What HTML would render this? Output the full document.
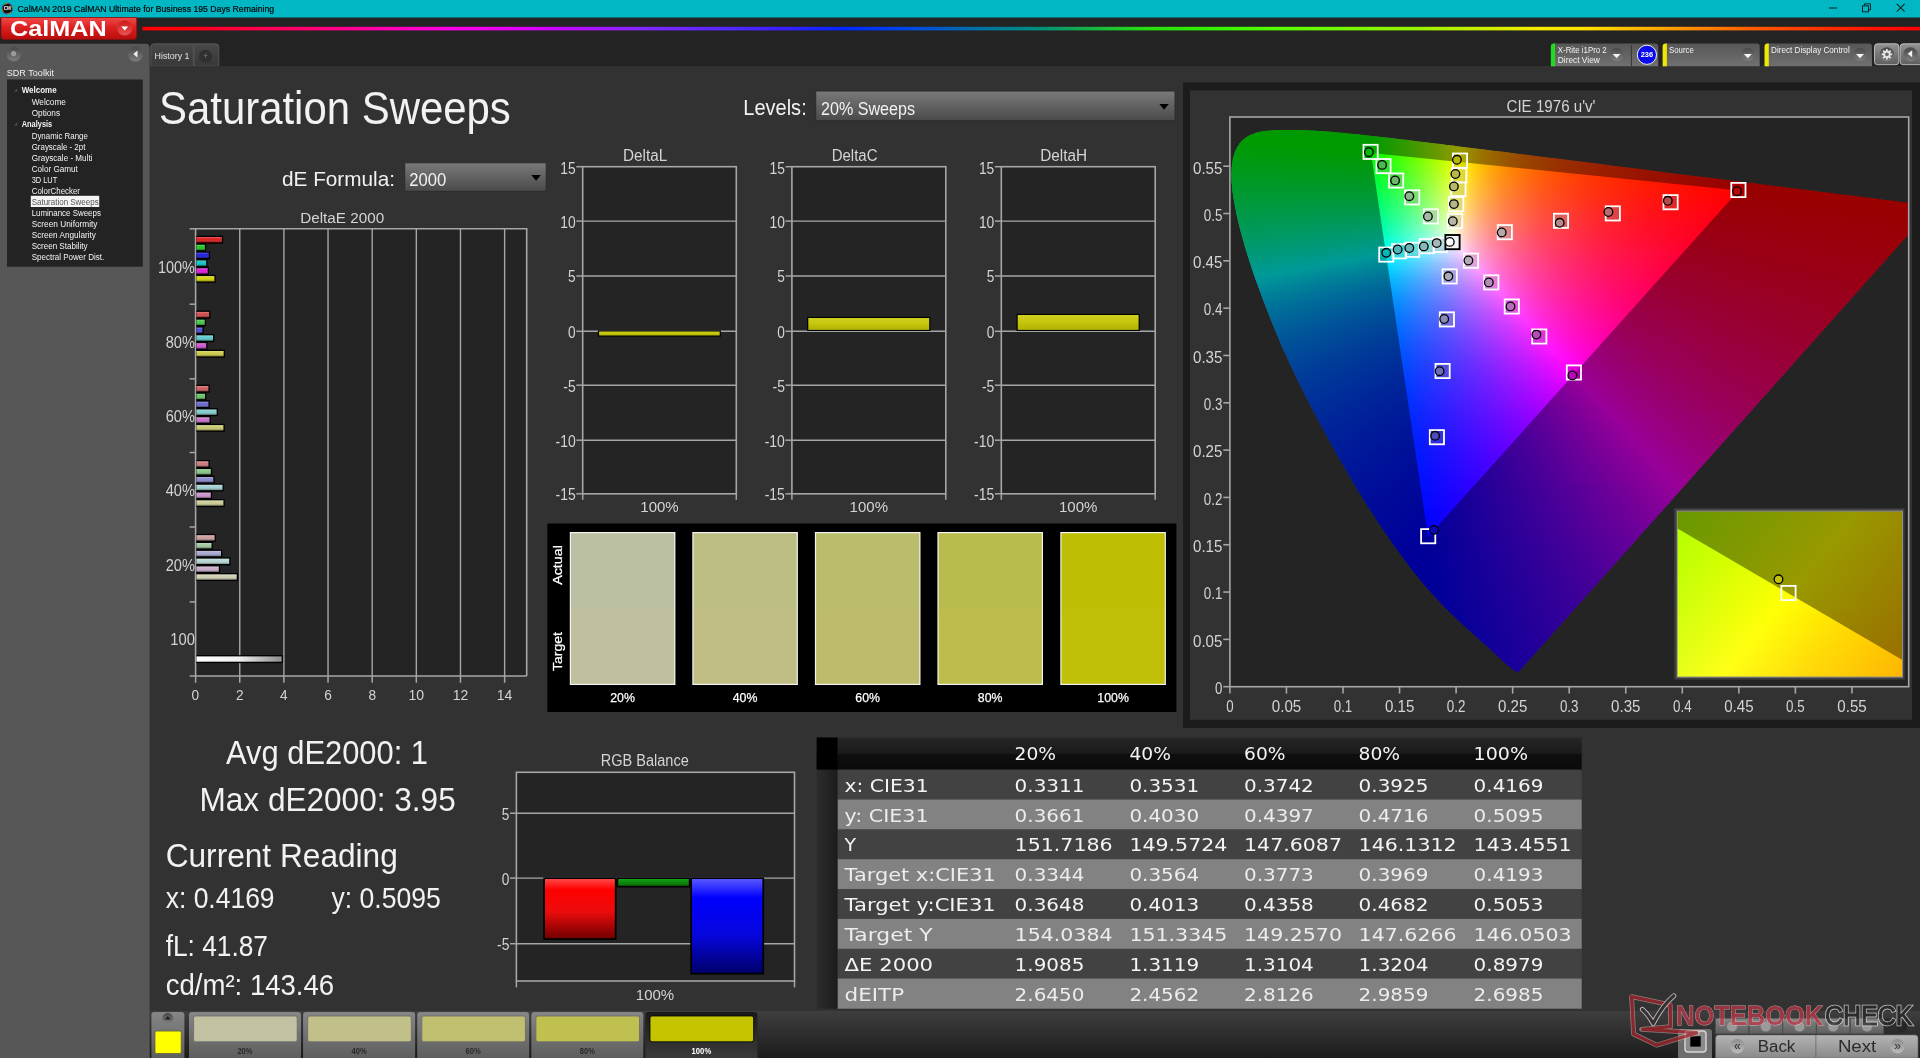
<!DOCTYPE html>
<html lang="en"><head><meta charset="utf-8"><title>CalMAN 2019 - Saturation Sweeps</title>
<style>
html,body{margin:0;padding:0;background:#323232;overflow:hidden}
body{width:1920px;height:1058px;font-family:"Liberation Sans", sans-serif}
svg{display:block;will-change:transform}
text{font-family:"Liberation Sans", sans-serif}
text.dj{font-family:"DejaVu Sans", "Liberation Sans", sans-serif}
</style></head><body>
<svg width="1920" height="1058" viewBox="0 0 1920 1058">
<defs><clipPath id="cplot"><rect x="1229.9" y="117.0" width="678.8" height="569.7"/></clipPath><clipPath id="clocus"><path d="M1518.7,671.6 L1518.6,671.6 L1518.5,671.6 L1518.4,671.7 L1518.2,671.7 L1518.1,671.7 L1517.9,671.6 L1517.7,671.6 L1517.6,671.6 L1517.4,671.6 L1517.2,671.6 L1517.1,671.6 L1516.9,671.6 L1516.7,671.6 L1516.5,671.5 L1516.3,671.5 L1516.0,671.4 L1515.8,671.3 L1515.5,671.2 L1515.1,670.9 L1514.7,670.7 L1514.1,670.3 L1513.6,670.0 L1513.0,669.5 L1512.4,669.1 L1511.7,668.6 L1511.0,668.0 L1510.3,667.4 L1509.5,666.7 L1508.6,666.0 L1507.7,665.2 L1506.7,664.4 L1505.7,663.5 L1504.5,662.5 L1503.3,661.4 L1502.1,660.3 L1500.8,659.1 L1499.4,657.8 L1498.0,656.5 L1496.5,655.1 L1494.9,653.6 L1493.3,652.1 L1491.6,650.5 L1489.7,648.8 L1487.8,647.1 L1485.8,645.3 L1483.6,643.3 L1481.4,641.3 L1479.0,639.1 L1476.5,636.9 L1473.9,634.5 L1471.2,632.1 L1468.4,629.6 L1465.5,627.0 L1462.5,624.2 L1459.4,621.3 L1456.1,618.2 L1452.7,615.0 L1449.2,611.5 L1445.5,607.9 L1441.8,604.0 L1437.9,600.0 L1433.9,595.7 L1429.7,591.1 L1425.3,586.1 L1420.7,580.5 L1415.7,574.3 L1410.3,567.5 L1404.7,560.1 L1398.7,552.0 L1392.6,543.4 L1386.3,534.3 L1379.8,524.7 L1373.1,514.6 L1366.3,503.9 L1359.4,492.7 L1352.3,480.9 L1345.1,468.6 L1337.9,455.9 L1330.6,442.9 L1323.4,429.7 L1316.2,416.3 L1309.1,402.7 L1302.1,389.0 L1295.3,375.2 L1288.8,361.5 L1282.6,347.9 L1276.9,334.5 L1271.5,321.3 L1266.4,308.5 L1261.7,296.0 L1257.3,284.0 L1253.2,272.4 L1249.5,261.3 L1246.2,250.8 L1243.3,240.8 L1240.7,231.5 L1238.5,222.8 L1236.6,214.6 L1235.1,206.9 L1233.8,199.8 L1232.8,193.2 L1232.1,187.0 L1231.6,181.4 L1231.5,176.1 L1231.5,171.2 L1231.8,166.7 L1232.3,162.5 L1233.0,158.5 L1234.0,154.9 L1235.1,151.6 L1236.5,148.6 L1238.1,145.8 L1239.8,143.3 L1241.7,141.1 L1243.8,139.2 L1246.0,137.5 L1248.3,136.0 L1250.8,134.7 L1253.3,133.7 L1256.0,132.8 L1258.7,132.1 L1261.6,131.5 L1264.5,131.1 L1267.5,130.7 L1270.5,130.5 L1273.7,130.2 L1276.8,130.1 L1280.0,130.0 L1283.2,129.9 L1286.4,129.9 L1289.6,129.9 L1292.8,129.9 L1296.0,129.9 L1299.3,130.0 L1302.5,130.1 L1305.8,130.2 L1309.1,130.4 L1312.5,130.5 L1315.9,130.7 L1319.3,130.9 L1322.9,131.2 L1326.4,131.5 L1330.0,131.7 L1333.7,132.0 L1337.4,132.4 L1341.2,132.7 L1345.1,133.1 L1349.0,133.5 L1353.1,133.9 L1357.1,134.3 L1361.3,134.8 L1365.6,135.2 L1369.9,135.7 L1374.3,136.2 L1378.8,136.7 L1383.4,137.2 L1388.1,137.8 L1392.9,138.3 L1397.8,138.9 L1402.8,139.5 L1407.9,140.1 L1413.1,140.8 L1418.4,141.4 L1423.8,142.1 L1429.3,142.7 L1434.9,143.4 L1440.7,144.1 L1446.5,144.9 L1452.5,145.6 L1458.6,146.4 L1464.8,147.2 L1471.2,147.9 L1477.6,148.8 L1484.2,149.6 L1490.9,150.4 L1497.7,151.3 L1504.6,152.1 L1511.7,153.0 L1518.8,153.9 L1526.1,154.8 L1533.5,155.8 L1540.9,156.7 L1548.5,157.7 L1556.2,158.6 L1564.0,159.6 L1571.9,160.6 L1579.8,161.6 L1587.9,162.6 L1596.0,163.6 L1604.1,164.6 L1612.4,165.7 L1620.7,166.7 L1629.0,167.8 L1637.2,168.8 L1645.5,169.8 L1653.6,170.9 L1661.6,171.9 L1669.6,172.9 L1677.5,173.9 L1685.5,174.9 L1693.4,175.9 L1701.3,176.9 L1709.1,177.8 L1716.8,178.8 L1724.4,179.8 L1731.7,180.7 L1738.9,181.6 L1746.0,182.5 L1752.8,183.3 L1759.5,184.1 L1766.1,185.0 L1772.5,185.8 L1778.7,186.6 L1784.8,187.3 L1790.7,188.1 L1796.4,188.8 L1801.8,189.5 L1807.2,190.1 L1812.3,190.8 L1817.2,191.4 L1822.0,192.0 L1826.6,192.6 L1831.0,193.1 L1835.3,193.7 L1839.5,194.2 L1843.5,194.7 L1847.3,195.2 L1851.0,195.6 L1854.6,196.1 L1858.2,196.5 L1861.6,197.0 L1865.0,197.4 L1868.2,197.8 L1871.4,198.2 L1874.4,198.6 L1877.4,198.9 L1880.2,199.3 L1882.9,199.7 L1885.6,200.0 L1888.1,200.3 L1890.6,200.6 L1892.9,200.9 L1895.2,201.2 L1897.3,201.5 L1899.4,201.7 L1901.3,202.0 L1903.1,202.2 L1904.7,202.4 L1906.3,202.6 L1907.8,202.8 L1909.3,203.0 L1910.7,203.1 L1912.0,203.3 L1913.3,203.5 L1914.5,203.6 L1915.6,203.8 L1916.7,203.9 L1917.7,204.0 L1918.6,204.1 L1919.5,204.2 L1920.3,204.3 L1921.0,204.4 L1921.6,204.5 L1922.2,204.6 L1922.8,204.7 L1923.4,204.7 L1924.0,204.8 L1924.5,204.9 L1925.0,204.9 L1925.5,205.0 L1926.0,205.1 L1926.4,205.1 L1926.9,205.2 L1927.3,205.2 L1927.7,205.3 L1928.1,205.3 L1928.6,205.4 L1929.0,205.4 L1929.4,205.5 L1929.8,205.5 L1930.2,205.6 L1930.6,205.7 L1931.0,205.7 L1931.4,205.7 L1931.7,205.8 L1932.0,205.8 L1932.3,205.9 L1932.5,205.9 L1932.6,205.9 L1932.8,205.9 L1932.9,205.9 L1933.0,206.0 L1933.2,206.0 L1933.3,206.0 L1933.4,206.0 L1933.5,206.0 L1933.6,206.0 L1933.6,206.0 L1933.7,206.0 L1933.7,206.0Z"/></clipPath><linearGradient id="cg0" gradientUnits="userSpaceOnUse" x1="1264" x2="1322" y1="0" y2="0"><stop offset="0.0000" stop-color="#00ff00"/><stop offset="1.0000" stop-color="#00ff00"/></linearGradient><linearGradient id="cg1" gradientUnits="userSpaceOnUse" x1="1254" x2="1346" y1="0" y2="0"><stop offset="0.0000" stop-color="#00ff00"/><stop offset="1.0000" stop-color="#00ff00"/></linearGradient><linearGradient id="cg2" gradientUnits="userSpaceOnUse" x1="1249" x2="1365" y1="0" y2="0"><stop offset="0.0000" stop-color="#00ff00"/><stop offset="1.0000" stop-color="#00ff00"/></linearGradient><linearGradient id="cg3" gradientUnits="userSpaceOnUse" x1="1245" x2="1383" y1="0" y2="0"><stop offset="0.0000" stop-color="#00ff00"/><stop offset="0.8913" stop-color="#00ff00"/><stop offset="1.0000" stop-color="#20ff00"/></linearGradient><linearGradient id="cg4" gradientUnits="userSpaceOnUse" x1="1242" x2="1400" y1="0" y2="0"><stop offset="0.0000" stop-color="#00ff00"/><stop offset="0.8038" stop-color="#00ff00"/><stop offset="1.0000" stop-color="#47ff00"/></linearGradient><linearGradient id="cg5" gradientUnits="userSpaceOnUse" x1="1240" x2="1416" y1="0" y2="0"><stop offset="0.0000" stop-color="#00ff01"/><stop offset="0.7330" stop-color="#00ff00"/><stop offset="0.8693" stop-color="#36ff00"/><stop offset="1.0000" stop-color="#71ff00"/></linearGradient><linearGradient id="cg6" gradientUnits="userSpaceOnUse" x1="1239" x2="1433" y1="0" y2="0"><stop offset="0.0000" stop-color="#00ff04"/><stop offset="0.6701" stop-color="#00ff00"/><stop offset="0.8351" stop-color="#49ff00"/><stop offset="1.0000" stop-color="#a1ff00"/></linearGradient><linearGradient id="cg7" gradientUnits="userSpaceOnUse" x1="1237" x2="1449" y1="0" y2="0"><stop offset="0.0000" stop-color="#00ff07"/><stop offset="0.2217" stop-color="#00ff00"/><stop offset="0.6274" stop-color="#01ff00"/><stop offset="0.8255" stop-color="#65ff00"/><stop offset="1.0000" stop-color="#d3ff00"/></linearGradient><linearGradient id="cg8" gradientUnits="userSpaceOnUse" x1="1236" x2="1465" y1="0" y2="0"><stop offset="0.0000" stop-color="#00ff0a"/><stop offset="0.2969" stop-color="#00ff00"/><stop offset="0.5852" stop-color="#00ff00"/><stop offset="0.7686" stop-color="#65ff00"/><stop offset="0.8777" stop-color="#adff00"/><stop offset="0.9825" stop-color="#fdff00"/><stop offset="1.0000" stop-color="#fff300"/></linearGradient><linearGradient id="cg9" gradientUnits="userSpaceOnUse" x1="1235" x2="1481" y1="0" y2="0"><stop offset="0.0000" stop-color="#00ff0d"/><stop offset="0.3577" stop-color="#00ff00"/><stop offset="0.5488" stop-color="#00ff00"/><stop offset="0.6463" stop-color="#37ff00"/><stop offset="0.7439" stop-color="#75ff00"/><stop offset="0.8333" stop-color="#b7ff00"/><stop offset="0.9187" stop-color="#feff00"/><stop offset="1.0000" stop-color="#ffc500"/></linearGradient><linearGradient id="cg10" gradientUnits="userSpaceOnUse" x1="1234" x2="1497" y1="0" y2="0"><stop offset="0.0000" stop-color="#00ff0f"/><stop offset="0.5209" stop-color="#01ff00"/><stop offset="0.6160" stop-color="#3bff00"/><stop offset="0.7034" stop-color="#78ff00"/><stop offset="0.7871" stop-color="#baff00"/><stop offset="0.8631" stop-color="#feff00"/><stop offset="0.9278" stop-color="#ffcc00"/><stop offset="1.0000" stop-color="#ffa200"/></linearGradient><linearGradient id="cg11" gradientUnits="userSpaceOnUse" x1="1233" x2="1513" y1="0" y2="0"><stop offset="0.0000" stop-color="#00ff12"/><stop offset="0.4929" stop-color="#00ff00"/><stop offset="0.5821" stop-color="#3bff00"/><stop offset="0.6643" stop-color="#78ff00"/><stop offset="0.7429" stop-color="#baff00"/><stop offset="0.8143" stop-color="#ffff00"/><stop offset="0.8536" stop-color="#ffdb00"/><stop offset="0.8964" stop-color="#ffbc00"/><stop offset="1.0000" stop-color="#ff8700"/></linearGradient><linearGradient id="cg12" gradientUnits="userSpaceOnUse" x1="1232" x2="1529" y1="0" y2="0"><stop offset="0.0000" stop-color="#00ff15"/><stop offset="0.4680" stop-color="#00ff02"/><stop offset="0.5488" stop-color="#38ff00"/><stop offset="0.6263" stop-color="#75ff00"/><stop offset="0.6970" stop-color="#b4ff00"/><stop offset="0.7710" stop-color="#fffe00"/><stop offset="0.8148" stop-color="#ffd500"/><stop offset="0.8687" stop-color="#ffae00"/><stop offset="0.9293" stop-color="#ff8e00"/><stop offset="1.0000" stop-color="#ff7100"/></linearGradient><linearGradient id="cg13" gradientUnits="userSpaceOnUse" x1="1232" x2="1545" y1="0" y2="0"><stop offset="0.0000" stop-color="#00ff18"/><stop offset="0.4441" stop-color="#00ff06"/><stop offset="0.5176" stop-color="#35ff02"/><stop offset="0.5942" stop-color="#75ff00"/><stop offset="0.6645" stop-color="#b8ff00"/><stop offset="0.7284" stop-color="#fdff00"/><stop offset="0.7859" stop-color="#ffca00"/><stop offset="0.8435" stop-color="#ffa200"/><stop offset="0.9137" stop-color="#ff7e00"/><stop offset="1.0000" stop-color="#ff5f00"/></linearGradient><linearGradient id="cg14" gradientUnits="userSpaceOnUse" x1="1231" x2="1561" y1="0" y2="0"><stop offset="0.0000" stop-color="#00ff1b"/><stop offset="0.4273" stop-color="#00ff0a"/><stop offset="0.5000" stop-color="#3aff05"/><stop offset="0.5697" stop-color="#78ff00"/><stop offset="0.6333" stop-color="#b8ff00"/><stop offset="0.6939" stop-color="#fdff00"/><stop offset="0.7545" stop-color="#ffc400"/><stop offset="0.8212" stop-color="#ff9600"/><stop offset="0.9030" stop-color="#ff7000"/><stop offset="1.0000" stop-color="#ff5000"/></linearGradient><linearGradient id="cg15" gradientUnits="userSpaceOnUse" x1="1231" x2="1577" y1="0" y2="0"><stop offset="0.0000" stop-color="#00ff1e"/><stop offset="0.4075" stop-color="#00ff0d"/><stop offset="0.4769" stop-color="#39ff09"/><stop offset="0.5434" stop-color="#77ff05"/><stop offset="0.6040" stop-color="#b8ff00"/><stop offset="0.6618" stop-color="#feff00"/><stop offset="0.7254" stop-color="#ffbe00"/><stop offset="0.7977" stop-color="#ff8d00"/><stop offset="0.8873" stop-color="#ff6500"/><stop offset="1.0000" stop-color="#ff4400"/></linearGradient><linearGradient id="cg16" gradientUnits="userSpaceOnUse" x1="1231" x2="1593" y1="0" y2="0"><stop offset="0.0000" stop-color="#00ff21"/><stop offset="0.3895" stop-color="#00ff11"/><stop offset="0.4503" stop-color="#34ff0e"/><stop offset="0.5166" stop-color="#74ff09"/><stop offset="0.5773" stop-color="#b8ff05"/><stop offset="0.6326" stop-color="#feff00"/><stop offset="0.6630" stop-color="#ffdb00"/><stop offset="0.6961" stop-color="#ffbb00"/><stop offset="0.7762" stop-color="#ff8500"/><stop offset="0.8757" stop-color="#ff5b00"/><stop offset="1.0000" stop-color="#ff3900"/></linearGradient><linearGradient id="cg17" gradientUnits="userSpaceOnUse" x1="1230" x2="1609" y1="0" y2="0"><stop offset="0.0000" stop-color="#00ff24"/><stop offset="0.3773" stop-color="#01ff15"/><stop offset="0.4406" stop-color="#3bff11"/><stop offset="0.4987" stop-color="#77ff0e"/><stop offset="0.5541" stop-color="#b8ff09"/><stop offset="0.6069" stop-color="#ffff05"/><stop offset="0.6385" stop-color="#ffd702"/><stop offset="0.6728" stop-color="#ffb600"/><stop offset="0.7546" stop-color="#ff7f00"/><stop offset="0.8628" stop-color="#ff5200"/><stop offset="1.0000" stop-color="#ff3000"/></linearGradient><linearGradient id="cg18" gradientUnits="userSpaceOnUse" x1="1230" x2="1624" y1="0" y2="0"><stop offset="0.0000" stop-color="#00ff27"/><stop offset="0.3629" stop-color="#00ff19"/><stop offset="0.4239" stop-color="#3aff16"/><stop offset="0.4797" stop-color="#77ff12"/><stop offset="0.5330" stop-color="#b9ff0e"/><stop offset="0.5812" stop-color="#fcff0a"/><stop offset="0.6193" stop-color="#ffd106"/><stop offset="0.6523" stop-color="#ffb102"/><stop offset="0.6929" stop-color="#ff9200"/><stop offset="0.7386" stop-color="#ff7700"/><stop offset="0.8528" stop-color="#ff4a00"/><stop offset="1.0000" stop-color="#ff2800"/></linearGradient><linearGradient id="cg19" gradientUnits="userSpaceOnUse" x1="1230" x2="1640" y1="0" y2="0"><stop offset="0.0000" stop-color="#00ff2a"/><stop offset="0.3488" stop-color="#00ff1d"/><stop offset="0.4024" stop-color="#35ff1a"/><stop offset="0.4585" stop-color="#74ff17"/><stop offset="0.5098" stop-color="#b6ff13"/><stop offset="0.5585" stop-color="#fdff0f"/><stop offset="0.5951" stop-color="#ffd00a"/><stop offset="0.6293" stop-color="#ffae06"/><stop offset="0.6707" stop-color="#ff8e02"/><stop offset="0.7195" stop-color="#ff7100"/><stop offset="0.8390" stop-color="#ff4400"/><stop offset="1.0000" stop-color="#ff2100"/></linearGradient><linearGradient id="cg20" gradientUnits="userSpaceOnUse" x1="1230" x2="1656" y1="0" y2="0"><stop offset="0.0000" stop-color="#00ff2d"/><stop offset="0.3380" stop-color="#01ff21"/><stop offset="0.3920" stop-color="#3aff1e"/><stop offset="0.4437" stop-color="#77ff1b"/><stop offset="0.4930" stop-color="#b9ff18"/><stop offset="0.5376" stop-color="#fdff15"/><stop offset="0.5728" stop-color="#ffcf0e"/><stop offset="0.6103" stop-color="#ffa909"/><stop offset="0.6549" stop-color="#ff8705"/><stop offset="0.7042" stop-color="#ff6b01"/><stop offset="0.7629" stop-color="#ff5200"/><stop offset="0.8310" stop-color="#ff3d00"/><stop offset="1.0000" stop-color="#ff1a00"/></linearGradient><linearGradient id="cg21" gradientUnits="userSpaceOnUse" x1="1230" x2="1672" y1="0" y2="0"><stop offset="0.0000" stop-color="#00ff30"/><stop offset="0.3258" stop-color="#00ff25"/><stop offset="0.3778" stop-color="#39ff23"/><stop offset="0.4253" stop-color="#74ff20"/><stop offset="0.4683" stop-color="#afff1d"/><stop offset="0.5204" stop-color="#fffc19"/><stop offset="0.5520" stop-color="#ffcf13"/><stop offset="0.5905" stop-color="#ffa60d"/><stop offset="0.6357" stop-color="#ff8308"/><stop offset="0.6878" stop-color="#ff6603"/><stop offset="0.7489" stop-color="#ff4c00"/><stop offset="0.8190" stop-color="#ff3700"/><stop offset="1.0000" stop-color="#ff1500"/></linearGradient><linearGradient id="cg22" gradientUnits="userSpaceOnUse" x1="1230" x2="1688" y1="0" y2="0"><stop offset="0.0000" stop-color="#00ff33"/><stop offset="0.3144" stop-color="#00ff29"/><stop offset="0.3646" stop-color="#39ff27"/><stop offset="0.4127" stop-color="#76ff24"/><stop offset="0.4585" stop-color="#baff22"/><stop offset="0.5000" stop-color="#ffff1f"/><stop offset="0.5328" stop-color="#ffce17"/><stop offset="0.5721" stop-color="#ffa310"/><stop offset="0.6179" stop-color="#ff7f0a"/><stop offset="0.6703" stop-color="#ff6206"/><stop offset="0.7336" stop-color="#ff4801"/><stop offset="0.8079" stop-color="#ff3200"/><stop offset="1.0000" stop-color="#ff0f00"/></linearGradient><linearGradient id="cg23" gradientUnits="userSpaceOnUse" x1="1230" x2="1704" y1="0" y2="0"><stop offset="0.0000" stop-color="#00ff36"/><stop offset="0.3038" stop-color="#00ff2d"/><stop offset="0.3481" stop-color="#33ff2c"/><stop offset="0.3966" stop-color="#73ff29"/><stop offset="0.4409" stop-color="#b6ff27"/><stop offset="0.4831" stop-color="#ffff24"/><stop offset="0.5169" stop-color="#ffcb1b"/><stop offset="0.5549" stop-color="#ffa114"/><stop offset="0.6013" stop-color="#ff7c0d"/><stop offset="0.6561" stop-color="#ff5d07"/><stop offset="0.7215" stop-color="#ff4303"/><stop offset="0.7996" stop-color="#ff2d00"/><stop offset="1.0000" stop-color="#ff0b00"/></linearGradient><linearGradient id="cg24" gradientUnits="userSpaceOnUse" x1="1230" x2="1720" y1="0" y2="0"><stop offset="0.0000" stop-color="#00ff39"/><stop offset="0.2959" stop-color="#01ff32"/><stop offset="0.3429" stop-color="#3aff30"/><stop offset="0.3857" stop-color="#76ff2e"/><stop offset="0.4265" stop-color="#b7ff2c"/><stop offset="0.4673" stop-color="#fffe2a"/><stop offset="0.5000" stop-color="#ffca1f"/><stop offset="0.5408" stop-color="#ff9c16"/><stop offset="0.5878" stop-color="#ff770f"/><stop offset="0.6429" stop-color="#ff5909"/><stop offset="0.7102" stop-color="#ff3e04"/><stop offset="0.7898" stop-color="#ff2800"/><stop offset="1.0000" stop-color="#ff0600"/></linearGradient><linearGradient id="cg25" gradientUnits="userSpaceOnUse" x1="1230" x2="1736" y1="0" y2="0"><stop offset="0.0000" stop-color="#00ff3c"/><stop offset="0.2866" stop-color="#00ff36"/><stop offset="0.3320" stop-color="#3aff34"/><stop offset="0.3735" stop-color="#76ff33"/><stop offset="0.4111" stop-color="#b3ff31"/><stop offset="0.4526" stop-color="#fffd2f"/><stop offset="0.4862" stop-color="#ffc623"/><stop offset="0.5257" stop-color="#ff991a"/><stop offset="0.5731" stop-color="#ff7412"/><stop offset="0.6304" stop-color="#ff540b"/><stop offset="0.6996" stop-color="#ff3a06"/><stop offset="0.7826" stop-color="#ff2401"/><stop offset="1.0000" stop-color="#ff0200"/></linearGradient><linearGradient id="cg26" gradientUnits="userSpaceOnUse" x1="1230" x2="1752" y1="0" y2="0"><stop offset="0.0000" stop-color="#00ff3f"/><stop offset="0.2778" stop-color="#00ff3a"/><stop offset="0.3180" stop-color="#34ff39"/><stop offset="0.3602" stop-color="#73ff38"/><stop offset="0.3966" stop-color="#b0ff36"/><stop offset="0.4387" stop-color="#fffd34"/><stop offset="0.4713" stop-color="#ffc628"/><stop offset="0.5115" stop-color="#ff971d"/><stop offset="0.5594" stop-color="#ff7114"/><stop offset="0.6188" stop-color="#ff500d"/><stop offset="0.6916" stop-color="#ff3507"/><stop offset="0.7778" stop-color="#ff1f02"/><stop offset="0.8889" stop-color="#ff0c00"/><stop offset="1.0000" stop-color="#ff0000"/></linearGradient><linearGradient id="cg27" gradientUnits="userSpaceOnUse" x1="1230" x2="1768" y1="0" y2="0"><stop offset="0.0000" stop-color="#00ff43"/><stop offset="0.2714" stop-color="#01ff3f"/><stop offset="0.3123" stop-color="#39ff3e"/><stop offset="0.3494" stop-color="#73ff3d"/><stop offset="0.4257" stop-color="#fffc3a"/><stop offset="0.4591" stop-color="#ffc22b"/><stop offset="0.5000" stop-color="#ff9220"/><stop offset="0.5502" stop-color="#ff6b16"/><stop offset="0.6097" stop-color="#ff4b0e"/><stop offset="0.6877" stop-color="#ff2f07"/><stop offset="0.7825" stop-color="#ff1902"/><stop offset="0.9331" stop-color="#ff0300"/><stop offset="1.0000" stop-color="#ff0000"/></linearGradient><linearGradient id="cg28" gradientUnits="userSpaceOnUse" x1="1230" x2="1784" y1="0" y2="0"><stop offset="0.0000" stop-color="#00ff46"/><stop offset="0.2635" stop-color="#00ff43"/><stop offset="0.3051" stop-color="#3bff42"/><stop offset="0.3430" stop-color="#79ff42"/><stop offset="0.3791" stop-color="#bbff41"/><stop offset="0.4116" stop-color="#ffff40"/><stop offset="0.4458" stop-color="#ffc230"/><stop offset="0.4874" stop-color="#ff9023"/><stop offset="0.5379" stop-color="#ff6818"/><stop offset="0.5993" stop-color="#ff4710"/><stop offset="0.6823" stop-color="#ff2b08"/><stop offset="0.7852" stop-color="#ff1402"/><stop offset="0.9242" stop-color="#ff0000"/><stop offset="1.0000" stop-color="#ff0000"/></linearGradient><linearGradient id="cg29" gradientUnits="userSpaceOnUse" x1="1231" x2="1800" y1="0" y2="0"><stop offset="0.0000" stop-color="#00ff49"/><stop offset="0.2548" stop-color="#00ff47"/><stop offset="0.2917" stop-color="#35ff47"/><stop offset="0.3304" stop-color="#75ff47"/><stop offset="0.3656" stop-color="#b8ff46"/><stop offset="0.3989" stop-color="#ffff46"/><stop offset="0.4323" stop-color="#ffc134"/><stop offset="0.4745" stop-color="#ff8e26"/><stop offset="0.5255" stop-color="#ff651b"/><stop offset="0.5888" stop-color="#ff4411"/><stop offset="0.6766" stop-color="#ff2609"/><stop offset="0.7891" stop-color="#ff0f03"/><stop offset="0.8963" stop-color="#ff0000"/><stop offset="1.0000" stop-color="#ff0000"/></linearGradient><linearGradient id="cg30" gradientUnits="userSpaceOnUse" x1="1231" x2="1816" y1="0" y2="0"><stop offset="0.0000" stop-color="#00ff4c"/><stop offset="0.2479" stop-color="#00ff4c"/><stop offset="0.2821" stop-color="#32ff4c"/><stop offset="0.3197" stop-color="#72ff4c"/><stop offset="0.3538" stop-color="#b4ff4c"/><stop offset="0.3880" stop-color="#fffe4b"/><stop offset="0.4034" stop-color="#ffdd42"/><stop offset="0.4222" stop-color="#ffbd38"/><stop offset="0.4632" stop-color="#ff8b29"/><stop offset="0.5145" stop-color="#ff621d"/><stop offset="0.5795" stop-color="#ff4013"/><stop offset="0.6735" stop-color="#ff220a"/><stop offset="0.7949" stop-color="#ff0a03"/><stop offset="0.8684" stop-color="#ff0000"/><stop offset="1.0000" stop-color="#ff0000"/></linearGradient><linearGradient id="cg31" gradientUnits="userSpaceOnUse" x1="1231" x2="1831" y1="0" y2="0"><stop offset="0.0000" stop-color="#00ff4f"/><stop offset="0.2433" stop-color="#00ff50"/><stop offset="0.2800" stop-color="#3aff51"/><stop offset="0.3133" stop-color="#75ff51"/><stop offset="0.3433" stop-color="#b1ff51"/><stop offset="0.3783" stop-color="#fffd51"/><stop offset="0.3933" stop-color="#ffdd47"/><stop offset="0.4117" stop-color="#ffbd3d"/><stop offset="0.4550" stop-color="#ff872c"/><stop offset="0.5083" stop-color="#ff5d1e"/><stop offset="0.5733" stop-color="#ff3c14"/><stop offset="0.6733" stop-color="#ff1d0a"/><stop offset="0.8017" stop-color="#ff0603"/><stop offset="0.8450" stop-color="#ff0001"/><stop offset="1.0000" stop-color="#ff0000"/></linearGradient><linearGradient id="cg32" gradientUnits="userSpaceOnUse" x1="1231" x2="1847" y1="0" y2="0"><stop offset="0.0000" stop-color="#00ff53"/><stop offset="0.2370" stop-color="#00ff55"/><stop offset="0.2711" stop-color="#37ff56"/><stop offset="0.3036" stop-color="#72ff56"/><stop offset="0.3328" stop-color="#aeff57"/><stop offset="0.3685" stop-color="#fffd57"/><stop offset="0.3847" stop-color="#ffd94b"/><stop offset="0.4026" stop-color="#ffb940"/><stop offset="0.4448" stop-color="#ff852f"/><stop offset="0.4984" stop-color="#ff5a20"/><stop offset="0.5649" stop-color="#ff3915"/><stop offset="0.6705" stop-color="#ff190b"/><stop offset="0.8084" stop-color="#ff0103"/><stop offset="1.0000" stop-color="#ff0000"/></linearGradient><linearGradient id="cg33" gradientUnits="userSpaceOnUse" x1="1232" x2="1863" y1="0" y2="0"><stop offset="0.0000" stop-color="#00ff56"/><stop offset="0.2298" stop-color="#00ff5a"/><stop offset="0.2615" stop-color="#33ff5a"/><stop offset="0.2948" stop-color="#72ff5b"/><stop offset="0.3582" stop-color="#fffc5c"/><stop offset="0.3740" stop-color="#ffd850"/><stop offset="0.3914" stop-color="#ffb945"/><stop offset="0.4342" stop-color="#ff8232"/><stop offset="0.4881" stop-color="#ff5823"/><stop offset="0.5563" stop-color="#ff3617"/><stop offset="0.6593" stop-color="#ff170c"/><stop offset="0.7940" stop-color="#ff0004"/><stop offset="1.0000" stop-color="#ff0000"/></linearGradient><linearGradient id="cg34" gradientUnits="userSpaceOnUse" x1="1232" x2="1879" y1="0" y2="0"><stop offset="0.0000" stop-color="#00ff59"/><stop offset="0.2257" stop-color="#01ff5e"/><stop offset="0.2597" stop-color="#3bff60"/><stop offset="0.2906" stop-color="#78ff61"/><stop offset="0.3199" stop-color="#b9ff62"/><stop offset="0.3478" stop-color="#ffff63"/><stop offset="0.3632" stop-color="#ffda56"/><stop offset="0.3818" stop-color="#ffb849"/><stop offset="0.4235" stop-color="#ff8235"/><stop offset="0.4776" stop-color="#ff5625"/><stop offset="0.5456" stop-color="#ff3418"/><stop offset="0.6445" stop-color="#ff170d"/><stop offset="0.7728" stop-color="#ff0005"/><stop offset="1.0000" stop-color="#ff0000"/></linearGradient><linearGradient id="cg35" gradientUnits="userSpaceOnUse" x1="1232" x2="1895" y1="0" y2="0"><stop offset="0.0000" stop-color="#00ff5d"/><stop offset="0.2202" stop-color="#00ff63"/><stop offset="0.2534" stop-color="#3bff65"/><stop offset="0.2836" stop-color="#78ff66"/><stop offset="0.3122" stop-color="#b9ff68"/><stop offset="0.3394" stop-color="#ffff69"/><stop offset="0.3544" stop-color="#ffda5b"/><stop offset="0.3725" stop-color="#ffb74e"/><stop offset="0.3922" stop-color="#ff9a42"/><stop offset="0.4148" stop-color="#ff7f38"/><stop offset="0.4691" stop-color="#ff5327"/><stop offset="0.5385" stop-color="#ff311a"/><stop offset="0.6320" stop-color="#ff150f"/><stop offset="0.7511" stop-color="#ff0006"/><stop offset="1.0000" stop-color="#ff0000"/></linearGradient><linearGradient id="cg36" gradientUnits="userSpaceOnUse" x1="1233" x2="1909" y1="0" y2="0"><stop offset="0.0000" stop-color="#00ff60"/><stop offset="0.2145" stop-color="#00ff68"/><stop offset="0.2441" stop-color="#35ff6a"/><stop offset="0.2751" stop-color="#74ff6c"/><stop offset="0.3018" stop-color="#b2ff6d"/><stop offset="0.3314" stop-color="#fffe6f"/><stop offset="0.3462" stop-color="#ffd960"/><stop offset="0.3639" stop-color="#ffb652"/><stop offset="0.3846" stop-color="#ff9745"/><stop offset="0.4068" stop-color="#ff7d3b"/><stop offset="0.4615" stop-color="#ff5129"/><stop offset="0.5325" stop-color="#ff2e1b"/><stop offset="0.6198" stop-color="#ff1510"/><stop offset="0.7322" stop-color="#ff0008"/><stop offset="1.0000" stop-color="#ff0000"/></linearGradient><linearGradient id="cg37" gradientUnits="userSpaceOnUse" x1="1233" x2="1909" y1="0" y2="0"><stop offset="0.0000" stop-color="#00ff63"/><stop offset="0.2160" stop-color="#01ff6d"/><stop offset="0.2470" stop-color="#3aff6f"/><stop offset="0.2751" stop-color="#74ff71"/><stop offset="0.3018" stop-color="#b2ff73"/><stop offset="0.3314" stop-color="#fffd75"/><stop offset="0.3462" stop-color="#ffd866"/><stop offset="0.3639" stop-color="#ffb657"/><stop offset="0.3846" stop-color="#ff9649"/><stop offset="0.4068" stop-color="#ff7c3e"/><stop offset="0.4615" stop-color="#ff502c"/><stop offset="0.5311" stop-color="#ff2e1d"/><stop offset="0.6183" stop-color="#ff1412"/><stop offset="0.7293" stop-color="#ff0009"/><stop offset="1.0000" stop-color="#ff0000"/></linearGradient><linearGradient id="cg38" gradientUnits="userSpaceOnUse" x1="1233" x2="1909" y1="0" y2="0"><stop offset="0.0000" stop-color="#00ff67"/><stop offset="0.2160" stop-color="#00ff72"/><stop offset="0.2470" stop-color="#39ff74"/><stop offset="0.2751" stop-color="#74ff77"/><stop offset="0.3003" stop-color="#afff79"/><stop offset="0.3314" stop-color="#fffc7b"/><stop offset="0.3462" stop-color="#ffd76b"/><stop offset="0.3639" stop-color="#ffb55b"/><stop offset="0.3846" stop-color="#ff964d"/><stop offset="0.4068" stop-color="#ff7c42"/><stop offset="0.4615" stop-color="#ff502e"/><stop offset="0.5311" stop-color="#ff2e1f"/><stop offset="0.6183" stop-color="#ff1414"/><stop offset="0.7278" stop-color="#ff000b"/><stop offset="1.0000" stop-color="#ff0000"/></linearGradient><linearGradient id="cg39" gradientUnits="userSpaceOnUse" x1="1234" x2="1909" y1="0" y2="0"><stop offset="0.0000" stop-color="#00ff6a"/><stop offset="0.2148" stop-color="#00ff77"/><stop offset="0.2430" stop-color="#33ff79"/><stop offset="0.2726" stop-color="#70ff7c"/><stop offset="0.3304" stop-color="#fffc81"/><stop offset="0.3452" stop-color="#ffd770"/><stop offset="0.3630" stop-color="#ffb460"/><stop offset="0.3837" stop-color="#ff9551"/><stop offset="0.4059" stop-color="#ff7b45"/><stop offset="0.4607" stop-color="#ff4f31"/><stop offset="0.5304" stop-color="#ff2d21"/><stop offset="0.6163" stop-color="#ff1415"/><stop offset="0.7244" stop-color="#ff000c"/><stop offset="1.0000" stop-color="#ff0000"/></linearGradient><linearGradient id="cg40" gradientUnits="userSpaceOnUse" x1="1234" x2="1909" y1="0" y2="0"><stop offset="0.0000" stop-color="#00ff6e"/><stop offset="0.2148" stop-color="#00ff7c"/><stop offset="0.2430" stop-color="#33ff7f"/><stop offset="0.2741" stop-color="#73ff82"/><stop offset="0.3022" stop-color="#b7ff86"/><stop offset="0.3289" stop-color="#ffff89"/><stop offset="0.3437" stop-color="#ffd977"/><stop offset="0.3615" stop-color="#ffb666"/><stop offset="0.3822" stop-color="#ff9656"/><stop offset="0.4044" stop-color="#ff7c4a"/><stop offset="0.4593" stop-color="#ff4f34"/><stop offset="0.5289" stop-color="#ff2d24"/><stop offset="0.6133" stop-color="#ff1417"/><stop offset="0.7215" stop-color="#ff000e"/><stop offset="1.0000" stop-color="#ff0001"/></linearGradient><linearGradient id="cg41" gradientUnits="userSpaceOnUse" x1="1234" x2="1909" y1="0" y2="0"><stop offset="0.0000" stop-color="#00ff71"/><stop offset="0.2163" stop-color="#01ff81"/><stop offset="0.2474" stop-color="#3bff85"/><stop offset="0.2756" stop-color="#77ff88"/><stop offset="0.3022" stop-color="#b7ff8c"/><stop offset="0.3289" stop-color="#fffe90"/><stop offset="0.3437" stop-color="#ffd87d"/><stop offset="0.3615" stop-color="#ffb56b"/><stop offset="0.3822" stop-color="#ff955b"/><stop offset="0.4044" stop-color="#ff7b4d"/><stop offset="0.4593" stop-color="#ff4f37"/><stop offset="0.5289" stop-color="#ff2d26"/><stop offset="0.6119" stop-color="#ff1419"/><stop offset="0.7185" stop-color="#ff000f"/><stop offset="1.0000" stop-color="#ff0002"/></linearGradient><linearGradient id="cg42" gradientUnits="userSpaceOnUse" x1="1235" x2="1909" y1="0" y2="0"><stop offset="0.0000" stop-color="#00ff75"/><stop offset="0.2151" stop-color="#00ff86"/><stop offset="0.2448" stop-color="#37ff8a"/><stop offset="0.2730" stop-color="#73ff8e"/><stop offset="0.2997" stop-color="#b3ff92"/><stop offset="0.3279" stop-color="#fffe96"/><stop offset="0.3427" stop-color="#ffd882"/><stop offset="0.3605" stop-color="#ffb46f"/><stop offset="0.3813" stop-color="#ff945f"/><stop offset="0.4036" stop-color="#ff7a51"/><stop offset="0.4585" stop-color="#ff4e3a"/><stop offset="0.5282" stop-color="#ff2c28"/><stop offset="0.6113" stop-color="#ff131b"/><stop offset="0.7166" stop-color="#ff0010"/><stop offset="1.0000" stop-color="#ff0003"/></linearGradient><linearGradient id="cg43" gradientUnits="userSpaceOnUse" x1="1235" x2="1909" y1="0" y2="0"><stop offset="0.0000" stop-color="#00ff79"/><stop offset="0.2151" stop-color="#00ff8b"/><stop offset="0.2433" stop-color="#34ff8f"/><stop offset="0.2730" stop-color="#73ff94"/><stop offset="0.2982" stop-color="#b0ff98"/><stop offset="0.3279" stop-color="#fffd9c"/><stop offset="0.3427" stop-color="#ffd788"/><stop offset="0.3605" stop-color="#ffb374"/><stop offset="0.3813" stop-color="#ff9463"/><stop offset="0.4036" stop-color="#ff7954"/><stop offset="0.4585" stop-color="#ff4d3c"/><stop offset="0.5282" stop-color="#ff2c2a"/><stop offset="0.6098" stop-color="#ff131d"/><stop offset="0.7136" stop-color="#ff0012"/><stop offset="1.0000" stop-color="#ff0003"/></linearGradient><linearGradient id="cg44" gradientUnits="userSpaceOnUse" x1="1236" x2="1909" y1="0" y2="0"><stop offset="0.0000" stop-color="#00ff7c"/><stop offset="0.2155" stop-color="#01ff91"/><stop offset="0.2452" stop-color="#39ff95"/><stop offset="0.2719" stop-color="#73ff9a"/><stop offset="0.2957" stop-color="#acff9e"/><stop offset="0.3269" stop-color="#fffca3"/><stop offset="0.3418" stop-color="#ffd68d"/><stop offset="0.3596" stop-color="#ffb279"/><stop offset="0.3804" stop-color="#ff9367"/><stop offset="0.4027" stop-color="#ff7958"/><stop offset="0.4577" stop-color="#ff4d3f"/><stop offset="0.5275" stop-color="#ff2b2c"/><stop offset="0.6077" stop-color="#ff131f"/><stop offset="0.7103" stop-color="#ff0014"/><stop offset="1.0000" stop-color="#ff0004"/></linearGradient><linearGradient id="cg45" gradientUnits="userSpaceOnUse" x1="1236" x2="1909" y1="0" y2="0"><stop offset="0.0000" stop-color="#00ff80"/><stop offset="0.2155" stop-color="#00ff96"/><stop offset="0.2452" stop-color="#39ff9b"/><stop offset="0.2719" stop-color="#73ffa0"/><stop offset="0.3001" stop-color="#b8ffa5"/><stop offset="0.3254" stop-color="#feffab"/><stop offset="0.3269" stop-color="#fffba9"/><stop offset="0.3418" stop-color="#ffd593"/><stop offset="0.3596" stop-color="#ffb27e"/><stop offset="0.3804" stop-color="#ff926b"/><stop offset="0.4027" stop-color="#ff785c"/><stop offset="0.4577" stop-color="#ff4c42"/><stop offset="0.5275" stop-color="#ff2a2e"/><stop offset="0.6077" stop-color="#ff1320"/><stop offset="0.7073" stop-color="#ff0015"/><stop offset="1.0000" stop-color="#ff0005"/></linearGradient><linearGradient id="cg46" gradientUnits="userSpaceOnUse" x1="1237" x2="1909" y1="0" y2="0"><stop offset="0.0000" stop-color="#00ff84"/><stop offset="0.2143" stop-color="#00ff9c"/><stop offset="0.2426" stop-color="#35ffa0"/><stop offset="0.2723" stop-color="#76ffa6"/><stop offset="0.2991" stop-color="#b8ffac"/><stop offset="0.3244" stop-color="#ffffb2"/><stop offset="0.3393" stop-color="#ffd89a"/><stop offset="0.3571" stop-color="#ffb384"/><stop offset="0.3765" stop-color="#ff9572"/><stop offset="0.3988" stop-color="#ff7a61"/><stop offset="0.4539" stop-color="#ff4d46"/><stop offset="0.5238" stop-color="#ff2b31"/><stop offset="0.6042" stop-color="#ff1322"/><stop offset="0.7039" stop-color="#ff0017"/><stop offset="1.0000" stop-color="#ff0006"/></linearGradient><linearGradient id="cg47" gradientUnits="userSpaceOnUse" x1="1237" x2="1909" y1="0" y2="0"><stop offset="0.0000" stop-color="#00ff87"/><stop offset="0.2158" stop-color="#01ffa1"/><stop offset="0.2455" stop-color="#3bffa7"/><stop offset="0.2723" stop-color="#76ffac"/><stop offset="0.2976" stop-color="#b4ffb2"/><stop offset="0.3244" stop-color="#fffeb9"/><stop offset="0.3393" stop-color="#ffd7a0"/><stop offset="0.3571" stop-color="#ffb389"/><stop offset="0.3765" stop-color="#ff9476"/><stop offset="0.3988" stop-color="#ff7965"/><stop offset="0.4539" stop-color="#ff4c49"/><stop offset="0.5238" stop-color="#ff2a33"/><stop offset="0.6027" stop-color="#ff1324"/><stop offset="0.7024" stop-color="#ff0018"/><stop offset="1.0000" stop-color="#ff0007"/></linearGradient><linearGradient id="cg48" gradientUnits="userSpaceOnUse" x1="1238" x2="1909" y1="0" y2="0"><stop offset="0.0000" stop-color="#00ff8b"/><stop offset="0.2146" stop-color="#00ffa7"/><stop offset="0.2444" stop-color="#3affad"/><stop offset="0.2712" stop-color="#75ffb3"/><stop offset="0.2966" stop-color="#b5ffb9"/><stop offset="0.3234" stop-color="#fffdc0"/><stop offset="0.3383" stop-color="#ffd6a6"/><stop offset="0.3562" stop-color="#ffb28e"/><stop offset="0.3756" stop-color="#ff947a"/><stop offset="0.3979" stop-color="#ff7969"/><stop offset="0.4531" stop-color="#ff4c4b"/><stop offset="0.5231" stop-color="#ff2a35"/><stop offset="0.6006" stop-color="#ff1326"/><stop offset="0.6990" stop-color="#ff001a"/><stop offset="1.0000" stop-color="#ff0007"/></linearGradient><linearGradient id="cg49" gradientUnits="userSpaceOnUse" x1="1238" x2="1909" y1="0" y2="0"><stop offset="0.0000" stop-color="#00ff8f"/><stop offset="0.2146" stop-color="#00ffac"/><stop offset="0.2414" stop-color="#34ffb2"/><stop offset="0.2697" stop-color="#72ffb9"/><stop offset="0.2936" stop-color="#adffbf"/><stop offset="0.3234" stop-color="#fffdc6"/><stop offset="0.3383" stop-color="#ffd5ac"/><stop offset="0.3562" stop-color="#ffb193"/><stop offset="0.3756" stop-color="#ff937f"/><stop offset="0.3979" stop-color="#ff786d"/><stop offset="0.4531" stop-color="#ff4b4e"/><stop offset="0.5231" stop-color="#ff2937"/><stop offset="0.6006" stop-color="#ff1228"/><stop offset="0.6960" stop-color="#ff001c"/><stop offset="1.0000" stop-color="#ff0008"/></linearGradient><linearGradient id="cg50" gradientUnits="userSpaceOnUse" x1="1239" x2="1909" y1="0" y2="0"><stop offset="0.0000" stop-color="#00ff93"/><stop offset="0.2134" stop-color="#00ffb2"/><stop offset="0.2388" stop-color="#30ffb8"/><stop offset="0.2672" stop-color="#6effbf"/><stop offset="0.2910" stop-color="#a9ffc6"/><stop offset="0.3224" stop-color="#fffccd"/><stop offset="0.3373" stop-color="#ffd4b2"/><stop offset="0.3552" stop-color="#ffb098"/><stop offset="0.3746" stop-color="#ff9283"/><stop offset="0.3970" stop-color="#ff7770"/><stop offset="0.4522" stop-color="#ff4a51"/><stop offset="0.5224" stop-color="#ff293a"/><stop offset="0.5985" stop-color="#ff122a"/><stop offset="0.6925" stop-color="#ff001d"/><stop offset="1.0000" stop-color="#ff0009"/></linearGradient><linearGradient id="cg51" gradientUnits="userSpaceOnUse" x1="1239" x2="1909" y1="0" y2="0"><stop offset="0.0000" stop-color="#00ff97"/><stop offset="0.2149" stop-color="#01ffb8"/><stop offset="0.2687" stop-color="#71ffc6"/><stop offset="0.2955" stop-color="#b5ffce"/><stop offset="0.3209" stop-color="#feffd7"/><stop offset="0.3224" stop-color="#fffbd4"/><stop offset="0.3373" stop-color="#ffd4b8"/><stop offset="0.3552" stop-color="#ffaf9d"/><stop offset="0.3746" stop-color="#ff9188"/><stop offset="0.3970" stop-color="#ff7674"/><stop offset="0.4522" stop-color="#ff4a54"/><stop offset="0.5224" stop-color="#ff283c"/><stop offset="0.5970" stop-color="#ff122c"/><stop offset="0.6896" stop-color="#ff001f"/><stop offset="1.0000" stop-color="#ff000a"/></linearGradient><linearGradient id="cg52" gradientUnits="userSpaceOnUse" x1="1240" x2="1909" y1="0" y2="0"><stop offset="0.0000" stop-color="#00ff9b"/><stop offset="0.2138" stop-color="#00ffbe"/><stop offset="0.2422" stop-color="#38ffc5"/><stop offset="0.2706" stop-color="#78ffcd"/><stop offset="0.2960" stop-color="#baffd6"/><stop offset="0.3199" stop-color="#ffffde"/><stop offset="0.3348" stop-color="#ffd6c0"/><stop offset="0.3513" stop-color="#ffb4a7"/><stop offset="0.3707" stop-color="#ff948f"/><stop offset="0.3931" stop-color="#ff797b"/><stop offset="0.4469" stop-color="#ff4c59"/><stop offset="0.5187" stop-color="#ff293f"/><stop offset="0.5949" stop-color="#ff122e"/><stop offset="0.6876" stop-color="#ff0021"/><stop offset="1.0000" stop-color="#ff000b"/></linearGradient><linearGradient id="cg53" gradientUnits="userSpaceOnUse" x1="1240" x2="1909" y1="0" y2="0"><stop offset="0.0000" stop-color="#00ff9f"/><stop offset="0.1166" stop-color="#00ffaf"/><stop offset="0.2138" stop-color="#00ffc4"/><stop offset="0.2407" stop-color="#35ffcb"/><stop offset="0.2691" stop-color="#75ffd4"/><stop offset="0.2945" stop-color="#b6ffdc"/><stop offset="0.3199" stop-color="#fffee6"/><stop offset="0.3348" stop-color="#ffd5c6"/><stop offset="0.3513" stop-color="#ffb3ac"/><stop offset="0.3707" stop-color="#ff9494"/><stop offset="0.3931" stop-color="#ff787e"/><stop offset="0.4469" stop-color="#ff4b5c"/><stop offset="0.5187" stop-color="#ff2841"/><stop offset="0.5934" stop-color="#ff1230"/><stop offset="0.6846" stop-color="#ff0022"/><stop offset="1.0000" stop-color="#ff000c"/></linearGradient><linearGradient id="cg54" gradientUnits="userSpaceOnUse" x1="1241" x2="1908" y1="0" y2="0"><stop offset="0.0000" stop-color="#00ffa3"/><stop offset="0.1169" stop-color="#00ffb5"/><stop offset="0.2144" stop-color="#01ffca"/><stop offset="0.2429" stop-color="#3affd2"/><stop offset="0.2684" stop-color="#74ffda"/><stop offset="0.2924" stop-color="#b2ffe3"/><stop offset="0.3193" stop-color="#fffded"/><stop offset="0.3343" stop-color="#ffd5cc"/><stop offset="0.3508" stop-color="#ffb2b1"/><stop offset="0.3703" stop-color="#ff9398"/><stop offset="0.3928" stop-color="#ff7782"/><stop offset="0.4468" stop-color="#ff4a5f"/><stop offset="0.5187" stop-color="#ff2743"/><stop offset="0.5922" stop-color="#ff1232"/><stop offset="0.6822" stop-color="#ff0024"/><stop offset="1.0000" stop-color="#ff000d"/></linearGradient><linearGradient id="cg55" gradientUnits="userSpaceOnUse" x1="1241" x2="1906" y1="0" y2="0"><stop offset="0.0000" stop-color="#00ffa7"/><stop offset="0.1173" stop-color="#00ffb9"/><stop offset="0.2150" stop-color="#00ffd0"/><stop offset="0.2436" stop-color="#3affd9"/><stop offset="0.2692" stop-color="#74ffe1"/><stop offset="0.2917" stop-color="#aeffea"/><stop offset="0.3203" stop-color="#fffcf4"/><stop offset="0.3353" stop-color="#ffd4d3"/><stop offset="0.3519" stop-color="#ffb1b7"/><stop offset="0.3714" stop-color="#ff929d"/><stop offset="0.3940" stop-color="#ff7686"/><stop offset="0.4481" stop-color="#ff4a62"/><stop offset="0.5188" stop-color="#ff2746"/><stop offset="0.5910" stop-color="#ff1234"/><stop offset="0.6812" stop-color="#ff0026"/><stop offset="1.0000" stop-color="#ff000d"/></linearGradient><linearGradient id="cg56" gradientUnits="userSpaceOnUse" x1="1242" x2="1904" y1="0" y2="0"><stop offset="0.0000" stop-color="#00ffab"/><stop offset="0.1178" stop-color="#00ffbf"/><stop offset="0.2145" stop-color="#00ffd6"/><stop offset="0.2402" stop-color="#33ffde"/><stop offset="0.2674" stop-color="#70ffe8"/><stop offset="0.3202" stop-color="#fffcfb"/><stop offset="0.3353" stop-color="#ffd3d9"/><stop offset="0.3520" stop-color="#ffb0bc"/><stop offset="0.3716" stop-color="#ff91a2"/><stop offset="0.3943" stop-color="#ff758a"/><stop offset="0.4486" stop-color="#ff4965"/><stop offset="0.5196" stop-color="#ff2748"/><stop offset="0.5921" stop-color="#ff1136"/><stop offset="0.6813" stop-color="#ff0028"/><stop offset="1.0000" stop-color="#ff000e"/></linearGradient><linearGradient id="cg57" gradientUnits="userSpaceOnUse" x1="1242" x2="1902" y1="0" y2="0"><stop offset="0.0000" stop-color="#00ffaf"/><stop offset="0.1182" stop-color="#00ffc4"/><stop offset="0.2152" stop-color="#00ffdc"/><stop offset="0.2364" stop-color="#29ffe3"/><stop offset="0.2636" stop-color="#65ffed"/><stop offset="0.3045" stop-color="#d1ffff"/><stop offset="0.3227" stop-color="#fff6fe"/><stop offset="0.3379" stop-color="#ffcedc"/><stop offset="0.3545" stop-color="#ffadbf"/><stop offset="0.3742" stop-color="#ff8ea4"/><stop offset="0.3970" stop-color="#ff738d"/><stop offset="0.4515" stop-color="#ff4767"/><stop offset="0.5227" stop-color="#ff264a"/><stop offset="0.5939" stop-color="#ff1138"/><stop offset="0.6803" stop-color="#ff0029"/><stop offset="1.0000" stop-color="#ff000f"/></linearGradient><linearGradient id="cg58" gradientUnits="userSpaceOnUse" x1="1243" x2="1900" y1="0" y2="0"><stop offset="0.0000" stop-color="#00ffb3"/><stop offset="0.1187" stop-color="#00ffc9"/><stop offset="0.2161" stop-color="#00ffe3"/><stop offset="0.2527" stop-color="#4cfff0"/><stop offset="0.2877" stop-color="#a2ffff"/><stop offset="0.3257" stop-color="#ffedfe"/><stop offset="0.3409" stop-color="#ffc7dc"/><stop offset="0.3592" stop-color="#ffa4bd"/><stop offset="0.3790" stop-color="#ff87a4"/><stop offset="0.4018" stop-color="#ff6e8d"/><stop offset="0.4566" stop-color="#ff4468"/><stop offset="0.5282" stop-color="#ff234b"/><stop offset="0.5967" stop-color="#ff1039"/><stop offset="0.6788" stop-color="#ff002b"/><stop offset="0.8189" stop-color="#ff001c"/><stop offset="1.0000" stop-color="#ff0010"/></linearGradient><linearGradient id="cg59" gradientUnits="userSpaceOnUse" x1="1244" x2="1899" y1="0" y2="0"><stop offset="0.0000" stop-color="#00ffb8"/><stop offset="0.1176" stop-color="#00ffce"/><stop offset="0.2153" stop-color="#00ffe9"/><stop offset="0.2427" stop-color="#38fff3"/><stop offset="0.2718" stop-color="#7bffff"/><stop offset="0.3282" stop-color="#ffe3fd"/><stop offset="0.3435" stop-color="#ffbfdc"/><stop offset="0.3618" stop-color="#ff9ebe"/><stop offset="0.4046" stop-color="#ff6a8e"/><stop offset="0.4611" stop-color="#ff4168"/><stop offset="0.5328" stop-color="#ff214c"/><stop offset="0.6763" stop-color="#ff002d"/><stop offset="0.8168" stop-color="#ff001d"/><stop offset="1.0000" stop-color="#ff0011"/></linearGradient><linearGradient id="cg60" gradientUnits="userSpaceOnUse" x1="1244" x2="1897" y1="0" y2="0"><stop offset="0.0000" stop-color="#00ffbc"/><stop offset="0.1179" stop-color="#00ffd3"/><stop offset="0.2159" stop-color="#00fff0"/><stop offset="0.2557" stop-color="#52ffff"/><stop offset="0.3323" stop-color="#ffdafd"/><stop offset="0.3476" stop-color="#ffb8dd"/><stop offset="0.3660" stop-color="#ff99bf"/><stop offset="0.4089" stop-color="#ff668f"/><stop offset="0.4655" stop-color="#ff3e6a"/><stop offset="0.5375" stop-color="#ff204d"/><stop offset="0.6753" stop-color="#ff002f"/><stop offset="0.8162" stop-color="#ff001f"/><stop offset="1.0000" stop-color="#ff0012"/></linearGradient><linearGradient id="cg61" gradientUnits="userSpaceOnUse" x1="1245" x2="1895" y1="0" y2="0"><stop offset="0.0000" stop-color="#00ffc0"/><stop offset="0.1185" stop-color="#00ffd9"/><stop offset="0.2169" stop-color="#01fff7"/><stop offset="0.2385" stop-color="#2cffff"/><stop offset="0.3354" stop-color="#ffd2fc"/><stop offset="0.3508" stop-color="#ffb2dd"/><stop offset="0.3692" stop-color="#ff93bf"/><stop offset="0.4138" stop-color="#ff618f"/><stop offset="0.4708" stop-color="#ff3b6a"/><stop offset="0.5431" stop-color="#ff1e4e"/><stop offset="0.6754" stop-color="#ff0031"/><stop offset="0.8154" stop-color="#ff0020"/><stop offset="1.0000" stop-color="#ff0013"/></linearGradient><linearGradient id="cg62" gradientUnits="userSpaceOnUse" x1="1245" x2="1893" y1="0" y2="0"><stop offset="0.0000" stop-color="#00ffc5"/><stop offset="0.1188" stop-color="#00ffde"/><stop offset="0.2176" stop-color="#00fffe"/><stop offset="0.2793" stop-color="#7de7ff"/><stop offset="0.3380" stop-color="#ffcdff"/><stop offset="0.3534" stop-color="#ffaee0"/><stop offset="0.3719" stop-color="#ff90c2"/><stop offset="0.4167" stop-color="#ff5f92"/><stop offset="0.4738" stop-color="#ff3a6c"/><stop offset="0.5463" stop-color="#ff1d4f"/><stop offset="0.6744" stop-color="#ff0033"/><stop offset="0.8148" stop-color="#ff0022"/><stop offset="1.0000" stop-color="#ff0014"/></linearGradient><linearGradient id="cg63" gradientUnits="userSpaceOnUse" x1="1246" x2="1892" y1="0" y2="0"><stop offset="0.0000" stop-color="#00ffc9"/><stop offset="0.1099" stop-color="#00ffe1"/><stop offset="0.2028" stop-color="#00ffff"/><stop offset="0.2167" stop-color="#00faff"/><stop offset="0.2771" stop-color="#77e2ff"/><stop offset="0.3406" stop-color="#ffc6ff"/><stop offset="0.3560" stop-color="#ffa7e0"/><stop offset="0.3746" stop-color="#ff8bc3"/><stop offset="0.4195" stop-color="#ff5c93"/><stop offset="0.4768" stop-color="#ff376d"/><stop offset="0.5511" stop-color="#ff1b50"/><stop offset="0.6718" stop-color="#ff0035"/><stop offset="0.8142" stop-color="#ff0023"/><stop offset="1.0000" stop-color="#ff0015"/></linearGradient><linearGradient id="cg64" gradientUnits="userSpaceOnUse" x1="1247" x2="1890" y1="0" y2="0"><stop offset="0.0000" stop-color="#00ffce"/><stop offset="0.0995" stop-color="#00ffe4"/><stop offset="0.1851" stop-color="#00ffff"/><stop offset="0.2177" stop-color="#01f3ff"/><stop offset="0.2799" stop-color="#7adaff"/><stop offset="0.3437" stop-color="#ffbefe"/><stop offset="0.3608" stop-color="#ff9fdd"/><stop offset="0.3795" stop-color="#ff84c1"/><stop offset="0.4246" stop-color="#ff5792"/><stop offset="0.4821" stop-color="#ff346e"/><stop offset="0.5568" stop-color="#ff1951"/><stop offset="0.6703" stop-color="#ff0037"/><stop offset="0.8134" stop-color="#ff0024"/><stop offset="1.0000" stop-color="#ff0016"/></linearGradient><linearGradient id="cg65" gradientUnits="userSpaceOnUse" x1="1247" x2="1888" y1="0" y2="0"><stop offset="0.0000" stop-color="#00ffd2"/><stop offset="0.1685" stop-color="#00ffff"/><stop offset="0.2184" stop-color="#00edff"/><stop offset="0.2808" stop-color="#76d4ff"/><stop offset="0.3479" stop-color="#ffb7fe"/><stop offset="0.3651" stop-color="#ff99dd"/><stop offset="0.3838" stop-color="#ff7fc2"/><stop offset="0.4290" stop-color="#ff5493"/><stop offset="0.4883" stop-color="#ff316e"/><stop offset="0.5632" stop-color="#ff1751"/><stop offset="0.6708" stop-color="#ff0039"/><stop offset="0.8128" stop-color="#ff0026"/><stop offset="1.0000" stop-color="#ff0018"/></linearGradient><linearGradient id="cg66" gradientUnits="userSpaceOnUse" x1="1248" x2="1886" y1="0" y2="0"><stop offset="0.0000" stop-color="#00ffd7"/><stop offset="0.1505" stop-color="#00ffff"/><stop offset="0.2179" stop-color="#00e7ff"/><stop offset="0.2790" stop-color="#70cfff"/><stop offset="0.3511" stop-color="#ffb0fd"/><stop offset="0.3683" stop-color="#ff93de"/><stop offset="0.3871" stop-color="#ff7bc2"/><stop offset="0.4342" stop-color="#ff5093"/><stop offset="0.4922" stop-color="#ff2f6f"/><stop offset="0.5674" stop-color="#ff1553"/><stop offset="0.6693" stop-color="#ff003b"/><stop offset="0.8119" stop-color="#ff0027"/><stop offset="1.0000" stop-color="#ff0019"/></linearGradient><linearGradient id="cg67" gradientUnits="userSpaceOnUse" x1="1249" x2="1884" y1="0" y2="0"><stop offset="0.0000" stop-color="#00ffdc"/><stop offset="0.1323" stop-color="#00ffff"/><stop offset="0.2173" stop-color="#00e1ff"/><stop offset="0.2756" stop-color="#67cbff"/><stop offset="0.3543" stop-color="#ffa9fd"/><stop offset="0.3874" stop-color="#ff7ac7"/><stop offset="0.4283" stop-color="#ff549c"/><stop offset="0.4803" stop-color="#ff3579"/><stop offset="0.5449" stop-color="#ff1c5c"/><stop offset="0.6677" stop-color="#ff003d"/><stop offset="0.8110" stop-color="#ff0029"/><stop offset="1.0000" stop-color="#ff001a"/></linearGradient><linearGradient id="cg68" gradientUnits="userSpaceOnUse" x1="1249" x2="1883" y1="0" y2="0"><stop offset="0.0000" stop-color="#00ffe0"/><stop offset="0.1151" stop-color="#00ffff"/><stop offset="0.2192" stop-color="#01dbff"/><stop offset="0.2886" stop-color="#7cc1ff"/><stop offset="0.3565" stop-color="#ffa5ff"/><stop offset="0.3912" stop-color="#ff75c7"/><stop offset="0.4322" stop-color="#ff519d"/><stop offset="0.4842" stop-color="#ff327a"/><stop offset="0.5473" stop-color="#ff1b5e"/><stop offset="0.6656" stop-color="#ff003f"/><stop offset="0.8091" stop-color="#ff002a"/><stop offset="1.0000" stop-color="#ff001b"/></linearGradient><linearGradient id="cg69" gradientUnits="userSpaceOnUse" x1="1250" x2="1881" y1="0" y2="0"><stop offset="0.0000" stop-color="#00ffe5"/><stop offset="0.0967" stop-color="#00ffff"/><stop offset="0.2187" stop-color="#00d6ff"/><stop offset="0.2900" stop-color="#7cbcff"/><stop offset="0.3597" stop-color="#ff9fff"/><stop offset="0.3930" stop-color="#ff73ca"/><stop offset="0.4342" stop-color="#ff4f9f"/><stop offset="0.4865" stop-color="#ff317c"/><stop offset="0.5499" stop-color="#ff1960"/><stop offset="0.6640" stop-color="#ff0041"/><stop offset="0.8082" stop-color="#ff002c"/><stop offset="1.0000" stop-color="#ff001c"/></linearGradient><linearGradient id="cg70" gradientUnits="userSpaceOnUse" x1="1251" x2="1879" y1="0" y2="0"><stop offset="0.0000" stop-color="#00ffea"/><stop offset="0.0780" stop-color="#00ffff"/><stop offset="0.2182" stop-color="#00d1ff"/><stop offset="0.2866" stop-color="#73b8ff"/><stop offset="0.3631" stop-color="#ff99fe"/><stop offset="0.3965" stop-color="#ff6eca"/><stop offset="0.4395" stop-color="#ff4b9f"/><stop offset="0.4904" stop-color="#ff2f7d"/><stop offset="0.5541" stop-color="#ff1861"/><stop offset="0.6640" stop-color="#ff0043"/><stop offset="0.8089" stop-color="#ff002d"/><stop offset="1.0000" stop-color="#ff001d"/></linearGradient><linearGradient id="cg71" gradientUnits="userSpaceOnUse" x1="1251" x2="1877" y1="0" y2="0"><stop offset="0.0000" stop-color="#00ffef"/><stop offset="0.0607" stop-color="#00ffff"/><stop offset="0.2204" stop-color="#01ccff"/><stop offset="0.2923" stop-color="#78b2ff"/><stop offset="0.3674" stop-color="#ff93fe"/><stop offset="0.4010" stop-color="#ff6acb"/><stop offset="0.4441" stop-color="#ff489f"/><stop offset="0.4952" stop-color="#ff2d7e"/><stop offset="0.5591" stop-color="#ff1662"/><stop offset="0.6629" stop-color="#ff0046"/><stop offset="0.8083" stop-color="#ff002f"/><stop offset="1.0000" stop-color="#ff001e"/></linearGradient><linearGradient id="cg72" gradientUnits="userSpaceOnUse" x1="1252" x2="1875" y1="0" y2="0"><stop offset="0.0000" stop-color="#00fff4"/><stop offset="0.0433" stop-color="#00ffff"/><stop offset="0.2199" stop-color="#00c7ff"/><stop offset="0.2921" stop-color="#75adff"/><stop offset="0.3708" stop-color="#ff8efd"/><stop offset="0.4061" stop-color="#ff65c9"/><stop offset="0.4478" stop-color="#ff45a0"/><stop offset="0.4992" stop-color="#ff2b7f"/><stop offset="0.5634" stop-color="#ff1563"/><stop offset="0.6613" stop-color="#ff0048"/><stop offset="0.8074" stop-color="#ff0031"/><stop offset="1.0000" stop-color="#ff001f"/></linearGradient><linearGradient id="cg73" gradientUnits="userSpaceOnUse" x1="1253" x2="1874" y1="0" y2="0"><stop offset="0.0000" stop-color="#00fff9"/><stop offset="0.0242" stop-color="#00ffff"/><stop offset="0.2190" stop-color="#00c2ff"/><stop offset="0.2882" stop-color="#6daaff"/><stop offset="0.3736" stop-color="#ff88fd"/><stop offset="0.4090" stop-color="#ff61ca"/><stop offset="0.4509" stop-color="#ff42a1"/><stop offset="0.5024" stop-color="#ff2980"/><stop offset="0.5668" stop-color="#ff1364"/><stop offset="0.6586" stop-color="#ff004a"/><stop offset="0.8052" stop-color="#ff0032"/><stop offset="1.0000" stop-color="#ff0020"/></linearGradient><linearGradient id="cg74" gradientUnits="userSpaceOnUse" x1="1253" x2="1872" y1="0" y2="0"><stop offset="0.0000" stop-color="#00fffe"/><stop offset="0.2213" stop-color="#01bdff"/><stop offset="0.2924" stop-color="#70a5ff"/><stop offset="0.3780" stop-color="#ff83fd"/><stop offset="0.4136" stop-color="#ff5dca"/><stop offset="0.4556" stop-color="#ff3fa2"/><stop offset="0.5073" stop-color="#ff2781"/><stop offset="0.5703" stop-color="#ff1265"/><stop offset="0.6575" stop-color="#ff004d"/><stop offset="0.8045" stop-color="#ff0034"/><stop offset="1.0000" stop-color="#ff0021"/></linearGradient><linearGradient id="cg75" gradientUnits="userSpaceOnUse" x1="1254" x2="1870" y1="0" y2="0"><stop offset="0.0000" stop-color="#00fbff"/><stop offset="0.2208" stop-color="#00b9ff"/><stop offset="0.3019" stop-color="#7d9dff"/><stop offset="0.3799" stop-color="#ff80ff"/><stop offset="0.4156" stop-color="#ff5bcc"/><stop offset="0.4578" stop-color="#ff3ea4"/><stop offset="0.5097" stop-color="#ff2582"/><stop offset="0.5731" stop-color="#ff1167"/><stop offset="0.6575" stop-color="#ff004f"/><stop offset="0.8036" stop-color="#ff0036"/><stop offset="1.0000" stop-color="#ff0022"/></linearGradient><linearGradient id="cg76" gradientUnits="userSpaceOnUse" x1="1255" x2="1868" y1="0" y2="0"><stop offset="0.0000" stop-color="#00f6ff"/><stop offset="0.2202" stop-color="#00b5ff"/><stop offset="0.3002" stop-color="#789aff"/><stop offset="0.3834" stop-color="#ff7bff"/><stop offset="0.4192" stop-color="#ff57cd"/><stop offset="0.4617" stop-color="#ff3ba5"/><stop offset="0.5139" stop-color="#ff2383"/><stop offset="0.5775" stop-color="#ff1068"/><stop offset="0.6558" stop-color="#ff0051"/><stop offset="0.7488" stop-color="#ff003f"/><stop offset="1.0000" stop-color="#ff0024"/></linearGradient><linearGradient id="cg77" gradientUnits="userSpaceOnUse" x1="1255" x2="1867" y1="0" y2="0"><stop offset="0.0000" stop-color="#00f2ff"/><stop offset="0.2206" stop-color="#00b1ff"/><stop offset="0.2974" stop-color="#7097ff"/><stop offset="0.3873" stop-color="#ff76fe"/><stop offset="0.4232" stop-color="#ff54cd"/><stop offset="0.4657" stop-color="#ff39a5"/><stop offset="0.5180" stop-color="#ff2284"/><stop offset="0.5801" stop-color="#ff0f6a"/><stop offset="0.6536" stop-color="#ff0054"/><stop offset="0.7500" stop-color="#ff0041"/><stop offset="1.0000" stop-color="#ff0025"/></linearGradient><linearGradient id="cg78" gradientUnits="userSpaceOnUse" x1="1256" x2="1865" y1="0" y2="0"><stop offset="0.0000" stop-color="#00edff"/><stop offset="0.2217" stop-color="#01adff"/><stop offset="0.3021" stop-color="#7592ff"/><stop offset="0.3908" stop-color="#ff71fe"/><stop offset="0.4269" stop-color="#ff51cd"/><stop offset="0.4696" stop-color="#ff36a6"/><stop offset="0.5222" stop-color="#ff2085"/><stop offset="0.5846" stop-color="#ff0e6b"/><stop offset="0.6519" stop-color="#ff0056"/><stop offset="0.7537" stop-color="#ff0042"/><stop offset="1.0000" stop-color="#ff0026"/></linearGradient><linearGradient id="cg79" gradientUnits="userSpaceOnUse" x1="1257" x2="1863" y1="0" y2="0"><stop offset="0.0000" stop-color="#00e8ff"/><stop offset="0.2211" stop-color="#00a9ff"/><stop offset="0.3020" stop-color="#728eff"/><stop offset="0.3944" stop-color="#ff6dfd"/><stop offset="0.4307" stop-color="#ff4dce"/><stop offset="0.4736" stop-color="#ff34a7"/><stop offset="0.5264" stop-color="#ff1e86"/><stop offset="0.5891" stop-color="#ff0c6b"/><stop offset="0.6502" stop-color="#ff0059"/><stop offset="0.7558" stop-color="#ff0043"/><stop offset="1.0000" stop-color="#ff0027"/></linearGradient><linearGradient id="cg80" gradientUnits="userSpaceOnUse" x1="1258" x2="1861" y1="0" y2="0"><stop offset="0.0000" stop-color="#00e3ff"/><stop offset="0.2206" stop-color="#00a5ff"/><stop offset="0.2985" stop-color="#6b8cff"/><stop offset="0.3980" stop-color="#ff69fd"/><stop offset="0.4345" stop-color="#ff4ace"/><stop offset="0.4776" stop-color="#ff31a8"/><stop offset="0.5290" stop-color="#ff1d88"/><stop offset="0.5920" stop-color="#ff0b6d"/><stop offset="0.6501" stop-color="#ff005b"/><stop offset="0.7579" stop-color="#ff0044"/><stop offset="1.0000" stop-color="#ff0028"/></linearGradient><linearGradient id="cg81" gradientUnits="userSpaceOnUse" x1="1258" x2="1859" y1="0" y2="0"><stop offset="0.0000" stop-color="#00dfff"/><stop offset="0.2230" stop-color="#01a1ff"/><stop offset="0.3145" stop-color="#7e84ff"/><stop offset="0.4010" stop-color="#ff66ff"/><stop offset="0.4376" stop-color="#ff48d0"/><stop offset="0.4809" stop-color="#ff30a9"/><stop offset="0.5324" stop-color="#ff1c8a"/><stop offset="0.5957" stop-color="#ff0a6e"/><stop offset="0.6489" stop-color="#ff005e"/><stop offset="0.7604" stop-color="#ff0046"/><stop offset="1.0000" stop-color="#ff0029"/></linearGradient><linearGradient id="cg82" gradientUnits="userSpaceOnUse" x1="1259" x2="1858" y1="0" y2="0"><stop offset="0.0000" stop-color="#00dbff"/><stop offset="0.2220" stop-color="#009eff"/><stop offset="0.3139" stop-color="#7c81ff"/><stop offset="0.4040" stop-color="#ff62ff"/><stop offset="0.4407" stop-color="#ff45d0"/><stop offset="0.4841" stop-color="#ff2daa"/><stop offset="0.5359" stop-color="#ff1a8a"/><stop offset="0.5977" stop-color="#ff0970"/><stop offset="0.6461" stop-color="#ff0061"/><stop offset="0.7629" stop-color="#ff0047"/><stop offset="1.0000" stop-color="#ff002b"/></linearGradient><linearGradient id="cg83" gradientUnits="userSpaceOnUse" x1="1260" x2="1856" y1="0" y2="0"><stop offset="0.0000" stop-color="#00d7ff"/><stop offset="0.2215" stop-color="#009aff"/><stop offset="0.3121" stop-color="#777eff"/><stop offset="0.4077" stop-color="#ff5efe"/><stop offset="0.4446" stop-color="#ff42d0"/><stop offset="0.4883" stop-color="#ff2bab"/><stop offset="0.5403" stop-color="#ff188b"/><stop offset="0.6023" stop-color="#ff0871"/><stop offset="0.6443" stop-color="#ff0063"/><stop offset="0.7668" stop-color="#ff0048"/><stop offset="1.0000" stop-color="#ff002c"/></linearGradient><linearGradient id="cg84" gradientUnits="userSpaceOnUse" x1="1261" x2="1854" y1="0" y2="0"><stop offset="0.0000" stop-color="#00d3ff"/><stop offset="0.2226" stop-color="#0197ff"/><stop offset="0.3137" stop-color="#777bff"/><stop offset="0.4115" stop-color="#ff5afe"/><stop offset="0.4469" stop-color="#ff40d2"/><stop offset="0.4907" stop-color="#ff2aad"/><stop offset="0.5430" stop-color="#ff178d"/><stop offset="0.6054" stop-color="#ff0772"/><stop offset="0.6442" stop-color="#ff0066"/><stop offset="0.7690" stop-color="#ff0049"/><stop offset="1.0000" stop-color="#ff002d"/></linearGradient><linearGradient id="cg85" gradientUnits="userSpaceOnUse" x1="1261" x2="1852" y1="0" y2="0"><stop offset="0.0000" stop-color="#00cfff"/><stop offset="0.2234" stop-color="#0094ff"/><stop offset="0.3147" stop-color="#7478ff"/><stop offset="0.4162" stop-color="#ff56fe"/><stop offset="0.4535" stop-color="#ff3cd1"/><stop offset="0.4975" stop-color="#ff27ac"/><stop offset="0.5499" stop-color="#ff158d"/><stop offset="0.6108" stop-color="#ff0673"/><stop offset="0.6430" stop-color="#ff0069"/><stop offset="0.7716" stop-color="#ff004b"/><stop offset="1.0000" stop-color="#ff002e"/></linearGradient><linearGradient id="cg86" gradientUnits="userSpaceOnUse" x1="1262" x2="1851" y1="0" y2="0"><stop offset="0.0000" stop-color="#00cbff"/><stop offset="0.2224" stop-color="#0090ff"/><stop offset="0.3141" stop-color="#7275ff"/><stop offset="0.4194" stop-color="#ff52fd"/><stop offset="0.4567" stop-color="#ff39d1"/><stop offset="0.4992" stop-color="#ff25ae"/><stop offset="0.5518" stop-color="#ff148e"/><stop offset="0.6129" stop-color="#ff0575"/><stop offset="0.6401" stop-color="#ff006c"/><stop offset="0.7742" stop-color="#ff004c"/><stop offset="1.0000" stop-color="#ff002f"/></linearGradient><linearGradient id="cg87" gradientUnits="userSpaceOnUse" x1="1263" x2="1849" y1="0" y2="0"><stop offset="0.0000" stop-color="#00c7ff"/><stop offset="0.2218" stop-color="#008dff"/><stop offset="0.3191" stop-color="#7671ff"/><stop offset="0.4215" stop-color="#ff50ff"/><stop offset="0.4590" stop-color="#ff38d3"/><stop offset="0.5034" stop-color="#ff23ae"/><stop offset="0.5546" stop-color="#ff1290"/><stop offset="0.6160" stop-color="#ff0476"/><stop offset="0.6382" stop-color="#ff006f"/><stop offset="0.7765" stop-color="#ff004d"/><stop offset="1.0000" stop-color="#ff0031"/></linearGradient><linearGradient id="cg88" gradientUnits="userSpaceOnUse" x1="1264" x2="1847" y1="0" y2="0"><stop offset="0.0000" stop-color="#00c3ff"/><stop offset="0.2230" stop-color="#018aff"/><stop offset="0.3259" stop-color="#7d6cff"/><stop offset="0.4254" stop-color="#ff4dff"/><stop offset="0.4631" stop-color="#ff35d3"/><stop offset="0.5060" stop-color="#ff22b0"/><stop offset="0.5575" stop-color="#ff1192"/><stop offset="0.6192" stop-color="#ff0377"/><stop offset="0.6930" stop-color="#ff0061"/><stop offset="0.7787" stop-color="#ff004f"/><stop offset="1.0000" stop-color="#ff0032"/></linearGradient><linearGradient id="cg89" gradientUnits="userSpaceOnUse" x1="1264" x2="1845" y1="0" y2="0"><stop offset="0.0000" stop-color="#00c0ff"/><stop offset="0.2238" stop-color="#0087ff"/><stop offset="0.3270" stop-color="#7a6aff"/><stop offset="0.4303" stop-color="#ff49fe"/><stop offset="0.4682" stop-color="#ff32d4"/><stop offset="0.5112" stop-color="#ff20b1"/><stop offset="0.5628" stop-color="#ff1092"/><stop offset="0.6248" stop-color="#ff0278"/><stop offset="0.7814" stop-color="#ff0050"/><stop offset="1.0000" stop-color="#ff0033"/></linearGradient><linearGradient id="cg90" gradientUnits="userSpaceOnUse" x1="1265" x2="1843" y1="0" y2="0"><stop offset="0.0000" stop-color="#00bcff"/><stop offset="0.2232" stop-color="#0085ff"/><stop offset="0.3235" stop-color="#7468ff"/><stop offset="0.4343" stop-color="#ff46fe"/><stop offset="0.4723" stop-color="#ff30d4"/><stop offset="0.5156" stop-color="#ff1eb1"/><stop offset="0.5675" stop-color="#ff0e93"/><stop offset="0.6280" stop-color="#ff017a"/><stop offset="0.7837" stop-color="#ff0052"/><stop offset="1.0000" stop-color="#ff0035"/></linearGradient><linearGradient id="cg91" gradientUnits="userSpaceOnUse" x1="1266" x2="1842" y1="0" y2="0"><stop offset="0.0000" stop-color="#00b9ff"/><stop offset="0.2240" stop-color="#0181ff"/><stop offset="0.3264" stop-color="#7665ff"/><stop offset="0.4375" stop-color="#ff43fe"/><stop offset="0.4757" stop-color="#ff2dd4"/><stop offset="0.5191" stop-color="#ff1cb2"/><stop offset="0.5712" stop-color="#ff0d94"/><stop offset="0.6319" stop-color="#ff007a"/><stop offset="0.7865" stop-color="#ff0053"/><stop offset="1.0000" stop-color="#ff0036"/></linearGradient><linearGradient id="cg92" gradientUnits="userSpaceOnUse" x1="1267" x2="1840" y1="0" y2="0"><stop offset="0.0000" stop-color="#00b5ff"/><stop offset="0.2234" stop-color="#007fff"/><stop offset="0.3264" stop-color="#7462ff"/><stop offset="0.4415" stop-color="#ff3ffd"/><stop offset="0.4799" stop-color="#ff2bd4"/><stop offset="0.5236" stop-color="#ff1ab2"/><stop offset="0.5742" stop-color="#ff0c95"/><stop offset="0.6353" stop-color="#ff007c"/><stop offset="0.7888" stop-color="#ff0054"/><stop offset="1.0000" stop-color="#ff0037"/></linearGradient><linearGradient id="cg93" gradientUnits="userSpaceOnUse" x1="1267" x2="1838" y1="0" y2="0"><stop offset="0.0000" stop-color="#00b3ff"/><stop offset="0.2242" stop-color="#007cff"/><stop offset="0.3345" stop-color="#7a5eff"/><stop offset="0.4448" stop-color="#ff3dff"/><stop offset="0.4834" stop-color="#ff29d6"/><stop offset="0.5271" stop-color="#ff19b4"/><stop offset="0.5779" stop-color="#ff0b97"/><stop offset="0.6375" stop-color="#ff007e"/><stop offset="0.7898" stop-color="#ff0056"/><stop offset="1.0000" stop-color="#ff0039"/></linearGradient><linearGradient id="cg94" gradientUnits="userSpaceOnUse" x1="1268" x2="1836" y1="0" y2="0"><stop offset="0.0000" stop-color="#00afff"/><stop offset="0.2254" stop-color="#0179ff"/><stop offset="0.3398" stop-color="#7e5aff"/><stop offset="0.4489" stop-color="#ff3aff"/><stop offset="0.4859" stop-color="#ff28d8"/><stop offset="0.5299" stop-color="#ff17b5"/><stop offset="0.5810" stop-color="#ff0a98"/><stop offset="0.6408" stop-color="#ff007f"/><stop offset="0.7923" stop-color="#ff0057"/><stop offset="1.0000" stop-color="#ff003a"/></linearGradient><linearGradient id="cg95" gradientUnits="userSpaceOnUse" x1="1269" x2="1834" y1="0" y2="0"><stop offset="0.0000" stop-color="#00acff"/><stop offset="0.2248" stop-color="#0077ff"/><stop offset="0.3398" stop-color="#7c58ff"/><stop offset="0.4531" stop-color="#ff38ff"/><stop offset="0.4903" stop-color="#ff26d8"/><stop offset="0.5345" stop-color="#ff16b6"/><stop offset="0.5858" stop-color="#ff0899"/><stop offset="0.6460" stop-color="#ff0080"/><stop offset="0.7965" stop-color="#ff0058"/><stop offset="1.0000" stop-color="#ff003b"/></linearGradient><linearGradient id="cg96" gradientUnits="userSpaceOnUse" x1="1270" x2="1833" y1="0" y2="0"><stop offset="0.0000" stop-color="#00a9ff"/><stop offset="0.2238" stop-color="#0075ff"/><stop offset="0.3375" stop-color="#7757ff"/><stop offset="0.4565" stop-color="#ff35fe"/><stop offset="0.4938" stop-color="#ff23d8"/><stop offset="0.5382" stop-color="#ff14b6"/><stop offset="0.6217" stop-color="#ff008b"/><stop offset="0.6483" stop-color="#ff0081"/><stop offset="0.7975" stop-color="#ff005a"/><stop offset="1.0000" stop-color="#ff003d"/></linearGradient><linearGradient id="cg97" gradientUnits="userSpaceOnUse" x1="1271" x2="1831" y1="0" y2="0"><stop offset="0.0000" stop-color="#00a6ff"/><stop offset="0.2232" stop-color="#0072ff"/><stop offset="0.3339" stop-color="#7256ff"/><stop offset="0.4607" stop-color="#ff32fe"/><stop offset="0.4982" stop-color="#ff21d8"/><stop offset="0.5429" stop-color="#ff12b7"/><stop offset="0.6214" stop-color="#ff008e"/><stop offset="0.6518" stop-color="#ff0083"/><stop offset="0.8000" stop-color="#ff005b"/><stop offset="1.0000" stop-color="#ff003e"/></linearGradient><linearGradient id="cg98" gradientUnits="userSpaceOnUse" x1="1271" x2="1829" y1="0" y2="0"><stop offset="0.0000" stop-color="#00a3ff"/><stop offset="0.2258" stop-color="#0170ff"/><stop offset="0.3405" stop-color="#7552ff"/><stop offset="0.4659" stop-color="#ff2ffe"/><stop offset="0.5036" stop-color="#ff1fd8"/><stop offset="0.5484" stop-color="#ff10b7"/><stop offset="0.6201" stop-color="#ff0092"/><stop offset="0.6577" stop-color="#ff0083"/><stop offset="0.8047" stop-color="#ff005c"/><stop offset="1.0000" stop-color="#ff003f"/></linearGradient><linearGradient id="cg99" gradientUnits="userSpaceOnUse" x1="1272" x2="1827" y1="0" y2="0"><stop offset="0.0000" stop-color="#00a0ff"/><stop offset="0.2252" stop-color="#006dff"/><stop offset="0.3495" stop-color="#7d4eff"/><stop offset="0.4685" stop-color="#ff2dff"/><stop offset="0.5081" stop-color="#ff1dd8"/><stop offset="0.5514" stop-color="#ff0fb9"/><stop offset="0.6180" stop-color="#ff0096"/><stop offset="0.6595" stop-color="#ff0085"/><stop offset="0.8054" stop-color="#ff005e"/><stop offset="1.0000" stop-color="#ff0041"/></linearGradient><linearGradient id="cg100" gradientUnits="userSpaceOnUse" x1="1273" x2="1826" y1="0" y2="0"><stop offset="0.0000" stop-color="#009dff"/><stop offset="0.2242" stop-color="#006bff"/><stop offset="0.3472" stop-color="#794dff"/><stop offset="0.4720" stop-color="#ff2bff"/><stop offset="0.5099" stop-color="#ff1bda"/><stop offset="0.5533" stop-color="#ff0eba"/><stop offset="0.6148" stop-color="#ff0099"/><stop offset="0.6618" stop-color="#ff0087"/><stop offset="0.8065" stop-color="#ff0060"/><stop offset="1.0000" stop-color="#ff0042"/></linearGradient><linearGradient id="cg101" gradientUnits="userSpaceOnUse" x1="1274" x2="1824" y1="0" y2="0"><stop offset="0.0000" stop-color="#009aff"/><stop offset="0.2255" stop-color="#0169ff"/><stop offset="0.3509" stop-color="#7b4aff"/><stop offset="0.4764" stop-color="#ff28ff"/><stop offset="0.5145" stop-color="#ff19da"/><stop offset="0.5582" stop-color="#ff0cbb"/><stop offset="0.6145" stop-color="#ff009d"/><stop offset="0.6673" stop-color="#ff0087"/><stop offset="0.8109" stop-color="#ff0061"/><stop offset="1.0000" stop-color="#ff0044"/></linearGradient><linearGradient id="cg102" gradientUnits="userSpaceOnUse" x1="1275" x2="1822" y1="0" y2="0"><stop offset="0.0000" stop-color="#0098ff"/><stop offset="0.2249" stop-color="#0067ff"/><stop offset="0.3510" stop-color="#7948ff"/><stop offset="0.4808" stop-color="#ff26fe"/><stop offset="0.5192" stop-color="#ff17da"/><stop offset="0.5631" stop-color="#ff0bbb"/><stop offset="0.6124" stop-color="#ff00a1"/><stop offset="0.6709" stop-color="#ff0089"/><stop offset="0.8135" stop-color="#ff0062"/><stop offset="1.0000" stop-color="#ff0045"/></linearGradient><linearGradient id="cg103" gradientUnits="userSpaceOnUse" x1="1276" x2="1820" y1="0" y2="0"><stop offset="0.0000" stop-color="#0095ff"/><stop offset="0.2243" stop-color="#0065ff"/><stop offset="0.3493" stop-color="#7547ff"/><stop offset="0.4853" stop-color="#ff23fe"/><stop offset="0.5239" stop-color="#ff15da"/><stop offset="0.5680" stop-color="#ff09bc"/><stop offset="0.6103" stop-color="#ff00a5"/><stop offset="0.6746" stop-color="#ff008a"/><stop offset="0.8162" stop-color="#ff0064"/><stop offset="1.0000" stop-color="#ff0047"/></linearGradient><linearGradient id="cg104" gradientUnits="userSpaceOnUse" x1="1276" x2="1818" y1="0" y2="0"><stop offset="0.0000" stop-color="#0092ff"/><stop offset="0.2269" stop-color="#0162ff"/><stop offset="0.3542" stop-color="#7744ff"/><stop offset="0.4908" stop-color="#ff21fe"/><stop offset="0.5295" stop-color="#ff13db"/><stop offset="0.5720" stop-color="#ff08bd"/><stop offset="0.6089" stop-color="#ff00a9"/><stop offset="0.6790" stop-color="#ff008b"/><stop offset="0.8173" stop-color="#ff0065"/><stop offset="1.0000" stop-color="#ff0048"/></linearGradient><linearGradient id="cg105" gradientUnits="userSpaceOnUse" x1="1277" x2="1817" y1="0" y2="0"><stop offset="0.0000" stop-color="#0090ff"/><stop offset="0.2259" stop-color="#0060ff"/><stop offset="0.3611" stop-color="#7c41ff"/><stop offset="0.4926" stop-color="#ff1fff"/><stop offset="0.5333" stop-color="#ff12db"/><stop offset="0.5759" stop-color="#ff06bd"/><stop offset="0.6074" stop-color="#ff00ac"/><stop offset="0.6815" stop-color="#ff008c"/><stop offset="0.8204" stop-color="#ff0066"/><stop offset="1.0000" stop-color="#ff004a"/></linearGradient><linearGradient id="cg106" gradientUnits="userSpaceOnUse" x1="1278" x2="1815" y1="0" y2="0"><stop offset="0.0000" stop-color="#008dff"/><stop offset="0.2253" stop-color="#005eff"/><stop offset="0.3631" stop-color="#7c3fff"/><stop offset="0.4972" stop-color="#ff1dff"/><stop offset="0.5363" stop-color="#ff10dc"/><stop offset="0.5791" stop-color="#ff05bf"/><stop offset="0.6052" stop-color="#ff00b0"/><stop offset="0.6853" stop-color="#ff008e"/><stop offset="0.8231" stop-color="#ff0068"/><stop offset="1.0000" stop-color="#ff004b"/></linearGradient><linearGradient id="cg107" gradientUnits="userSpaceOnUse" x1="1279" x2="1813" y1="0" y2="0"><stop offset="0.0000" stop-color="#008bff"/><stop offset="0.2247" stop-color="#005dff"/><stop offset="0.3614" stop-color="#783eff"/><stop offset="0.5019" stop-color="#ff1bff"/><stop offset="0.5393" stop-color="#ff0fde"/><stop offset="0.5824" stop-color="#ff04c0"/><stop offset="0.6030" stop-color="#ff00b5"/><stop offset="0.6873" stop-color="#ff0090"/><stop offset="0.8240" stop-color="#ff006a"/><stop offset="1.0000" stop-color="#ff004d"/></linearGradient><linearGradient id="cg108" gradientUnits="userSpaceOnUse" x1="1280" x2="1811" y1="0" y2="0"><stop offset="0.0000" stop-color="#0088ff"/><stop offset="0.2260" stop-color="#015aff"/><stop offset="0.3653" stop-color="#7a3bff"/><stop offset="0.5066" stop-color="#ff19ff"/><stop offset="0.5443" stop-color="#ff0dde"/><stop offset="0.5876" stop-color="#ff03c1"/><stop offset="0.6930" stop-color="#ff0090"/><stop offset="0.8267" stop-color="#ff006b"/><stop offset="1.0000" stop-color="#ff004e"/></linearGradient><linearGradient id="cg109" gradientUnits="userSpaceOnUse" x1="1281" x2="1810" y1="0" y2="0"><stop offset="0.0000" stop-color="#0086ff"/><stop offset="0.2250" stop-color="#0059ff"/><stop offset="0.3648" stop-color="#783aff"/><stop offset="0.5104" stop-color="#ff17fe"/><stop offset="0.5482" stop-color="#ff0bde"/><stop offset="0.5917" stop-color="#ff01c1"/><stop offset="0.6957" stop-color="#ff0091"/><stop offset="0.8299" stop-color="#ff006c"/><stop offset="1.0000" stop-color="#ff0050"/></linearGradient><linearGradient id="cg110" gradientUnits="userSpaceOnUse" x1="1282" x2="1808" y1="0" y2="0"><stop offset="0.0000" stop-color="#0083ff"/><stop offset="0.2243" stop-color="#0057ff"/><stop offset="0.3631" stop-color="#7539ff"/><stop offset="0.5152" stop-color="#ff15fe"/><stop offset="0.5532" stop-color="#ff0ade"/><stop offset="0.5970" stop-color="#ff00c1"/><stop offset="0.6996" stop-color="#ff0093"/><stop offset="0.8308" stop-color="#ff006e"/><stop offset="1.0000" stop-color="#ff0051"/></linearGradient><linearGradient id="cg111" gradientUnits="userSpaceOnUse" x1="1283" x2="1806" y1="0" y2="0"><stop offset="0.0000" stop-color="#0081ff"/><stop offset="0.2256" stop-color="#0155ff"/><stop offset="0.3748" stop-color="#7d35ff"/><stop offset="0.5182" stop-color="#ff13ff"/><stop offset="0.5583" stop-color="#ff08de"/><stop offset="0.6004" stop-color="#ff00c3"/><stop offset="0.7017" stop-color="#ff0095"/><stop offset="0.8337" stop-color="#ff0070"/><stop offset="1.0000" stop-color="#ff0053"/></linearGradient><linearGradient id="cg112" gradientUnits="userSpaceOnUse" x1="1283" x2="1804" y1="0" y2="0"><stop offset="0.0000" stop-color="#007fff"/><stop offset="0.2265" stop-color="#0053ff"/><stop offset="0.3781" stop-color="#7d33ff"/><stop offset="0.5240" stop-color="#ff11ff"/><stop offset="0.5624" stop-color="#ff07e0"/><stop offset="0.6046" stop-color="#ff00c4"/><stop offset="0.7063" stop-color="#ff0096"/><stop offset="0.8349" stop-color="#ff0071"/><stop offset="1.0000" stop-color="#ff0055"/></linearGradient><linearGradient id="cg113" gradientUnits="userSpaceOnUse" x1="1284" x2="1802" y1="0" y2="0"><stop offset="0.0000" stop-color="#007dff"/><stop offset="0.2259" stop-color="#0052ff"/><stop offset="0.3784" stop-color="#7b32ff"/><stop offset="0.5290" stop-color="#ff0fff"/><stop offset="0.5907" stop-color="#ff00d0"/><stop offset="0.6100" stop-color="#ff00c4"/><stop offset="0.7104" stop-color="#ff0097"/><stop offset="0.8378" stop-color="#ff0073"/><stop offset="1.0000" stop-color="#ff0056"/></linearGradient><linearGradient id="cg114" gradientUnits="userSpaceOnUse" x1="1285" x2="1801" y1="0" y2="0"><stop offset="0.0000" stop-color="#007bff"/><stop offset="0.2267" stop-color="#0150ff"/><stop offset="0.3798" stop-color="#7b30ff"/><stop offset="0.5329" stop-color="#ff0dff"/><stop offset="0.5872" stop-color="#ff00d5"/><stop offset="0.6124" stop-color="#ff00c6"/><stop offset="0.7132" stop-color="#ff0098"/><stop offset="0.8391" stop-color="#ff0074"/><stop offset="1.0000" stop-color="#ff0058"/></linearGradient><linearGradient id="cg115" gradientUnits="userSpaceOnUse" x1="1286" x2="1799" y1="0" y2="0"><stop offset="0.0000" stop-color="#0078ff"/><stop offset="0.2261" stop-color="#004eff"/><stop offset="0.3801" stop-color="#792fff"/><stop offset="0.5380" stop-color="#ff0bfe"/><stop offset="0.5848" stop-color="#ff00da"/><stop offset="0.6179" stop-color="#ff00c6"/><stop offset="0.7173" stop-color="#ff0099"/><stop offset="0.8421" stop-color="#ff0076"/><stop offset="1.0000" stop-color="#ff0059"/></linearGradient><linearGradient id="cg116" gradientUnits="userSpaceOnUse" x1="1287" x2="1797" y1="0" y2="0"><stop offset="0.0000" stop-color="#0076ff"/><stop offset="0.2255" stop-color="#004dff"/><stop offset="0.3804" stop-color="#772dff"/><stop offset="0.5431" stop-color="#ff09fe"/><stop offset="0.5843" stop-color="#ff00de"/><stop offset="0.6216" stop-color="#ff00c7"/><stop offset="0.7216" stop-color="#ff009b"/><stop offset="0.8451" stop-color="#ff0077"/><stop offset="1.0000" stop-color="#ff005b"/></linearGradient><linearGradient id="cg117" gradientUnits="userSpaceOnUse" x1="1288" x2="1795" y1="0" y2="0"><stop offset="0.0000" stop-color="#0074ff"/><stop offset="0.2249" stop-color="#004bff"/><stop offset="0.3767" stop-color="#732dff"/><stop offset="0.5483" stop-color="#ff08fe"/><stop offset="0.5819" stop-color="#ff00e4"/><stop offset="0.6272" stop-color="#ff00c8"/><stop offset="0.7258" stop-color="#ff009c"/><stop offset="0.8481" stop-color="#ff0079"/><stop offset="1.0000" stop-color="#ff005d"/></linearGradient><linearGradient id="cg118" gradientUnits="userSpaceOnUse" x1="1289" x2="1793" y1="0" y2="0"><stop offset="0.0000" stop-color="#0072ff"/><stop offset="0.2262" stop-color="#0149ff"/><stop offset="0.3929" stop-color="#7d28ff"/><stop offset="0.5516" stop-color="#ff06ff"/><stop offset="0.5794" stop-color="#ff00e9"/><stop offset="0.6310" stop-color="#ff00c9"/><stop offset="0.7282" stop-color="#ff009e"/><stop offset="0.8492" stop-color="#ff007b"/><stop offset="1.0000" stop-color="#ff005f"/></linearGradient><linearGradient id="cg119" gradientUnits="userSpaceOnUse" x1="1290" x2="1792" y1="0" y2="0"><stop offset="0.0000" stop-color="#0070ff"/><stop offset="0.2251" stop-color="#0048ff"/><stop offset="0.3944" stop-color="#7d27ff"/><stop offset="0.5558" stop-color="#ff05ff"/><stop offset="0.6335" stop-color="#ff00ca"/><stop offset="0.7311" stop-color="#ff009f"/><stop offset="0.8506" stop-color="#ff007c"/><stop offset="1.0000" stop-color="#ff0060"/></linearGradient><linearGradient id="cg120" gradientUnits="userSpaceOnUse" x1="1291" x2="1790" y1="0" y2="0"><stop offset="0.0000" stop-color="#006eff"/><stop offset="0.2244" stop-color="#0047ff"/><stop offset="0.3908" stop-color="#7927ff"/><stop offset="0.5611" stop-color="#ff03ff"/><stop offset="0.6393" stop-color="#ff00ca"/><stop offset="0.7355" stop-color="#ff00a0"/><stop offset="0.8537" stop-color="#ff007e"/><stop offset="1.0000" stop-color="#ff0062"/></linearGradient><linearGradient id="cg121" gradientUnits="userSpaceOnUse" x1="1292" x2="1788" y1="0" y2="0"><stop offset="0.0000" stop-color="#006cff"/><stop offset="0.2258" stop-color="#0145ff"/><stop offset="0.3952" stop-color="#7a25ff"/><stop offset="0.5665" stop-color="#ff01fe"/><stop offset="0.6452" stop-color="#ff00cb"/><stop offset="0.7399" stop-color="#ff00a1"/><stop offset="0.8569" stop-color="#ff007f"/><stop offset="1.0000" stop-color="#ff0064"/></linearGradient><linearGradient id="cg122" gradientUnits="userSpaceOnUse" x1="1293" x2="1786" y1="0" y2="0"><stop offset="0.0000" stop-color="#006aff"/><stop offset="0.2252" stop-color="#0043ff"/><stop offset="0.3955" stop-color="#7824ff"/><stop offset="0.5720" stop-color="#ff00fe"/><stop offset="0.6491" stop-color="#ff00cc"/><stop offset="0.7444" stop-color="#ff00a2"/><stop offset="0.8600" stop-color="#ff0081"/><stop offset="1.0000" stop-color="#ff0066"/></linearGradient><linearGradient id="cg123" gradientUnits="userSpaceOnUse" x1="1294" x2="1785" y1="0" y2="0"><stop offset="0.0000" stop-color="#0068ff"/><stop offset="0.2240" stop-color="#0042ff"/><stop offset="0.3931" stop-color="#7523ff"/><stop offset="0.5764" stop-color="#ff00fe"/><stop offset="0.6538" stop-color="#ff00cc"/><stop offset="0.7475" stop-color="#ff00a4"/><stop offset="0.8615" stop-color="#ff0082"/><stop offset="1.0000" stop-color="#ff0067"/></linearGradient><linearGradient id="cg124" gradientUnits="userSpaceOnUse" x1="1295" x2="1783" y1="0" y2="0"><stop offset="0.0000" stop-color="#0066ff"/><stop offset="0.2254" stop-color="#0140ff"/><stop offset="0.4057" stop-color="#7d1fff"/><stop offset="0.5799" stop-color="#ff00ff"/><stop offset="0.6578" stop-color="#ff00cd"/><stop offset="0.7500" stop-color="#ff00a6"/><stop offset="0.8627" stop-color="#ff0084"/><stop offset="1.0000" stop-color="#ff0069"/></linearGradient><linearGradient id="cg125" gradientUnits="userSpaceOnUse" x1="1296" x2="1781" y1="0" y2="0"><stop offset="0.0000" stop-color="#0064ff"/><stop offset="0.2247" stop-color="#003fff"/><stop offset="0.4082" stop-color="#7d1eff"/><stop offset="0.5608" stop-color="#ec00ff"/><stop offset="0.5856" stop-color="#ff00ff"/><stop offset="0.6619" stop-color="#ff00cf"/><stop offset="0.7546" stop-color="#ff00a7"/><stop offset="0.8660" stop-color="#ff0086"/><stop offset="1.0000" stop-color="#ff006b"/></linearGradient><linearGradient id="cg126" gradientUnits="userSpaceOnUse" x1="1297" x2="1779" y1="0" y2="0"><stop offset="0.0000" stop-color="#0062ff"/><stop offset="0.2241" stop-color="#003eff"/><stop offset="0.3963" stop-color="#721fff"/><stop offset="0.5602" stop-color="#e800ff"/><stop offset="0.5913" stop-color="#ff00ff"/><stop offset="0.6660" stop-color="#ff00d0"/><stop offset="0.7573" stop-color="#ff00a9"/><stop offset="0.8672" stop-color="#ff0088"/><stop offset="1.0000" stop-color="#ff006d"/></linearGradient><linearGradient id="cg127" gradientUnits="userSpaceOnUse" x1="1298" x2="1777" y1="0" y2="0"><stop offset="0.0000" stop-color="#0061ff"/><stop offset="0.2234" stop-color="#003dff"/><stop offset="0.3904" stop-color="#6d20ff"/><stop offset="0.5574" stop-color="#e200ff"/><stop offset="0.5971" stop-color="#ff00ff"/><stop offset="0.6722" stop-color="#ff00d0"/><stop offset="0.7620" stop-color="#ff00aa"/><stop offset="0.8706" stop-color="#ff0089"/><stop offset="1.0000" stop-color="#ff006f"/></linearGradient><linearGradient id="cg128" gradientUnits="userSpaceOnUse" x1="1299" x2="1776" y1="0" y2="0"><stop offset="0.0000" stop-color="#005fff"/><stop offset="0.2243" stop-color="#013bff"/><stop offset="0.3920" stop-color="#6d1eff"/><stop offset="0.5535" stop-color="#dd00ff"/><stop offset="0.6017" stop-color="#ff00fe"/><stop offset="0.6771" stop-color="#ff00d0"/><stop offset="0.7652" stop-color="#ff00ab"/><stop offset="0.8721" stop-color="#ff008b"/><stop offset="1.0000" stop-color="#ff0070"/></linearGradient><linearGradient id="cg129" gradientUnits="userSpaceOnUse" x1="1300" x2="1774" y1="0" y2="0"><stop offset="0.0000" stop-color="#005dff"/><stop offset="0.2236" stop-color="#003aff"/><stop offset="0.3903" stop-color="#6a1eff"/><stop offset="0.5506" stop-color="#d700ff"/><stop offset="0.6076" stop-color="#ff00fe"/><stop offset="0.6814" stop-color="#ff00d2"/><stop offset="0.7700" stop-color="#ff00ac"/><stop offset="0.8755" stop-color="#ff008d"/><stop offset="1.0000" stop-color="#ff0072"/></linearGradient><linearGradient id="cg130" gradientUnits="userSpaceOnUse" x1="1301" x2="1772" y1="0" y2="0"><stop offset="0.0000" stop-color="#005bff"/><stop offset="0.2229" stop-color="#0039ff"/><stop offset="0.3864" stop-color="#661dff"/><stop offset="0.5478" stop-color="#d200ff"/><stop offset="0.6115" stop-color="#ff00ff"/><stop offset="0.6858" stop-color="#ff00d3"/><stop offset="0.7728" stop-color="#ff00ae"/><stop offset="0.8769" stop-color="#ff008f"/><stop offset="1.0000" stop-color="#ff0074"/></linearGradient><linearGradient id="cg131" gradientUnits="userSpaceOnUse" x1="1302" x2="1770" y1="0" y2="0"><stop offset="0.0000" stop-color="#005aff"/><stop offset="0.2244" stop-color="#0137ff"/><stop offset="0.3889" stop-color="#661cff"/><stop offset="0.5470" stop-color="#ce00ff"/><stop offset="0.6175" stop-color="#ff00ff"/><stop offset="0.6902" stop-color="#ff00d4"/><stop offset="0.7778" stop-color="#ff00af"/><stop offset="0.8803" stop-color="#ff0090"/><stop offset="1.0000" stop-color="#ff0077"/></linearGradient><linearGradient id="cg132" gradientUnits="userSpaceOnUse" x1="1303" x2="1769" y1="0" y2="0"><stop offset="0.0000" stop-color="#0058ff"/><stop offset="0.2232" stop-color="#0036ff"/><stop offset="0.5429" stop-color="#c900ff"/><stop offset="0.6223" stop-color="#ff00ff"/><stop offset="0.6931" stop-color="#ff00d5"/><stop offset="0.7790" stop-color="#ff00b1"/><stop offset="0.8798" stop-color="#ff0092"/><stop offset="1.0000" stop-color="#ff0078"/></linearGradient><linearGradient id="cg133" gradientUnits="userSpaceOnUse" x1="1304" x2="1767" y1="0" y2="0"><stop offset="0.0000" stop-color="#0056ff"/><stop offset="0.2225" stop-color="#0035ff"/><stop offset="0.5400" stop-color="#c400ff"/><stop offset="0.6285" stop-color="#ff00ff"/><stop offset="0.6998" stop-color="#ff00d5"/><stop offset="0.7840" stop-color="#ff00b2"/><stop offset="0.8834" stop-color="#ff0094"/><stop offset="1.0000" stop-color="#ff007a"/></linearGradient><linearGradient id="cg134" gradientUnits="userSpaceOnUse" x1="1305" x2="1765" y1="0" y2="0"><stop offset="0.0000" stop-color="#0055ff"/><stop offset="0.2239" stop-color="#0134ff"/><stop offset="0.5370" stop-color="#bf00ff"/><stop offset="0.6348" stop-color="#ff00fe"/><stop offset="0.7065" stop-color="#ff00d5"/><stop offset="0.7891" stop-color="#ff00b3"/><stop offset="0.8870" stop-color="#ff0095"/><stop offset="1.0000" stop-color="#ff007c"/></linearGradient><linearGradient id="cg135" gradientUnits="userSpaceOnUse" x1="1306" x2="1763" y1="0" y2="0"><stop offset="0.0000" stop-color="#0053ff"/><stop offset="0.2232" stop-color="#0033ff"/><stop offset="0.5361" stop-color="#bc00ff"/><stop offset="0.6411" stop-color="#ff00fe"/><stop offset="0.7112" stop-color="#ff00d7"/><stop offset="0.7921" stop-color="#ff00b5"/><stop offset="0.8884" stop-color="#ff0098"/><stop offset="1.0000" stop-color="#ff007f"/></linearGradient><linearGradient id="cg136" gradientUnits="userSpaceOnUse" x1="1307" x2="1761" y1="0" y2="0"><stop offset="0.0000" stop-color="#0052ff"/><stop offset="0.2225" stop-color="#0032ff"/><stop offset="0.5330" stop-color="#b700ff"/><stop offset="0.6454" stop-color="#ff00ff"/><stop offset="0.7159" stop-color="#ff00d8"/><stop offset="0.7974" stop-color="#ff00b6"/><stop offset="0.8921" stop-color="#ff0099"/><stop offset="1.0000" stop-color="#ff0081"/></linearGradient><linearGradient id="cg137" gradientUnits="userSpaceOnUse" x1="1308" x2="1760" y1="0" y2="0"><stop offset="0.0000" stop-color="#0050ff"/><stop offset="0.2212" stop-color="#0031ff"/><stop offset="0.5288" stop-color="#b200ff"/><stop offset="0.6504" stop-color="#ff00ff"/><stop offset="0.7190" stop-color="#ff00d9"/><stop offset="0.7987" stop-color="#ff00b8"/><stop offset="0.8916" stop-color="#ff009b"/><stop offset="1.0000" stop-color="#ff0083"/></linearGradient><linearGradient id="cg138" gradientUnits="userSpaceOnUse" x1="1309" x2="1758" y1="0" y2="0"><stop offset="0.0000" stop-color="#004fff"/><stop offset="0.2227" stop-color="#012fff"/><stop offset="0.5256" stop-color="#ad00ff"/><stop offset="0.6570" stop-color="#ff00ff"/><stop offset="0.7261" stop-color="#ff00d9"/><stop offset="0.8040" stop-color="#ff00b9"/><stop offset="0.8953" stop-color="#ff009d"/><stop offset="1.0000" stop-color="#ff0085"/></linearGradient><linearGradient id="cg139" gradientUnits="userSpaceOnUse" x1="1310" x2="1756" y1="0" y2="0"><stop offset="0.0000" stop-color="#004dff"/><stop offset="0.2220" stop-color="#002eff"/><stop offset="0.5224" stop-color="#a900ff"/><stop offset="0.6637" stop-color="#ff00ff"/><stop offset="0.7309" stop-color="#ff00da"/><stop offset="0.8072" stop-color="#ff00bb"/><stop offset="0.8969" stop-color="#ff009f"/><stop offset="1.0000" stop-color="#ff0087"/></linearGradient><linearGradient id="cg140" gradientUnits="userSpaceOnUse" x1="1311" x2="1754" y1="0" y2="0"><stop offset="0.0000" stop-color="#004cff"/><stop offset="0.2212" stop-color="#002dff"/><stop offset="0.5214" stop-color="#a600ff"/><stop offset="0.6704" stop-color="#ff00fe"/><stop offset="0.7359" stop-color="#ff00db"/><stop offset="0.8126" stop-color="#ff00bc"/><stop offset="0.9007" stop-color="#ff00a1"/><stop offset="1.0000" stop-color="#ff0089"/></linearGradient><linearGradient id="cg141" gradientUnits="userSpaceOnUse" x1="1312" x2="1752" y1="0" y2="0"><stop offset="0.0000" stop-color="#004aff"/><stop offset="0.2227" stop-color="#012cff"/><stop offset="0.5182" stop-color="#a200ff"/><stop offset="0.6773" stop-color="#ff00fe"/><stop offset="0.7432" stop-color="#ff00db"/><stop offset="0.8182" stop-color="#ff00bd"/><stop offset="1.0000" stop-color="#ff008c"/></linearGradient><linearGradient id="cg142" gradientUnits="userSpaceOnUse" x1="1313" x2="1751" y1="0" y2="0"><stop offset="0.0000" stop-color="#0049ff"/><stop offset="0.2215" stop-color="#002bff"/><stop offset="0.5137" stop-color="#9d00ff"/><stop offset="0.6804" stop-color="#ff00ff"/><stop offset="0.7466" stop-color="#ff00dc"/><stop offset="0.8196" stop-color="#ff00bf"/><stop offset="1.0000" stop-color="#ff008e"/></linearGradient><linearGradient id="cg143" gradientUnits="userSpaceOnUse" x1="1314" x2="1749" y1="0" y2="0"><stop offset="0.0000" stop-color="#0047ff"/><stop offset="0.2207" stop-color="#002aff"/><stop offset="0.5103" stop-color="#9900ff"/><stop offset="0.6874" stop-color="#ff00ff"/><stop offset="0.7517" stop-color="#ff00de"/><stop offset="0.8253" stop-color="#ff00c0"/><stop offset="1.0000" stop-color="#ff0090"/></linearGradient><linearGradient id="cg144" gradientUnits="userSpaceOnUse" x1="1315" x2="1747" y1="0" y2="0"><stop offset="0.0000" stop-color="#0046ff"/><stop offset="0.2222" stop-color="#0129ff"/><stop offset="0.5093" stop-color="#9600ff"/><stop offset="0.6944" stop-color="#ff00ff"/><stop offset="0.7569" stop-color="#ff00df"/><stop offset="0.8287" stop-color="#ff00c2"/><stop offset="1.0000" stop-color="#ff0092"/></linearGradient><linearGradient id="cg145" gradientUnits="userSpaceOnUse" x1="1316" x2="1745" y1="0" y2="0"><stop offset="0.0000" stop-color="#0045ff"/><stop offset="0.2214" stop-color="#0028ff"/><stop offset="0.5058" stop-color="#9200ff"/><stop offset="0.7016" stop-color="#ff00ff"/><stop offset="0.7622" stop-color="#ff00e0"/><stop offset="0.8322" stop-color="#ff00c4"/><stop offset="1.0000" stop-color="#ff0095"/></linearGradient><linearGradient id="cg146" gradientUnits="userSpaceOnUse" x1="1317" x2="1744" y1="0" y2="0"><stop offset="0.0000" stop-color="#0043ff"/><stop offset="0.2201" stop-color="#0027ff"/><stop offset="0.5012" stop-color="#8e00ff"/><stop offset="0.7073" stop-color="#ff00ff"/><stop offset="0.8361" stop-color="#ff00c5"/><stop offset="1.0000" stop-color="#ff0097"/></linearGradient><linearGradient id="cg147" gradientUnits="userSpaceOnUse" x1="1318" x2="1742" y1="0" y2="0"><stop offset="0.0000" stop-color="#0042ff"/><stop offset="0.2193" stop-color="#0026ff"/><stop offset="0.4976" stop-color="#8a00ff"/><stop offset="0.7146" stop-color="#ff00fe"/><stop offset="0.8420" stop-color="#ff00c6"/><stop offset="1.0000" stop-color="#ff0099"/></linearGradient><linearGradient id="cg148" gradientUnits="userSpaceOnUse" x1="1319" x2="1740" y1="0" y2="0"><stop offset="0.0000" stop-color="#0041ff"/><stop offset="0.2209" stop-color="#0125ff"/><stop offset="0.4941" stop-color="#8600ff"/><stop offset="0.7197" stop-color="#ff00ff"/><stop offset="0.8456" stop-color="#ff00c8"/><stop offset="1.0000" stop-color="#ff009c"/></linearGradient><linearGradient id="cg149" gradientUnits="userSpaceOnUse" x1="1320" x2="1738" y1="0" y2="0"><stop offset="0.0000" stop-color="#003fff"/><stop offset="0.2201" stop-color="#0024ff"/><stop offset="0.4928" stop-color="#8400ff"/><stop offset="0.7273" stop-color="#ff00ff"/><stop offset="0.8493" stop-color="#ff00c9"/><stop offset="1.0000" stop-color="#ff009e"/></linearGradient><linearGradient id="cg150" gradientUnits="userSpaceOnUse" x1="1322" x2="1736" y1="0" y2="0"><stop offset="0.0000" stop-color="#003eff"/><stop offset="0.2174" stop-color="#0023ff"/><stop offset="0.4879" stop-color="#8000ff"/><stop offset="0.7343" stop-color="#ff00ff"/><stop offset="0.8527" stop-color="#ff00cb"/><stop offset="1.0000" stop-color="#ff00a1"/></linearGradient><linearGradient id="cg151" gradientUnits="userSpaceOnUse" x1="1323" x2="1735" y1="0" y2="0"><stop offset="0.0000" stop-color="#003dff"/><stop offset="0.2184" stop-color="#0122ff"/><stop offset="0.4830" stop-color="#7c00ff"/><stop offset="0.7403" stop-color="#ff00ff"/><stop offset="0.8568" stop-color="#ff00cc"/><stop offset="1.0000" stop-color="#ff00a3"/></linearGradient><linearGradient id="cg152" gradientUnits="userSpaceOnUse" x1="1324" x2="1733" y1="0" y2="0"><stop offset="0.0000" stop-color="#003bff"/><stop offset="0.2176" stop-color="#0021ff"/><stop offset="0.4792" stop-color="#7900ff"/><stop offset="0.7457" stop-color="#fe00ff"/><stop offset="0.8631" stop-color="#ff00cd"/><stop offset="1.0000" stop-color="#ff00a6"/></linearGradient><linearGradient id="cg153" gradientUnits="userSpaceOnUse" x1="1325" x2="1731" y1="0" y2="0"><stop offset="0.0000" stop-color="#003aff"/><stop offset="0.2167" stop-color="#0021ff"/><stop offset="0.4754" stop-color="#7500ff"/><stop offset="0.7537" stop-color="#fe00ff"/><stop offset="0.8670" stop-color="#ff00cf"/><stop offset="1.0000" stop-color="#ff00a8"/></linearGradient><linearGradient id="cg154" gradientUnits="userSpaceOnUse" x1="1326" x2="1729" y1="0" y2="0"><stop offset="0.0000" stop-color="#0039ff"/><stop offset="0.2184" stop-color="#0120ff"/><stop offset="0.4739" stop-color="#7300ff"/><stop offset="0.7618" stop-color="#fe00ff"/><stop offset="0.8710" stop-color="#ff00d1"/><stop offset="1.0000" stop-color="#ff00ab"/></linearGradient><linearGradient id="cg155" gradientUnits="userSpaceOnUse" x1="1327" x2="1728" y1="0" y2="0"><stop offset="0.0000" stop-color="#0038ff"/><stop offset="0.2170" stop-color="#001fff"/><stop offset="0.4688" stop-color="#6f00ff"/><stop offset="0.7681" stop-color="#ff00ff"/><stop offset="0.8753" stop-color="#ff00d2"/><stop offset="1.0000" stop-color="#ff00ad"/></linearGradient><linearGradient id="cg156" gradientUnits="userSpaceOnUse" x1="1328" x2="1726" y1="0" y2="0"><stop offset="0.0000" stop-color="#0036ff"/><stop offset="0.2161" stop-color="#001eff"/><stop offset="0.4648" stop-color="#6c00ff"/><stop offset="0.7764" stop-color="#ff00ff"/><stop offset="0.8794" stop-color="#ff00d4"/><stop offset="1.0000" stop-color="#ff00b0"/></linearGradient><linearGradient id="cg157" gradientUnits="userSpaceOnUse" x1="1329" x2="1724" y1="0" y2="0"><stop offset="0.0000" stop-color="#0035ff"/><stop offset="0.2152" stop-color="#001dff"/><stop offset="0.4608" stop-color="#6900ff"/><stop offset="0.7848" stop-color="#ff00ff"/><stop offset="0.8835" stop-color="#ff00d6"/><stop offset="1.0000" stop-color="#ff00b3"/></linearGradient><linearGradient id="cg158" gradientUnits="userSpaceOnUse" x1="1330" x2="1722" y1="0" y2="0"><stop offset="0.0000" stop-color="#0034ff"/><stop offset="0.2168" stop-color="#011cff"/><stop offset="0.4592" stop-color="#6600ff"/><stop offset="0.7908" stop-color="#fe00ff"/><stop offset="0.8929" stop-color="#ff00d6"/><stop offset="1.0000" stop-color="#ff00b6"/></linearGradient><linearGradient id="cg159" gradientUnits="userSpaceOnUse" x1="1331" x2="1720" y1="0" y2="0"><stop offset="0.0000" stop-color="#0033ff"/><stop offset="0.2159" stop-color="#001cff"/><stop offset="0.4550" stop-color="#6300ff"/><stop offset="0.7995" stop-color="#fe00ff"/><stop offset="0.8972" stop-color="#ff00d8"/><stop offset="1.0000" stop-color="#ff00b9"/></linearGradient><linearGradient id="cg160" gradientUnits="userSpaceOnUse" x1="1333" x2="1719" y1="0" y2="0"><stop offset="0.0000" stop-color="#0032ff"/><stop offset="0.2124" stop-color="#001bff"/><stop offset="0.4482" stop-color="#6000ff"/><stop offset="0.8057" stop-color="#fe00ff"/><stop offset="0.8990" stop-color="#ff00da"/><stop offset="1.0000" stop-color="#ff00bb"/></linearGradient><linearGradient id="cg161" gradientUnits="userSpaceOnUse" x1="1334" x2="1717" y1="0" y2="0"><stop offset="0.0000" stop-color="#0030ff"/><stop offset="0.2141" stop-color="#011aff"/><stop offset="0.4439" stop-color="#5d00ff"/><stop offset="0.8146" stop-color="#ff00ff"/><stop offset="0.9034" stop-color="#ff00dc"/><stop offset="1.0000" stop-color="#ff00be"/></linearGradient><linearGradient id="cg162" gradientUnits="userSpaceOnUse" x1="1335" x2="1715" y1="0" y2="0"><stop offset="0.0000" stop-color="#002fff"/><stop offset="0.2132" stop-color="#0019ff"/><stop offset="0.4395" stop-color="#5a00ff"/><stop offset="0.8237" stop-color="#ff00ff"/><stop offset="0.9079" stop-color="#ff00de"/><stop offset="1.0000" stop-color="#ff00c1"/></linearGradient><linearGradient id="cg163" gradientUnits="userSpaceOnUse" x1="1336" x2="1713" y1="0" y2="0"><stop offset="0.0000" stop-color="#002eff"/><stop offset="0.2122" stop-color="#0018ff"/><stop offset="0.4377" stop-color="#5800ff"/><stop offset="0.8329" stop-color="#ff00ff"/><stop offset="0.9125" stop-color="#ff00df"/><stop offset="1.0000" stop-color="#ff00c4"/></linearGradient><linearGradient id="cg164" gradientUnits="userSpaceOnUse" x1="1337" x2="1711" y1="0" y2="0"><stop offset="0.0000" stop-color="#002dff"/><stop offset="0.2112" stop-color="#0018ff"/><stop offset="0.4332" stop-color="#5500ff"/><stop offset="0.8422" stop-color="#ff00ff"/><stop offset="1.0000" stop-color="#ff00c7"/></linearGradient><linearGradient id="cg165" gradientUnits="userSpaceOnUse" x1="1338" x2="1710" y1="0" y2="0"><stop offset="0.0000" stop-color="#002cff"/><stop offset="0.2124" stop-color="#0017ff"/><stop offset="0.4274" stop-color="#5200ff"/><stop offset="0.8468" stop-color="#fe00ff"/><stop offset="1.0000" stop-color="#ff00ca"/></linearGradient><linearGradient id="cg166" gradientUnits="userSpaceOnUse" x1="1339" x2="1708" y1="0" y2="0"><stop offset="0.0000" stop-color="#002bff"/><stop offset="0.2114" stop-color="#0016ff"/><stop offset="0.4228" stop-color="#4f00ff"/><stop offset="0.8564" stop-color="#fe00ff"/><stop offset="1.0000" stop-color="#ff00cd"/></linearGradient><linearGradient id="cg167" gradientUnits="userSpaceOnUse" x1="1340" x2="1706" y1="0" y2="0"><stop offset="0.0000" stop-color="#002aff"/><stop offset="0.2104" stop-color="#0016ff"/><stop offset="0.4208" stop-color="#4d00ff"/><stop offset="0.8661" stop-color="#ff00ff"/><stop offset="1.0000" stop-color="#ff00d0"/></linearGradient><linearGradient id="cg168" gradientUnits="userSpaceOnUse" x1="1342" x2="1704" y1="0" y2="0"><stop offset="0.0000" stop-color="#0029ff"/><stop offset="0.2099" stop-color="#0115ff"/><stop offset="0.4144" stop-color="#4a00ff"/><stop offset="0.8757" stop-color="#ff00ff"/><stop offset="1.0000" stop-color="#ff00d4"/></linearGradient><linearGradient id="cg169" gradientUnits="userSpaceOnUse" x1="1343" x2="1703" y1="0" y2="0"><stop offset="0.0000" stop-color="#0028ff"/><stop offset="0.2083" stop-color="#0014ff"/><stop offset="0.4083" stop-color="#4700ff"/><stop offset="0.8833" stop-color="#ff00ff"/><stop offset="1.0000" stop-color="#ff00d6"/></linearGradient><linearGradient id="cg170" gradientUnits="userSpaceOnUse" x1="1344" x2="1701" y1="0" y2="0"><stop offset="0.0000" stop-color="#0027ff"/><stop offset="0.2073" stop-color="#0013ff"/><stop offset="0.4034" stop-color="#4500ff"/><stop offset="0.8936" stop-color="#ff00ff"/><stop offset="1.0000" stop-color="#ff00da"/></linearGradient><linearGradient id="cg171" gradientUnits="userSpaceOnUse" x1="1345" x2="1699" y1="0" y2="0"><stop offset="0.0000" stop-color="#0026ff"/><stop offset="0.2090" stop-color="#0112ff"/><stop offset="0.3983" stop-color="#4200ff"/><stop offset="0.9011" stop-color="#fe00ff"/><stop offset="1.0000" stop-color="#ff00dd"/></linearGradient><linearGradient id="cg172" gradientUnits="userSpaceOnUse" x1="1346" x2="1697" y1="0" y2="0"><stop offset="0.0000" stop-color="#0025ff"/><stop offset="0.2080" stop-color="#0012ff"/><stop offset="0.3960" stop-color="#4000ff"/><stop offset="0.9117" stop-color="#fe00ff"/><stop offset="1.0000" stop-color="#ff00e1"/></linearGradient><linearGradient id="cg173" gradientUnits="userSpaceOnUse" x1="1347" x2="1695" y1="0" y2="0"><stop offset="0.0000" stop-color="#0024ff"/><stop offset="0.2069" stop-color="#0011ff"/><stop offset="0.3908" stop-color="#3e00ff"/><stop offset="0.9224" stop-color="#ff00ff"/><stop offset="1.0000" stop-color="#ff00e4"/></linearGradient><linearGradient id="cg174" gradientUnits="userSpaceOnUse" x1="1348" x2="1694" y1="0" y2="0"><stop offset="0.0000" stop-color="#0023ff"/><stop offset="0.2081" stop-color="#0110ff"/><stop offset="0.3844" stop-color="#3b00ff"/><stop offset="0.9306" stop-color="#ff00ff"/><stop offset="1.0000" stop-color="#ff00e7"/></linearGradient><linearGradient id="cg175" gradientUnits="userSpaceOnUse" x1="1350" x2="1692" y1="0" y2="0"><stop offset="0.0000" stop-color="#0022ff"/><stop offset="0.2047" stop-color="#0010ff"/><stop offset="0.3772" stop-color="#3800ff"/><stop offset="0.9415" stop-color="#ff00ff"/><stop offset="1.0000" stop-color="#ff00eb"/></linearGradient><linearGradient id="cg176" gradientUnits="userSpaceOnUse" x1="1351" x2="1690" y1="0" y2="0"><stop offset="0.0000" stop-color="#0021ff"/><stop offset="0.2035" stop-color="#000fff"/><stop offset="0.3717" stop-color="#3600ff"/><stop offset="0.9499" stop-color="#fe00ff"/><stop offset="1.0000" stop-color="#ff00ee"/></linearGradient><linearGradient id="cg177" gradientUnits="userSpaceOnUse" x1="1352" x2="1688" y1="0" y2="0"><stop offset="0.0000" stop-color="#0020ff"/><stop offset="0.2024" stop-color="#000fff"/><stop offset="0.3690" stop-color="#3400ff"/><stop offset="0.9613" stop-color="#fe00ff"/><stop offset="1.0000" stop-color="#ff00f2"/></linearGradient><linearGradient id="cg178" gradientUnits="userSpaceOnUse" x1="1353" x2="1686" y1="0" y2="0"><stop offset="0.0000" stop-color="#001fff"/><stop offset="0.2042" stop-color="#010eff"/><stop offset="0.3634" stop-color="#3200ff"/><stop offset="0.6727" stop-color="#9600ff"/><stop offset="0.9730" stop-color="#fe00ff"/><stop offset="1.0000" stop-color="#ff00f6"/></linearGradient><linearGradient id="cg179" gradientUnits="userSpaceOnUse" x1="1354" x2="1685" y1="0" y2="0"><stop offset="0.0000" stop-color="#001eff"/><stop offset="0.2024" stop-color="#000dff"/><stop offset="0.3565" stop-color="#2f00ff"/><stop offset="0.6737" stop-color="#9500ff"/><stop offset="0.9819" stop-color="#ff00ff"/><stop offset="1.0000" stop-color="#ff00f9"/></linearGradient><linearGradient id="cg180" gradientUnits="userSpaceOnUse" x1="1356" x2="1683" y1="0" y2="0"><stop offset="0.0000" stop-color="#001dff"/><stop offset="0.1988" stop-color="#000dff"/><stop offset="0.3486" stop-color="#2d00ff"/><stop offset="1.0000" stop-color="#ff00fd"/></linearGradient><linearGradient id="cg181" gradientUnits="userSpaceOnUse" x1="1357" x2="1681" y1="0" y2="0"><stop offset="0.0000" stop-color="#001cff"/><stop offset="0.2006" stop-color="#010cff"/><stop offset="0.3457" stop-color="#2b00ff"/><stop offset="0.6790" stop-color="#9200ff"/><stop offset="1.0000" stop-color="#fd00ff"/></linearGradient><linearGradient id="cg182" gradientUnits="userSpaceOnUse" x1="1358" x2="1679" y1="0" y2="0"><stop offset="0.0000" stop-color="#001bff"/><stop offset="0.1994" stop-color="#000bff"/><stop offset="0.3396" stop-color="#2900ff"/><stop offset="0.6760" stop-color="#8f00ff"/><stop offset="1.0000" stop-color="#f900ff"/></linearGradient><linearGradient id="cg183" gradientUnits="userSpaceOnUse" x1="1359" x2="1678" y1="0" y2="0"><stop offset="0.0000" stop-color="#001aff"/><stop offset="0.1975" stop-color="#000bff"/><stop offset="0.3323" stop-color="#2700ff"/><stop offset="0.6708" stop-color="#8c00ff"/><stop offset="1.0000" stop-color="#f600ff"/></linearGradient><linearGradient id="cg184" gradientUnits="userSpaceOnUse" x1="1361" x2="1676" y1="0" y2="0"><stop offset="0.0000" stop-color="#0019ff"/><stop offset="0.1968" stop-color="#010aff"/><stop offset="0.3238" stop-color="#2400ff"/><stop offset="0.6667" stop-color="#8900ff"/><stop offset="1.0000" stop-color="#f200ff"/></linearGradient><linearGradient id="cg185" gradientUnits="userSpaceOnUse" x1="1362" x2="1674" y1="0" y2="0"><stop offset="0.0000" stop-color="#0019ff"/><stop offset="0.1955" stop-color="#000aff"/><stop offset="0.3173" stop-color="#2200ff"/><stop offset="1.0000" stop-color="#ee00ff"/></linearGradient><linearGradient id="cg186" gradientUnits="userSpaceOnUse" x1="1363" x2="1672" y1="0" y2="0"><stop offset="0.0000" stop-color="#0018ff"/><stop offset="0.1942" stop-color="#0009ff"/><stop offset="0.3139" stop-color="#2100ff"/><stop offset="1.0000" stop-color="#ea00ff"/></linearGradient><linearGradient id="cg187" gradientUnits="userSpaceOnUse" x1="1364" x2="1670" y1="0" y2="0"><stop offset="0.0000" stop-color="#0017ff"/><stop offset="0.1928" stop-color="#0009ff"/><stop offset="0.3072" stop-color="#1f00ff"/><stop offset="1.0000" stop-color="#e600ff"/></linearGradient><linearGradient id="cg188" gradientUnits="userSpaceOnUse" x1="1366" x2="1669" y1="0" y2="0"><stop offset="0.0000" stop-color="#0016ff"/><stop offset="0.1914" stop-color="#0108ff"/><stop offset="0.2970" stop-color="#1c00ff"/><stop offset="1.0000" stop-color="#e400ff"/></linearGradient><linearGradient id="cg189" gradientUnits="userSpaceOnUse" x1="1367" x2="1667" y1="0" y2="0"><stop offset="0.0000" stop-color="#0015ff"/><stop offset="0.1900" stop-color="#0007ff"/><stop offset="0.2900" stop-color="#1a00ff"/><stop offset="1.0000" stop-color="#e000ff"/></linearGradient><linearGradient id="cg190" gradientUnits="userSpaceOnUse" x1="1368" x2="1665" y1="0" y2="0"><stop offset="0.0000" stop-color="#0014ff"/><stop offset="0.1886" stop-color="#0007ff"/><stop offset="0.2828" stop-color="#1800ff"/><stop offset="1.0000" stop-color="#dd00ff"/></linearGradient><linearGradient id="cg191" gradientUnits="userSpaceOnUse" x1="1369" x2="1663" y1="0" y2="0"><stop offset="0.0000" stop-color="#0014ff"/><stop offset="0.1905" stop-color="#0106ff"/><stop offset="0.2789" stop-color="#1700ff"/><stop offset="1.0000" stop-color="#d900ff"/></linearGradient><linearGradient id="cg192" gradientUnits="userSpaceOnUse" x1="1371" x2="1662" y1="0" y2="0"><stop offset="0.0000" stop-color="#0013ff"/><stop offset="0.1856" stop-color="#0006ff"/><stop offset="0.2680" stop-color="#1500ff"/><stop offset="1.0000" stop-color="#d600ff"/></linearGradient><linearGradient id="cg193" gradientUnits="userSpaceOnUse" x1="1372" x2="1660" y1="0" y2="0"><stop offset="0.0000" stop-color="#0012ff"/><stop offset="0.1840" stop-color="#0005ff"/><stop offset="0.2604" stop-color="#1300ff"/><stop offset="1.0000" stop-color="#d300ff"/></linearGradient><linearGradient id="cg194" gradientUnits="userSpaceOnUse" x1="1373" x2="1658" y1="0" y2="0"><stop offset="0.0000" stop-color="#0011ff"/><stop offset="0.1860" stop-color="#0105ff"/><stop offset="0.2526" stop-color="#1100ff"/><stop offset="1.0000" stop-color="#d000ff"/></linearGradient><linearGradient id="cg195" gradientUnits="userSpaceOnUse" x1="1375" x2="1656" y1="0" y2="0"><stop offset="0.0000" stop-color="#0010ff"/><stop offset="0.1815" stop-color="#0004ff"/><stop offset="0.2456" stop-color="#0f00ff"/><stop offset="1.0000" stop-color="#cc00ff"/></linearGradient><linearGradient id="cg196" gradientUnits="userSpaceOnUse" x1="1376" x2="1654" y1="0" y2="0"><stop offset="0.0000" stop-color="#000fff"/><stop offset="0.1799" stop-color="#0004ff"/><stop offset="1.0000" stop-color="#c900ff"/></linearGradient><linearGradient id="cg197" gradientUnits="userSpaceOnUse" x1="1377" x2="1653" y1="0" y2="0"><stop offset="0.0000" stop-color="#000fff"/><stop offset="0.1775" stop-color="#0003ff"/><stop offset="1.0000" stop-color="#c600ff"/></linearGradient><linearGradient id="cg198" gradientUnits="userSpaceOnUse" x1="1378" x2="1651" y1="0" y2="0"><stop offset="0.0000" stop-color="#000eff"/><stop offset="0.1795" stop-color="#0103ff"/><stop offset="1.0000" stop-color="#c300ff"/></linearGradient><linearGradient id="cg199" gradientUnits="userSpaceOnUse" x1="1380" x2="1649" y1="0" y2="0"><stop offset="0.0000" stop-color="#000dff"/><stop offset="0.1747" stop-color="#0002ff"/><stop offset="1.0000" stop-color="#c000ff"/></linearGradient><linearGradient id="cg200" gradientUnits="userSpaceOnUse" x1="1381" x2="1647" y1="0" y2="0"><stop offset="0.0000" stop-color="#000cff"/><stop offset="0.1729" stop-color="#0002ff"/><stop offset="1.0000" stop-color="#bd00ff"/></linearGradient><linearGradient id="cg201" gradientUnits="userSpaceOnUse" x1="1383" x2="1645" y1="0" y2="0"><stop offset="0.0000" stop-color="#000bff"/><stop offset="0.1718" stop-color="#0101ff"/><stop offset="1.0000" stop-color="#ba00ff"/></linearGradient><linearGradient id="cg202" gradientUnits="userSpaceOnUse" x1="1384" x2="1644" y1="0" y2="0"><stop offset="0.0000" stop-color="#000bff"/><stop offset="0.1692" stop-color="#0001ff"/><stop offset="1.0000" stop-color="#b700ff"/></linearGradient><linearGradient id="cg203" gradientUnits="userSpaceOnUse" x1="1385" x2="1642" y1="0" y2="0"><stop offset="0.0000" stop-color="#000aff"/><stop offset="0.1673" stop-color="#0000ff"/><stop offset="1.0000" stop-color="#b400ff"/></linearGradient><linearGradient id="cg204" gradientUnits="userSpaceOnUse" x1="1387" x2="1640" y1="0" y2="0"><stop offset="0.0000" stop-color="#0009ff"/><stop offset="0.1660" stop-color="#0100ff"/><stop offset="1.0000" stop-color="#b100ff"/></linearGradient><linearGradient id="cg205" gradientUnits="userSpaceOnUse" x1="1388" x2="1638" y1="0" y2="0"><stop offset="0.0000" stop-color="#0008ff"/><stop offset="0.1640" stop-color="#0000ff"/><stop offset="1.0000" stop-color="#ae00ff"/></linearGradient><linearGradient id="cg206" gradientUnits="userSpaceOnUse" x1="1389" x2="1637" y1="0" y2="0"><stop offset="0.0000" stop-color="#0008ff"/><stop offset="0.1613" stop-color="#0000ff"/><stop offset="1.0000" stop-color="#ac00ff"/></linearGradient><linearGradient id="cg207" gradientUnits="userSpaceOnUse" x1="1391" x2="1635" y1="0" y2="0"><stop offset="0.0000" stop-color="#0007ff"/><stop offset="0.1557" stop-color="#0000ff"/><stop offset="1.0000" stop-color="#a900ff"/></linearGradient><linearGradient id="cg208" gradientUnits="userSpaceOnUse" x1="1392" x2="1633" y1="0" y2="0"><stop offset="0.0000" stop-color="#0006ff"/><stop offset="0.1577" stop-color="#0100ff"/><stop offset="1.0000" stop-color="#a600ff"/></linearGradient><linearGradient id="cg209" gradientUnits="userSpaceOnUse" x1="1394" x2="1631" y1="0" y2="0"><stop offset="0.0000" stop-color="#0005ff"/><stop offset="0.1519" stop-color="#0000ff"/><stop offset="1.0000" stop-color="#a400ff"/></linearGradient><linearGradient id="cg210" gradientUnits="userSpaceOnUse" x1="1395" x2="1629" y1="0" y2="0"><stop offset="0.0000" stop-color="#0005ff"/><stop offset="0.1496" stop-color="#0000ff"/><stop offset="1.0000" stop-color="#a100ff"/></linearGradient><linearGradient id="cg211" gradientUnits="userSpaceOnUse" x1="1397" x2="1628" y1="0" y2="0"><stop offset="0.0000" stop-color="#0004ff"/><stop offset="0.1472" stop-color="#0100ff"/><stop offset="1.0000" stop-color="#9f00ff"/></linearGradient><linearGradient id="cg212" gradientUnits="userSpaceOnUse" x1="1398" x2="1626" y1="0" y2="0"><stop offset="0.0000" stop-color="#0003ff"/><stop offset="0.1447" stop-color="#0000ff"/><stop offset="1.0000" stop-color="#9c00ff"/></linearGradient><linearGradient id="cg213" gradientUnits="userSpaceOnUse" x1="1399" x2="1624" y1="0" y2="0"><stop offset="0.0000" stop-color="#0003ff"/><stop offset="0.1422" stop-color="#0000ff"/><stop offset="1.0000" stop-color="#9900ff"/></linearGradient><linearGradient id="cg214" gradientUnits="userSpaceOnUse" x1="1401" x2="1622" y1="0" y2="0"><stop offset="0.0000" stop-color="#0002ff"/><stop offset="0.1403" stop-color="#0100ff"/><stop offset="1.0000" stop-color="#9700ff"/></linearGradient><linearGradient id="cg215" gradientUnits="userSpaceOnUse" x1="1402" x2="1621" y1="0" y2="0"><stop offset="0.0000" stop-color="#0001ff"/><stop offset="0.1370" stop-color="#0000ff"/><stop offset="1.0000" stop-color="#9500ff"/></linearGradient><linearGradient id="cg216" gradientUnits="userSpaceOnUse" x1="1404" x2="1619" y1="0" y2="0"><stop offset="0.0000" stop-color="#0000ff"/><stop offset="0.1302" stop-color="#0000ff"/><stop offset="1.0000" stop-color="#9200ff"/></linearGradient><linearGradient id="cg217" gradientUnits="userSpaceOnUse" x1="1405" x2="1617" y1="0" y2="0"><stop offset="0.0000" stop-color="#0000ff"/><stop offset="0.1274" stop-color="#0000ff"/><stop offset="1.0000" stop-color="#8f00ff"/></linearGradient><linearGradient id="cg218" gradientUnits="userSpaceOnUse" x1="1407" x2="1615" y1="0" y2="0"><stop offset="0.0000" stop-color="#0000ff"/><stop offset="0.1250" stop-color="#0100ff"/><stop offset="1.0000" stop-color="#8d00ff"/></linearGradient><linearGradient id="cg219" gradientUnits="userSpaceOnUse" x1="1408" x2="1613" y1="0" y2="0"><stop offset="0.0000" stop-color="#0000ff"/><stop offset="0.1220" stop-color="#0000ff"/><stop offset="1.0000" stop-color="#8a00ff"/></linearGradient><linearGradient id="cg220" gradientUnits="userSpaceOnUse" x1="1410" x2="1612" y1="0" y2="0"><stop offset="0.0000" stop-color="#0000ff"/><stop offset="0.1139" stop-color="#0000ff"/><stop offset="1.0000" stop-color="#8900ff"/></linearGradient><linearGradient id="cg221" gradientUnits="userSpaceOnUse" x1="1412" x2="1610" y1="0" y2="0"><stop offset="0.0000" stop-color="#0000ff"/><stop offset="0.1111" stop-color="#0100ff"/><stop offset="1.0000" stop-color="#8600ff"/></linearGradient><linearGradient id="cg222" gradientUnits="userSpaceOnUse" x1="1413" x2="1608" y1="0" y2="0"><stop offset="0.0000" stop-color="#0000ff"/><stop offset="0.1077" stop-color="#0000ff"/><stop offset="1.0000" stop-color="#8400ff"/></linearGradient><linearGradient id="cg223" gradientUnits="userSpaceOnUse" x1="1415" x2="1606" y1="0" y2="0"><stop offset="0.0000" stop-color="#0000ff"/><stop offset="0.0995" stop-color="#0000ff"/><stop offset="1.0000" stop-color="#8100ff"/></linearGradient><linearGradient id="cg224" gradientUnits="userSpaceOnUse" x1="1416" x2="1604" y1="0" y2="0"><stop offset="0.0000" stop-color="#0000ff"/><stop offset="0.1011" stop-color="#0100ff"/><stop offset="1.0000" stop-color="#7f00ff"/></linearGradient><linearGradient id="cg225" gradientUnits="userSpaceOnUse" x1="1418" x2="1603" y1="0" y2="0"><stop offset="0.0000" stop-color="#0000ff"/><stop offset="0.0919" stop-color="#0000ff"/><stop offset="1.0000" stop-color="#7d00ff"/></linearGradient><linearGradient id="cg226" gradientUnits="userSpaceOnUse" x1="1420" x2="1601" y1="0" y2="0"><stop offset="0.0000" stop-color="#0000ff"/><stop offset="0.0829" stop-color="#0000ff"/><stop offset="1.0000" stop-color="#7b00ff"/></linearGradient><linearGradient id="cg227" gradientUnits="userSpaceOnUse" x1="1421" x2="1599" y1="0" y2="0"><stop offset="0.0000" stop-color="#0000ff"/><stop offset="0.0787" stop-color="#0000ff"/><stop offset="1.0000" stop-color="#7800ff"/></linearGradient><linearGradient id="cg228" gradientUnits="userSpaceOnUse" x1="1423" x2="1597" y1="0" y2="0"><stop offset="0.0000" stop-color="#0000ff"/><stop offset="0.0747" stop-color="#0100ff"/><stop offset="1.0000" stop-color="#7600ff"/></linearGradient><linearGradient id="cg229" gradientUnits="userSpaceOnUse" x1="1425" x2="1596" y1="0" y2="0"><stop offset="0.0000" stop-color="#0000ff"/><stop offset="0.0643" stop-color="#0000ff"/><stop offset="1.0000" stop-color="#7500ff"/></linearGradient><linearGradient id="cg230" gradientUnits="userSpaceOnUse" x1="1426" x2="1594" y1="0" y2="0"><stop offset="0.0000" stop-color="#0000ff"/><stop offset="0.0595" stop-color="#0000ff"/><stop offset="1.0000" stop-color="#7200ff"/></linearGradient><linearGradient id="cg231" gradientUnits="userSpaceOnUse" x1="1428" x2="1592" y1="0" y2="0"><stop offset="0.0000" stop-color="#0000ff"/><stop offset="0.0549" stop-color="#0100ff"/><stop offset="1.0000" stop-color="#7000ff"/></linearGradient><linearGradient id="cg232" gradientUnits="userSpaceOnUse" x1="1430" x2="1590" y1="0" y2="0"><stop offset="0.0000" stop-color="#0000ff"/><stop offset="0.0437" stop-color="#0000ff"/><stop offset="1.0000" stop-color="#6e00ff"/></linearGradient><linearGradient id="cg233" gradientUnits="userSpaceOnUse" x1="1432" x2="1588" y1="0" y2="0"><stop offset="0.0000" stop-color="#0000ff"/><stop offset="1.0000" stop-color="#6c00ff"/></linearGradient><linearGradient id="cg234" gradientUnits="userSpaceOnUse" x1="1434" x2="1587" y1="0" y2="0"><stop offset="0.0000" stop-color="#0000ff"/><stop offset="1.0000" stop-color="#6a00ff"/></linearGradient><linearGradient id="cg235" gradientUnits="userSpaceOnUse" x1="1435" x2="1585" y1="0" y2="0"><stop offset="0.0000" stop-color="#0000ff"/><stop offset="1.0000" stop-color="#6800ff"/></linearGradient><linearGradient id="cg236" gradientUnits="userSpaceOnUse" x1="1437" x2="1583" y1="0" y2="0"><stop offset="0.0000" stop-color="#0000ff"/><stop offset="1.0000" stop-color="#6600ff"/></linearGradient><linearGradient id="cg237" gradientUnits="userSpaceOnUse" x1="1439" x2="1581" y1="0" y2="0"><stop offset="0.0000" stop-color="#0100ff"/><stop offset="1.0000" stop-color="#6400ff"/></linearGradient><linearGradient id="cg238" gradientUnits="userSpaceOnUse" x1="1441" x2="1580" y1="0" y2="0"><stop offset="0.0000" stop-color="#0200ff"/><stop offset="1.0000" stop-color="#6200ff"/></linearGradient><linearGradient id="cg239" gradientUnits="userSpaceOnUse" x1="1443" x2="1578" y1="0" y2="0"><stop offset="0.0000" stop-color="#0300ff"/><stop offset="1.0000" stop-color="#6000ff"/></linearGradient><linearGradient id="cg240" gradientUnits="userSpaceOnUse" x1="1445" x2="1576" y1="0" y2="0"><stop offset="0.0000" stop-color="#0400ff"/><stop offset="1.0000" stop-color="#5e00ff"/></linearGradient><linearGradient id="cg241" gradientUnits="userSpaceOnUse" x1="1447" x2="1574" y1="0" y2="0"><stop offset="0.0000" stop-color="#0500ff"/><stop offset="1.0000" stop-color="#5c00ff"/></linearGradient><linearGradient id="cg242" gradientUnits="userSpaceOnUse" x1="1449" x2="1572" y1="0" y2="0"><stop offset="0.0000" stop-color="#0600ff"/><stop offset="1.0000" stop-color="#5a00ff"/></linearGradient><linearGradient id="cg243" gradientUnits="userSpaceOnUse" x1="1451" x2="1571" y1="0" y2="0"><stop offset="0.0000" stop-color="#0700ff"/><stop offset="1.0000" stop-color="#5900ff"/></linearGradient><linearGradient id="cg244" gradientUnits="userSpaceOnUse" x1="1453" x2="1569" y1="0" y2="0"><stop offset="0.0000" stop-color="#0900ff"/><stop offset="1.0000" stop-color="#5700ff"/></linearGradient><linearGradient id="cg245" gradientUnits="userSpaceOnUse" x1="1455" x2="1567" y1="0" y2="0"><stop offset="0.0000" stop-color="#0a00ff"/><stop offset="1.0000" stop-color="#5500ff"/></linearGradient><linearGradient id="cg246" gradientUnits="userSpaceOnUse" x1="1458" x2="1565" y1="0" y2="0"><stop offset="0.0000" stop-color="#0b00ff"/><stop offset="1.0000" stop-color="#5300ff"/></linearGradient><linearGradient id="cg247" gradientUnits="userSpaceOnUse" x1="1460" x2="1563" y1="0" y2="0"><stop offset="0.0000" stop-color="#0c00ff"/><stop offset="1.0000" stop-color="#5100ff"/></linearGradient><linearGradient id="cg248" gradientUnits="userSpaceOnUse" x1="1462" x2="1562" y1="0" y2="0"><stop offset="0.0000" stop-color="#0d00ff"/><stop offset="1.0000" stop-color="#5000ff"/></linearGradient><linearGradient id="cg249" gradientUnits="userSpaceOnUse" x1="1464" x2="1560" y1="0" y2="0"><stop offset="0.0000" stop-color="#0e00ff"/><stop offset="1.0000" stop-color="#4e00ff"/></linearGradient><linearGradient id="cg250" gradientUnits="userSpaceOnUse" x1="1466" x2="1558" y1="0" y2="0"><stop offset="0.0000" stop-color="#1000ff"/><stop offset="1.0000" stop-color="#4c00ff"/></linearGradient><linearGradient id="cg251" gradientUnits="userSpaceOnUse" x1="1468" x2="1556" y1="0" y2="0"><stop offset="0.0000" stop-color="#1100ff"/><stop offset="1.0000" stop-color="#4a00ff"/></linearGradient><linearGradient id="cg252" gradientUnits="userSpaceOnUse" x1="1471" x2="1555" y1="0" y2="0"><stop offset="0.0000" stop-color="#1200ff"/><stop offset="1.0000" stop-color="#4900ff"/></linearGradient><linearGradient id="cg253" gradientUnits="userSpaceOnUse" x1="1473" x2="1553" y1="0" y2="0"><stop offset="0.0000" stop-color="#1300ff"/><stop offset="1.0000" stop-color="#4700ff"/></linearGradient><linearGradient id="cg254" gradientUnits="userSpaceOnUse" x1="1475" x2="1551" y1="0" y2="0"><stop offset="0.0000" stop-color="#1400ff"/><stop offset="1.0000" stop-color="#4500ff"/></linearGradient><linearGradient id="cg255" gradientUnits="userSpaceOnUse" x1="1477" x2="1549" y1="0" y2="0"><stop offset="0.0000" stop-color="#1500ff"/><stop offset="1.0000" stop-color="#4300ff"/></linearGradient><linearGradient id="cg256" gradientUnits="userSpaceOnUse" x1="1480" x2="1547" y1="0" y2="0"><stop offset="0.0000" stop-color="#1700ff"/><stop offset="1.0000" stop-color="#4200ff"/></linearGradient><linearGradient id="cg257" gradientUnits="userSpaceOnUse" x1="1482" x2="1546" y1="0" y2="0"><stop offset="0.0000" stop-color="#1800ff"/><stop offset="1.0000" stop-color="#4100ff"/></linearGradient><linearGradient id="cg258" gradientUnits="userSpaceOnUse" x1="1484" x2="1544" y1="0" y2="0"><stop offset="0.0000" stop-color="#1900ff"/><stop offset="1.0000" stop-color="#3f00ff"/></linearGradient><linearGradient id="cg259" gradientUnits="userSpaceOnUse" x1="1486" x2="1542" y1="0" y2="0"><stop offset="0.0000" stop-color="#1a00ff"/><stop offset="1.0000" stop-color="#3d00ff"/></linearGradient><linearGradient id="cg260" gradientUnits="userSpaceOnUse" x1="1488" x2="1540" y1="0" y2="0"><stop offset="0.0000" stop-color="#1b00ff"/><stop offset="1.0000" stop-color="#3b00ff"/></linearGradient><linearGradient id="cg261" gradientUnits="userSpaceOnUse" x1="1491" x2="1539" y1="0" y2="0"><stop offset="0.0000" stop-color="#1c00ff"/><stop offset="1.0000" stop-color="#3a00ff"/></linearGradient><linearGradient id="cg262" gradientUnits="userSpaceOnUse" x1="1493" x2="1537" y1="0" y2="0"><stop offset="0.0000" stop-color="#1d00ff"/><stop offset="1.0000" stop-color="#3900ff"/></linearGradient><linearGradient id="cg263" gradientUnits="userSpaceOnUse" x1="1495" x2="1535" y1="0" y2="0"><stop offset="0.0000" stop-color="#1e00ff"/><stop offset="1.0000" stop-color="#3700ff"/></linearGradient><linearGradient id="cg264" gradientUnits="userSpaceOnUse" x1="1497" x2="1533" y1="0" y2="0"><stop offset="0.0000" stop-color="#1f00ff"/><stop offset="1.0000" stop-color="#3500ff"/></linearGradient><linearGradient id="cg265" gradientUnits="userSpaceOnUse" x1="1499" x2="1531" y1="0" y2="0"><stop offset="0.0000" stop-color="#2000ff"/><stop offset="1.0000" stop-color="#3400ff"/></linearGradient><linearGradient id="cg266" gradientUnits="userSpaceOnUse" x1="1501" x2="1530" y1="0" y2="0"><stop offset="0.0000" stop-color="#2100ff"/><stop offset="1.0000" stop-color="#3300ff"/></linearGradient><linearGradient id="cg267" gradientUnits="userSpaceOnUse" x1="1504" x2="1528" y1="0" y2="0"><stop offset="0.0000" stop-color="#2200ff"/><stop offset="1.0000" stop-color="#3100ff"/></linearGradient><linearGradient id="cg268" gradientUnits="userSpaceOnUse" x1="1506" x2="1526" y1="0" y2="0"><stop offset="0.0000" stop-color="#2300ff"/><stop offset="1.0000" stop-color="#2f00ff"/></linearGradient><linearGradient id="cg269" gradientUnits="userSpaceOnUse" x1="1508" x2="1524" y1="0" y2="0"><stop offset="0.0000" stop-color="#2400ff"/><stop offset="1.0000" stop-color="#2e00ff"/></linearGradient><linearGradient id="cg270" gradientUnits="userSpaceOnUse" x1="1511" x2="1522" y1="0" y2="0"><stop offset="0.0000" stop-color="#2600ff"/><stop offset="1.0000" stop-color="#2c00ff"/></linearGradient><linearGradient id="cg271" gradientUnits="userSpaceOnUse" x1="1514" x2="1521" y1="0" y2="0"><stop offset="0.0000" stop-color="#2700ff"/><stop offset="1.0000" stop-color="#2b00ff"/></linearGradient><linearGradient id="ig0" gradientUnits="userSpaceOnUse" x1="1677" x2="1902" y1="0" y2="0"><stop offset="0.0000" stop-color="#b0ff00"/><stop offset="0.7956" stop-color="#ffff00"/><stop offset="1.0000" stop-color="#ffeb00"/></linearGradient><linearGradient id="ig1" gradientUnits="userSpaceOnUse" x1="1677" x2="1902" y1="0" y2="0"><stop offset="0.0000" stop-color="#b1ff00"/><stop offset="0.7822" stop-color="#ffff00"/><stop offset="1.0000" stop-color="#ffe900"/></linearGradient><linearGradient id="ig2" gradientUnits="userSpaceOnUse" x1="1677" x2="1902" y1="0" y2="0"><stop offset="0.0000" stop-color="#b3ff00"/><stop offset="0.7644" stop-color="#ffff00"/><stop offset="1.0000" stop-color="#ffe800"/></linearGradient><linearGradient id="ig3" gradientUnits="userSpaceOnUse" x1="1677" x2="1902" y1="0" y2="0"><stop offset="0.0000" stop-color="#b4ff00"/><stop offset="0.7511" stop-color="#ffff00"/><stop offset="1.0000" stop-color="#ffe700"/></linearGradient><linearGradient id="ig4" gradientUnits="userSpaceOnUse" x1="1677" x2="1902" y1="0" y2="0"><stop offset="0.0000" stop-color="#b5ff00"/><stop offset="0.7378" stop-color="#ffff00"/><stop offset="1.0000" stop-color="#ffe500"/></linearGradient><linearGradient id="ig5" gradientUnits="userSpaceOnUse" x1="1677" x2="1902" y1="0" y2="0"><stop offset="0.0000" stop-color="#b6ff01"/><stop offset="0.7244" stop-color="#ffff00"/><stop offset="1.0000" stop-color="#ffe400"/></linearGradient><linearGradient id="ig6" gradientUnits="userSpaceOnUse" x1="1677" x2="1902" y1="0" y2="0"><stop offset="0.0000" stop-color="#b7ff02"/><stop offset="0.7067" stop-color="#ffff00"/><stop offset="1.0000" stop-color="#ffe300"/></linearGradient><linearGradient id="ig7" gradientUnits="userSpaceOnUse" x1="1677" x2="1902" y1="0" y2="0"><stop offset="0.0000" stop-color="#b9ff02"/><stop offset="0.6933" stop-color="#ffff00"/><stop offset="1.0000" stop-color="#ffe100"/></linearGradient><linearGradient id="ig8" gradientUnits="userSpaceOnUse" x1="1677" x2="1902" y1="0" y2="0"><stop offset="0.0000" stop-color="#baff03"/><stop offset="0.6800" stop-color="#ffff00"/><stop offset="1.0000" stop-color="#ffe000"/></linearGradient><linearGradient id="ig9" gradientUnits="userSpaceOnUse" x1="1677" x2="1902" y1="0" y2="0"><stop offset="0.0000" stop-color="#bbff03"/><stop offset="0.6667" stop-color="#ffff00"/><stop offset="1.0000" stop-color="#ffde00"/></linearGradient><linearGradient id="ig10" gradientUnits="userSpaceOnUse" x1="1677" x2="1902" y1="0" y2="0"><stop offset="0.0000" stop-color="#bcff04"/><stop offset="0.6489" stop-color="#ffff00"/><stop offset="1.0000" stop-color="#ffdd00"/></linearGradient><linearGradient id="ig11" gradientUnits="userSpaceOnUse" x1="1677" x2="1902" y1="0" y2="0"><stop offset="0.0000" stop-color="#beff05"/><stop offset="0.2222" stop-color="#d4ff00"/><stop offset="0.6356" stop-color="#ffff00"/><stop offset="1.0000" stop-color="#ffdc00"/></linearGradient><linearGradient id="ig12" gradientUnits="userSpaceOnUse" x1="1677" x2="1902" y1="0" y2="0"><stop offset="0.0000" stop-color="#bfff06"/><stop offset="0.2533" stop-color="#d8ff00"/><stop offset="0.6222" stop-color="#ffff00"/><stop offset="1.0000" stop-color="#ffda00"/></linearGradient><linearGradient id="ig13" gradientUnits="userSpaceOnUse" x1="1677" x2="1902" y1="0" y2="0"><stop offset="0.0000" stop-color="#c0ff06"/><stop offset="0.2844" stop-color="#ddff00"/><stop offset="0.6044" stop-color="#ffff00"/><stop offset="1.0000" stop-color="#ffd900"/></linearGradient><linearGradient id="ig14" gradientUnits="userSpaceOnUse" x1="1677" x2="1902" y1="0" y2="0"><stop offset="0.0000" stop-color="#c1ff07"/><stop offset="0.3156" stop-color="#e1ff00"/><stop offset="0.5911" stop-color="#ffff00"/><stop offset="1.0000" stop-color="#ffd800"/></linearGradient><linearGradient id="ig15" gradientUnits="userSpaceOnUse" x1="1677" x2="1902" y1="0" y2="0"><stop offset="0.0000" stop-color="#c3ff08"/><stop offset="0.3422" stop-color="#e6ff00"/><stop offset="0.5778" stop-color="#ffff00"/><stop offset="1.0000" stop-color="#ffd600"/></linearGradient><linearGradient id="ig16" gradientUnits="userSpaceOnUse" x1="1677" x2="1902" y1="0" y2="0"><stop offset="0.0000" stop-color="#c4ff08"/><stop offset="0.5644" stop-color="#ffff00"/><stop offset="1.0000" stop-color="#ffd500"/></linearGradient><linearGradient id="ig17" gradientUnits="userSpaceOnUse" x1="1677" x2="1902" y1="0" y2="0"><stop offset="0.0000" stop-color="#c5ff09"/><stop offset="0.5467" stop-color="#ffff00"/><stop offset="1.0000" stop-color="#ffd400"/></linearGradient><linearGradient id="ig18" gradientUnits="userSpaceOnUse" x1="1677" x2="1902" y1="0" y2="0"><stop offset="0.0000" stop-color="#c7ff0a"/><stop offset="0.5333" stop-color="#ffff00"/><stop offset="1.0000" stop-color="#ffd200"/></linearGradient><linearGradient id="ig19" gradientUnits="userSpaceOnUse" x1="1677" x2="1902" y1="0" y2="0"><stop offset="0.0000" stop-color="#c8ff0a"/><stop offset="0.5200" stop-color="#ffff00"/><stop offset="1.0000" stop-color="#ffd100"/></linearGradient><linearGradient id="ig20" gradientUnits="userSpaceOnUse" x1="1677" x2="1902" y1="0" y2="0"><stop offset="0.0000" stop-color="#c9ff0b"/><stop offset="0.5067" stop-color="#ffff00"/><stop offset="1.0000" stop-color="#ffd000"/></linearGradient><linearGradient id="ig21" gradientUnits="userSpaceOnUse" x1="1677" x2="1902" y1="0" y2="0"><stop offset="0.0000" stop-color="#cbff0c"/><stop offset="0.4889" stop-color="#ffff01"/><stop offset="1.0000" stop-color="#ffcf00"/></linearGradient><linearGradient id="ig22" gradientUnits="userSpaceOnUse" x1="1677" x2="1902" y1="0" y2="0"><stop offset="0.0000" stop-color="#ccff0d"/><stop offset="0.4756" stop-color="#ffff02"/><stop offset="1.0000" stop-color="#ffcd00"/></linearGradient><linearGradient id="ig23" gradientUnits="userSpaceOnUse" x1="1677" x2="1902" y1="0" y2="0"><stop offset="0.0000" stop-color="#cdff0d"/><stop offset="0.4622" stop-color="#ffff03"/><stop offset="1.0000" stop-color="#ffcc00"/></linearGradient><linearGradient id="ig24" gradientUnits="userSpaceOnUse" x1="1677" x2="1902" y1="0" y2="0"><stop offset="0.0000" stop-color="#cfff0e"/><stop offset="0.4444" stop-color="#ffff04"/><stop offset="1.0000" stop-color="#ffcb00"/></linearGradient><linearGradient id="ig25" gradientUnits="userSpaceOnUse" x1="1677" x2="1902" y1="0" y2="0"><stop offset="0.0000" stop-color="#d0ff0f"/><stop offset="0.4311" stop-color="#ffff05"/><stop offset="0.6489" stop-color="#ffe800"/><stop offset="1.0000" stop-color="#ffc900"/></linearGradient><linearGradient id="ig26" gradientUnits="userSpaceOnUse" x1="1677" x2="1902" y1="0" y2="0"><stop offset="0.0000" stop-color="#d2ff10"/><stop offset="0.4178" stop-color="#ffff06"/><stop offset="0.6800" stop-color="#ffe400"/><stop offset="1.0000" stop-color="#ffc800"/></linearGradient><linearGradient id="ig27" gradientUnits="userSpaceOnUse" x1="1677" x2="1902" y1="0" y2="0"><stop offset="0.0000" stop-color="#d3ff10"/><stop offset="0.4044" stop-color="#ffff07"/><stop offset="0.7111" stop-color="#ffdf00"/><stop offset="1.0000" stop-color="#ffc700"/></linearGradient><linearGradient id="ig28" gradientUnits="userSpaceOnUse" x1="1677" x2="1902" y1="0" y2="0"><stop offset="0.0000" stop-color="#d4ff11"/><stop offset="0.3867" stop-color="#ffff08"/><stop offset="0.7378" stop-color="#ffdb00"/><stop offset="1.0000" stop-color="#ffc600"/></linearGradient><linearGradient id="ig29" gradientUnits="userSpaceOnUse" x1="1677" x2="1902" y1="0" y2="0"><stop offset="0.0000" stop-color="#d6ff12"/><stop offset="0.3733" stop-color="#ffff0a"/><stop offset="0.7689" stop-color="#ffd700"/><stop offset="1.0000" stop-color="#ffc400"/></linearGradient><linearGradient id="ig30" gradientUnits="userSpaceOnUse" x1="1677" x2="1902" y1="0" y2="0"><stop offset="0.0000" stop-color="#d7ff13"/><stop offset="0.3600" stop-color="#ffff0b"/><stop offset="0.8000" stop-color="#ffd300"/><stop offset="1.0000" stop-color="#ffc300"/></linearGradient><linearGradient id="ig31" gradientUnits="userSpaceOnUse" x1="1677" x2="1902" y1="0" y2="0"><stop offset="0.0000" stop-color="#d9ff13"/><stop offset="0.3467" stop-color="#ffff0c"/><stop offset="0.6578" stop-color="#ffdf04"/><stop offset="1.0000" stop-color="#ffc200"/></linearGradient><linearGradient id="ig32" gradientUnits="userSpaceOnUse" x1="1677" x2="1902" y1="0" y2="0"><stop offset="0.0000" stop-color="#daff14"/><stop offset="0.3289" stop-color="#ffff0d"/><stop offset="0.6489" stop-color="#ffde05"/><stop offset="1.0000" stop-color="#ffc100"/></linearGradient><linearGradient id="ig33" gradientUnits="userSpaceOnUse" x1="1677" x2="1902" y1="0" y2="0"><stop offset="0.0000" stop-color="#dcff15"/><stop offset="0.3156" stop-color="#ffff0e"/><stop offset="0.6400" stop-color="#ffdd05"/><stop offset="1.0000" stop-color="#ffbf00"/></linearGradient><linearGradient id="ig34" gradientUnits="userSpaceOnUse" x1="1677" x2="1902" y1="0" y2="0"><stop offset="0.0000" stop-color="#ddff16"/><stop offset="0.3022" stop-color="#ffff0f"/><stop offset="0.6311" stop-color="#ffdd06"/><stop offset="1.0000" stop-color="#ffbe00"/></linearGradient><linearGradient id="ig35" gradientUnits="userSpaceOnUse" x1="1677" x2="1902" y1="0" y2="0"><stop offset="0.0000" stop-color="#dfff17"/><stop offset="0.2844" stop-color="#ffff10"/><stop offset="0.6267" stop-color="#ffdc07"/><stop offset="1.0000" stop-color="#ffbd00"/></linearGradient><linearGradient id="ig36" gradientUnits="userSpaceOnUse" x1="1677" x2="1902" y1="0" y2="0"><stop offset="0.0000" stop-color="#e0ff18"/><stop offset="0.2711" stop-color="#ffff11"/><stop offset="0.6133" stop-color="#ffdb08"/><stop offset="1.0000" stop-color="#ffbc00"/></linearGradient><linearGradient id="ig37" gradientUnits="userSpaceOnUse" x1="1677" x2="1902" y1="0" y2="0"><stop offset="0.0000" stop-color="#e2ff18"/><stop offset="0.2578" stop-color="#ffff13"/><stop offset="0.6089" stop-color="#ffda09"/><stop offset="1.0000" stop-color="#ffba00"/></linearGradient><linearGradient id="ig38" gradientUnits="userSpaceOnUse" x1="1677" x2="1902" y1="0" y2="0"><stop offset="0.0000" stop-color="#e3ff19"/><stop offset="0.2444" stop-color="#ffff14"/><stop offset="0.6000" stop-color="#ffda0a"/><stop offset="1.0000" stop-color="#ffb901"/></linearGradient><linearGradient id="ig39" gradientUnits="userSpaceOnUse" x1="1677" x2="1902" y1="0" y2="0"><stop offset="0.0000" stop-color="#e5ff1a"/><stop offset="0.2267" stop-color="#ffff15"/><stop offset="0.5911" stop-color="#ffd90b"/><stop offset="1.0000" stop-color="#ffb801"/></linearGradient><linearGradient id="ig40" gradientUnits="userSpaceOnUse" x1="1677" x2="1902" y1="0" y2="0"><stop offset="0.0000" stop-color="#e6ff1b"/><stop offset="0.2133" stop-color="#ffff16"/><stop offset="0.5822" stop-color="#ffd90b"/><stop offset="1.0000" stop-color="#ffb702"/></linearGradient><linearGradient id="ig41" gradientUnits="userSpaceOnUse" x1="1677" x2="1902" y1="0" y2="0"><stop offset="0.0000" stop-color="#e7ff1b"/><stop offset="0.2044" stop-color="#ffff17"/><stop offset="0.5778" stop-color="#ffd80c"/><stop offset="1.0000" stop-color="#ffb602"/></linearGradient><clipPath id="cinset"><rect x="1677.7" y="511.5" width="224.29999999999995" height="165.10000000000002"/></clipPath><linearGradient id="gLogo" x1="0" y1="0" x2="0" y2="1"><stop offset="0" stop-color="#f04a4a"/><stop offset="0.45" stop-color="#dc2020"/><stop offset="1" stop-color="#b80c0c"/></linearGradient>
<linearGradient id="gRainbow" gradientUnits="userSpaceOnUse" x1="142" x2="1920" y1="0" y2="0"><stop offset="0.000" stop-color="#ff0000"/><stop offset="0.021" stop-color="#ff0008"/><stop offset="0.052" stop-color="#ff003c"/><stop offset="0.104" stop-color="#ff0082"/><stop offset="0.174" stop-color="#ff00e6"/><stop offset="0.227" stop-color="#d200ff"/><stop offset="0.280" stop-color="#8228ff"/><stop offset="0.333" stop-color="#5028ff"/><stop offset="0.360" stop-color="#3c1eff"/><stop offset="0.395" stop-color="#0028ff"/><stop offset="0.430" stop-color="#0046e6"/><stop offset="0.466" stop-color="#006eaa"/><stop offset="0.501" stop-color="#008c82"/><stop offset="0.527" stop-color="#14aa50"/><stop offset="0.562" stop-color="#28dc14"/><stop offset="0.597" stop-color="#32f000"/><stop offset="0.641" stop-color="#5aff00"/><stop offset="0.715" stop-color="#96f500"/><stop offset="0.750" stop-color="#c8f000"/><stop offset="0.786" stop-color="#f5eb00"/><stop offset="0.812" stop-color="#ffe100"/><stop offset="0.838" stop-color="#ffbe00"/><stop offset="0.873" stop-color="#ff8c00"/><stop offset="0.908" stop-color="#ff5a00"/><stop offset="0.944" stop-color="#ff3200"/><stop offset="0.979" stop-color="#ff0f00"/><stop offset="1.000" stop-color="#ff0000"/></linearGradient>
<linearGradient id="gLogoK" x1="0" y1="0" x2="0" y2="1"><stop offset="0" stop-color="#cc1a1a"/><stop offset="1" stop-color="#e85454"/></linearGradient><linearGradient id="gBox" x1="0" y1="0" x2="0" y2="1"><stop offset="0" stop-color="#575757"/><stop offset="1" stop-color="#707070"/></linearGradient>
<linearGradient id="gBtn" x1="0" y1="0" x2="0" y2="1"><stop offset="0" stop-color="#929292"/><stop offset="1" stop-color="#5e5e5e"/></linearGradient>
<radialGradient id="gKnob" cx="0.5" cy="0.35" r="0.7"><stop offset="0" stop-color="#7a7a7a"/><stop offset="1" stop-color="#3e3e3e"/></radialGradient>
<linearGradient id="gKnobD" x1="0" y1="0" x2="0" y2="1"><stop offset="0" stop-color="#484848"/><stop offset="1" stop-color="#7e7e7e"/></linearGradient>
<linearGradient id="gTab" x1="0" y1="0" x2="0" y2="1"><stop offset="0" stop-color="#484848"/><stop offset="1" stop-color="#383838"/></linearGradient>
<linearGradient id="gDrop" x1="0" y1="0" x2="0" y2="1"><stop offset="0" stop-color="#7a7a7a"/><stop offset="0.5" stop-color="#626262"/><stop offset="1" stop-color="#4a4a4a"/></linearGradient><linearGradient id="gBarSh" x1="0" y1="0" x2="0" y2="1"><stop offset="0" stop-color="#fff" stop-opacity="0.3"/><stop offset="0.4" stop-color="#fff" stop-opacity="0"/><stop offset="1" stop-color="#000" stop-opacity="0.38"/></linearGradient><linearGradient id="gWhiteBar" x1="0" y1="0" x2="1" y2="0"><stop offset="0" stop-color="#fff"/><stop offset="0.5" stop-color="#f0f0f0"/><stop offset="1" stop-color="#8c8c8c"/></linearGradient><linearGradient id="gYel" x1="0" y1="0" x2="0" y2="1"><stop offset="0" stop-color="#d0d020"/><stop offset="0.5" stop-color="#c6c60c"/><stop offset="1" stop-color="#b0b006"/></linearGradient><linearGradient id="gR" x1="0" y1="0" x2="0" y2="1"><stop offset="0" stop-color="#ff4848"/><stop offset="0.18" stop-color="#ff0000"/><stop offset="0.55" stop-color="#ec0c0c"/><stop offset="1" stop-color="#740000"/></linearGradient>
<linearGradient id="gG" x1="0" y1="0" x2="0" y2="1"><stop offset="0" stop-color="#14a414"/><stop offset="1" stop-color="#086c08"/></linearGradient>
<linearGradient id="gB" x1="0" y1="0" x2="0" y2="1"><stop offset="0" stop-color="#5858ff"/><stop offset="0.2" stop-color="#0000ff"/><stop offset="0.6" stop-color="#0606dc"/><stop offset="1" stop-color="#00006c"/></linearGradient><linearGradient id="gTh" x1="0" y1="0" x2="0" y2="1"><stop offset="0" stop-color="#262626"/><stop offset="0.5" stop-color="#1a1a1a"/><stop offset="0.52" stop-color="#0e0e0e"/><stop offset="1" stop-color="#0a0a0a"/></linearGradient>
<linearGradient id="gStub" x1="0" y1="0" x2="1" y2="0"><stop offset="0" stop-color="#2c2c2c"/><stop offset="1" stop-color="#1c1c1c"/></linearGradient><linearGradient id="gStrip" x1="0" y1="0" x2="0" y2="1"><stop offset="0" stop-color="#3e3e3e"/><stop offset="1" stop-color="#1c1c1c"/></linearGradient>
<linearGradient id="gCell" x1="0" y1="0" x2="0" y2="1"><stop offset="0" stop-color="#868686"/><stop offset="1" stop-color="#5e5e5e"/></linearGradient>
<linearGradient id="gSel" x1="0" y1="0" x2="0" y2="1"><stop offset="0" stop-color="#1a1a1a"/><stop offset="1" stop-color="#3a3a3a"/></linearGradient><linearGradient id="gNav" x1="0" y1="0" x2="0" y2="1"><stop offset="0" stop-color="#b4b4b4"/><stop offset="1" stop-color="#8a8a8a"/></linearGradient><linearGradient id="gKn2" x1="0" y1="0" x2="0" y2="1"><stop offset="0" stop-color="#8e8e8e"/><stop offset="1" stop-color="#bcbcbc"/></linearGradient></defs>
<g id="chrome">
<rect x="0.00" y="17.00" width="1920.00" height="49.20" fill="#232323"/>
<rect x="0.00" y="0.00" width="1920.00" height="17.50" fill="#00b7c3"/>
<circle cx="7.3" cy="8.6" r="5.6" fill="#111"/><circle cx="7.3" cy="8.6" r="5.1" fill="none" stroke="#7a3fb0" stroke-width="0.9" stroke-dasharray="4 4"/><circle cx="7.3" cy="8.6" r="5.1" fill="none" stroke="#c8a020" stroke-width="0.9" stroke-dasharray="4 4" stroke-dashoffset="4"/>
<text x="7.3" y="10.4" font-size="4.6" fill="#fff" text-anchor="middle" font-weight="bold">CM</text>
<text x="17.6" y="12.3" font-size="9.6" fill="#04080a" textLength="256.5" lengthAdjust="spacingAndGlyphs" stroke="#04080a" stroke-width="0.22">CalMAN 2019 CalMAN Ultimate for Business 195 Days Remaining</text>
<line x1="1829.00" y1="8.00" x2="1837.00" y2="8.00" stroke="#0c2226" stroke-width="1"/>
<rect x="1862.5" y="5.8" width="6" height="6" fill="none" stroke="#0c2226" stroke-width="1"/><path d="M1864.5,5.8 V3.8 H1870.5 V9.8 H1868.5" fill="none" stroke="#0c2226" stroke-width="1"/>
<path d="M1896.8,3.8 L1904.6,11.6 M1904.6,3.8 L1896.8,11.6" stroke="#0c2226" stroke-width="1.1" fill="none"/>
<rect x="142.50" y="26.80" width="1777.50" height="3.60" fill="url(#gRainbow)"/>
<path d="M1,17.5 H136.7 V36 Q136.7,39.6 133,39.6 H4.6 Q1,39.6 1,36 Z" fill="url(#gLogo)" stroke="#8a1010" stroke-width="0.8"/>
<text x="10.0" y="35.8" font-size="21.6" fill="#fff" font-weight="bold" textLength="96.7" lengthAdjust="spacingAndGlyphs">CalMAN</text>
<circle cx="124.7" cy="28" r="7.6" fill="url(#gLogoK)"/><path d="M121.2,26.4 H128.2 L124.7,30.6Z" fill="#fff"/>
<path d="M0,43.7 H145.6 Q149.6,43.7 149.6,47.7 V1058 H0Z" fill="#575757"/>
<circle cx="13.8" cy="54.2" r="7.2" fill="url(#gKnobD)"/><circle cx="13.6" cy="53.6" r="2.6" fill="#9c9c9c"/>
<circle cx="135.5" cy="54.2" r="7.4" fill="url(#gKnobD)"/><path d="M137.5,50.4 V57.6 L133.2,54Z" fill="#f0f0f0"/>
<text x="6.7" y="75.8" font-size="9.9" fill="#f0f0f0" textLength="47.3" lengthAdjust="spacingAndGlyphs">SDR Toolkit</text>
<rect x="7.00" y="79.50" width="135.80" height="187.20" fill="#232323"/>
<path d="M17.2,91.6 h-3.2 l3.2,-3.2z" fill="#555"/>
<text x="21.7" y="92.8" font-size="8.6" fill="#f4f4f4" font-weight="bold" textLength="35.0" lengthAdjust="spacingAndGlyphs">Welcome</text>
<text x="31.7" y="105.0" font-size="8.5" fill="#f4f4f4" textLength="34.2" lengthAdjust="spacingAndGlyphs">Welcome</text>
<text x="31.7" y="115.5" font-size="8.5" fill="#f4f4f4" textLength="28.3" lengthAdjust="spacingAndGlyphs">Options</text>
<path d="M17.2,125.5 h-3.2 l3.2,-3.2z" fill="#555"/>
<text x="21.7" y="126.7" font-size="8.6" fill="#f4f4f4" font-weight="bold" textLength="30.5" lengthAdjust="spacingAndGlyphs">Analysis</text>
<text x="31.7" y="138.8" font-size="8.5" fill="#f4f4f4" textLength="56.2" lengthAdjust="spacingAndGlyphs">Dynamic Range</text>
<text x="31.7" y="149.5" font-size="8.5" fill="#f4f4f4" textLength="53.7" lengthAdjust="spacingAndGlyphs">Grayscale - 2pt</text>
<text x="31.7" y="160.5" font-size="8.5" fill="#f4f4f4" textLength="60.8" lengthAdjust="spacingAndGlyphs">Grayscale - Multi</text>
<text x="31.7" y="171.7" font-size="8.5" fill="#f4f4f4" textLength="46.2" lengthAdjust="spacingAndGlyphs">Color Gamut</text>
<text x="31.7" y="182.6" font-size="8.5" fill="#f4f4f4" textLength="25.5" lengthAdjust="spacingAndGlyphs">3D LUT</text>
<text x="31.7" y="193.8" font-size="8.5" fill="#f4f4f4" textLength="48.3" lengthAdjust="spacingAndGlyphs">ColorChecker</text>
<rect x="30.80" y="195.80" width="68.40" height="11.20" fill="#f4f4f4"/>
<text x="31.7" y="204.7" font-size="8.5" fill="#555" textLength="67.0" lengthAdjust="spacingAndGlyphs">Saturation Sweeps</text>
<text x="31.7" y="215.6" font-size="8.5" fill="#f4f4f4" textLength="69.2" lengthAdjust="spacingAndGlyphs">Luminance Sweeps</text>
<text x="31.7" y="226.7" font-size="8.5" fill="#f4f4f4" textLength="65.8" lengthAdjust="spacingAndGlyphs">Screen Uniformity</text>
<text x="31.7" y="237.8" font-size="8.5" fill="#f4f4f4" textLength="64.2" lengthAdjust="spacingAndGlyphs">Screen Angularity</text>
<text x="31.7" y="248.8" font-size="8.5" fill="#f4f4f4" textLength="55.8" lengthAdjust="spacingAndGlyphs">Screen Stability</text>
<text x="31.7" y="260.0" font-size="8.5" fill="#f4f4f4" textLength="72.5" lengthAdjust="spacingAndGlyphs">Spectral Power Dist.</text>
<path d="M150.8,66.2 V47 Q150.8,43.8 154,43.8 H193.3 V66.2Z" fill="url(#gTab)" stroke="#5e5e5e" stroke-width="0.8"/>
<path d="M194.2,66.2 V43.8 H215.6 Q218.8,43.8 218.8,47 V66.2Z" fill="url(#gTab)" stroke="#5e5e5e" stroke-width="0.8"/>
<text x="154.5" y="58.7" font-size="9" fill="#e4e4e4" textLength="35.0" lengthAdjust="spacingAndGlyphs">History 1</text>
<circle cx="205.6" cy="56.4" r="6.6" fill="#303030"/>
<text x="205.6" y="59.4" font-size="9" fill="#777" text-anchor="middle">+</text>
<rect x="150.00" y="66.20" width="1770.00" height="1000.00" fill="#323232"/>
<path d="M1550.9,66.2 V46.5 Q1550.9,43.5 1553.9,43.5 H1655.2 Q1658.2,43.5 1658.2,46.5 V66.2Z" fill="url(#gBox)"/><path d="M1550.9,66.2 V46.5 Q1550.9,43.5 1553.9,43.5 H1555.1000000000001 V66.2Z" fill="#22dc22"/>
<text x="1557.8" y="52.8" font-size="8.6" fill="#f2f2f2" textLength="48.9" lengthAdjust="spacingAndGlyphs">X-Rite i1Pro 2</text>
<text x="1557.8" y="63.1" font-size="8.6" fill="#f2f2f2" textLength="42.0" lengthAdjust="spacingAndGlyphs">Direct View</text>
<circle cx="1616.6" cy="54.4" r="6.7" fill="url(#gKnobD)"/><path d="M1612.6,54.0 h8 l-4,4.3z" fill="#f6f6f6"/>
<line x1="1631.40" y1="45.00" x2="1631.40" y2="66.20" stroke="#353535" stroke-width="1"/>
<circle cx="1646.9" cy="54.8" r="9.6" fill="#0a0aee" stroke="#f0f0f0" stroke-width="1"/>
<text x="1646.9" y="57.3" font-size="7" fill="#fff" text-anchor="middle" font-weight="bold" textLength="12.4" lengthAdjust="spacingAndGlyphs">236</text>
<path d="M1662.7,66.2 V46.5 Q1662.7,43.5 1665.7,43.5 H1756.7 Q1759.7,43.5 1759.7,46.5 V66.2Z" fill="url(#gBox)"/><path d="M1662.7,66.2 V46.5 Q1662.7,43.5 1665.7,43.5 H1666.9 V66.2Z" fill="#f0e800"/>
<text x="1669.0" y="52.8" font-size="8.6" fill="#f2f2f2" textLength="24.8" lengthAdjust="spacingAndGlyphs">Source</text>
<circle cx="1747.8" cy="54.4" r="6.7" fill="url(#gKnobD)"/><path d="M1743.8,54.0 h8 l-4,4.3z" fill="#f6f6f6"/>
<path d="M1764.6,66.2 V46.5 Q1764.6,43.5 1767.6,43.5 H1868.9 Q1871.9,43.5 1871.9,46.5 V66.2Z" fill="url(#gBox)"/><path d="M1764.6,66.2 V46.5 Q1764.6,43.5 1767.6,43.5 H1768.8 V66.2Z" fill="#f0e800"/>
<text x="1771.1" y="52.8" font-size="8.6" fill="#f2f2f2" textLength="78.6" lengthAdjust="spacingAndGlyphs">Direct Display Control</text>
<circle cx="1860" cy="54.4" r="6.7" fill="url(#gKnobD)"/><path d="M1856,54.0 h8 l-4,4.3z" fill="#f6f6f6"/>
<rect x="1874.5" y="43.8" width="24.4" height="20.9" rx="3" fill="url(#gBtn)" stroke="#c4c4c4" stroke-width="0.9"/>
<circle cx="1886.8999999999999" cy="54.300000000000004" r="7.1" fill="url(#gKnobD)"/>
<rect x="1886.05" y="49.00000000000001" width="1.7" height="10.6" fill="#e6e6e6" transform="rotate(0 1886.8999999999999 54.300000000000004)"/><rect x="1886.05" y="49.00000000000001" width="1.7" height="10.6" fill="#e6e6e6" transform="rotate(45 1886.8999999999999 54.300000000000004)"/><rect x="1886.05" y="49.00000000000001" width="1.7" height="10.6" fill="#e6e6e6" transform="rotate(90 1886.8999999999999 54.300000000000004)"/><rect x="1886.05" y="49.00000000000001" width="1.7" height="10.6" fill="#e6e6e6" transform="rotate(135 1886.8999999999999 54.300000000000004)"/><circle cx="1886.8999999999999" cy="54.300000000000004" r="3.7" fill="#e6e6e6"/><circle cx="1886.8999999999999" cy="54.300000000000004" r="1.9" fill="#6c6c6c"/>
<rect x="1900.2" y="43.8" width="24" height="20.9" rx="3" fill="url(#gBtn)" stroke="#c4c4c4" stroke-width="0.9"/>
<circle cx="1910.4" cy="54.3" r="7.1" fill="url(#gKnobD)"/><path d="M1912.2,50.2 V57.3 L1907.7,53.8Z" fill="#f6f6f6"/>
</g>
<g id="cie-panel">
<rect x="1183.00" y="82.50" width="737.00" height="645.50" fill="#1c1c1c"/>
<rect x="1190.00" y="90.30" width="722.00" height="629.50" fill="#323232"/>
<rect x="1229.90" y="117.00" width="678.80" height="569.70" fill="#242424"/>
<g clip-path="url(#cplot)"><g clip-path="url(#clocus)"><rect x="1264" y="129.00" width="58" height="2.60" fill="url(#cg0)"/><rect x="1254" y="131.00" width="92" height="2.60" fill="url(#cg1)"/><rect x="1249" y="133.00" width="116" height="2.60" fill="url(#cg2)"/><rect x="1245" y="135.00" width="138" height="2.60" fill="url(#cg3)"/><rect x="1242" y="137.00" width="158" height="2.60" fill="url(#cg4)"/><rect x="1240" y="139.00" width="176" height="2.60" fill="url(#cg5)"/><rect x="1239" y="141.00" width="194" height="2.60" fill="url(#cg6)"/><rect x="1237" y="143.00" width="212" height="2.60" fill="url(#cg7)"/><rect x="1236" y="145.00" width="229" height="2.60" fill="url(#cg8)"/><rect x="1235" y="147.00" width="246" height="2.60" fill="url(#cg9)"/><rect x="1234" y="149.00" width="263" height="2.60" fill="url(#cg10)"/><rect x="1233" y="151.00" width="280" height="2.60" fill="url(#cg11)"/><rect x="1232" y="153.00" width="297" height="2.60" fill="url(#cg12)"/><rect x="1232" y="155.00" width="313" height="2.60" fill="url(#cg13)"/><rect x="1231" y="157.00" width="330" height="2.60" fill="url(#cg14)"/><rect x="1231" y="159.00" width="346" height="2.60" fill="url(#cg15)"/><rect x="1231" y="161.00" width="362" height="2.60" fill="url(#cg16)"/><rect x="1230" y="163.00" width="379" height="2.60" fill="url(#cg17)"/><rect x="1230" y="165.00" width="394" height="2.60" fill="url(#cg18)"/><rect x="1230" y="167.00" width="410" height="2.60" fill="url(#cg19)"/><rect x="1230" y="169.00" width="426" height="2.60" fill="url(#cg20)"/><rect x="1230" y="171.00" width="442" height="2.60" fill="url(#cg21)"/><rect x="1230" y="173.00" width="458" height="2.60" fill="url(#cg22)"/><rect x="1230" y="175.00" width="474" height="2.60" fill="url(#cg23)"/><rect x="1230" y="177.00" width="490" height="2.60" fill="url(#cg24)"/><rect x="1230" y="179.00" width="506" height="2.60" fill="url(#cg25)"/><rect x="1230" y="181.00" width="522" height="2.60" fill="url(#cg26)"/><rect x="1230" y="183.00" width="538" height="2.60" fill="url(#cg27)"/><rect x="1230" y="185.00" width="554" height="2.60" fill="url(#cg28)"/><rect x="1231" y="187.00" width="569" height="2.60" fill="url(#cg29)"/><rect x="1231" y="189.00" width="585" height="2.60" fill="url(#cg30)"/><rect x="1231" y="191.00" width="600" height="2.60" fill="url(#cg31)"/><rect x="1231" y="193.00" width="616" height="2.60" fill="url(#cg32)"/><rect x="1232" y="195.00" width="631" height="2.60" fill="url(#cg33)"/><rect x="1232" y="197.00" width="647" height="2.60" fill="url(#cg34)"/><rect x="1232" y="199.00" width="663" height="2.60" fill="url(#cg35)"/><rect x="1233" y="201.00" width="676" height="2.60" fill="url(#cg36)"/><rect x="1233" y="203.00" width="676" height="2.60" fill="url(#cg37)"/><rect x="1233" y="205.00" width="676" height="2.60" fill="url(#cg38)"/><rect x="1234" y="207.00" width="675" height="2.60" fill="url(#cg39)"/><rect x="1234" y="209.00" width="675" height="2.60" fill="url(#cg40)"/><rect x="1234" y="211.00" width="675" height="2.60" fill="url(#cg41)"/><rect x="1235" y="213.00" width="674" height="2.60" fill="url(#cg42)"/><rect x="1235" y="215.00" width="674" height="2.60" fill="url(#cg43)"/><rect x="1236" y="217.00" width="673" height="2.60" fill="url(#cg44)"/><rect x="1236" y="219.00" width="673" height="2.60" fill="url(#cg45)"/><rect x="1237" y="221.00" width="672" height="2.60" fill="url(#cg46)"/><rect x="1237" y="223.00" width="672" height="2.60" fill="url(#cg47)"/><rect x="1238" y="225.00" width="671" height="2.60" fill="url(#cg48)"/><rect x="1238" y="227.00" width="671" height="2.60" fill="url(#cg49)"/><rect x="1239" y="229.00" width="670" height="2.60" fill="url(#cg50)"/><rect x="1239" y="231.00" width="670" height="2.60" fill="url(#cg51)"/><rect x="1240" y="233.00" width="669" height="2.60" fill="url(#cg52)"/><rect x="1240" y="235.00" width="669" height="2.60" fill="url(#cg53)"/><rect x="1241" y="237.00" width="667" height="2.60" fill="url(#cg54)"/><rect x="1241" y="239.00" width="665" height="2.60" fill="url(#cg55)"/><rect x="1242" y="241.00" width="662" height="2.60" fill="url(#cg56)"/><rect x="1242" y="243.00" width="660" height="2.60" fill="url(#cg57)"/><rect x="1243" y="245.00" width="657" height="2.60" fill="url(#cg58)"/><rect x="1244" y="247.00" width="655" height="2.60" fill="url(#cg59)"/><rect x="1244" y="249.00" width="653" height="2.60" fill="url(#cg60)"/><rect x="1245" y="251.00" width="650" height="2.60" fill="url(#cg61)"/><rect x="1245" y="253.00" width="648" height="2.60" fill="url(#cg62)"/><rect x="1246" y="255.00" width="646" height="2.60" fill="url(#cg63)"/><rect x="1247" y="257.00" width="643" height="2.60" fill="url(#cg64)"/><rect x="1247" y="259.00" width="641" height="2.60" fill="url(#cg65)"/><rect x="1248" y="261.00" width="638" height="2.60" fill="url(#cg66)"/><rect x="1249" y="263.00" width="635" height="2.60" fill="url(#cg67)"/><rect x="1249" y="265.00" width="634" height="2.60" fill="url(#cg68)"/><rect x="1250" y="267.00" width="631" height="2.60" fill="url(#cg69)"/><rect x="1251" y="269.00" width="628" height="2.60" fill="url(#cg70)"/><rect x="1251" y="271.00" width="626" height="2.60" fill="url(#cg71)"/><rect x="1252" y="273.00" width="623" height="2.60" fill="url(#cg72)"/><rect x="1253" y="275.00" width="621" height="2.60" fill="url(#cg73)"/><rect x="1253" y="277.00" width="619" height="2.60" fill="url(#cg74)"/><rect x="1254" y="279.00" width="616" height="2.60" fill="url(#cg75)"/><rect x="1255" y="281.00" width="613" height="2.60" fill="url(#cg76)"/><rect x="1255" y="283.00" width="612" height="2.60" fill="url(#cg77)"/><rect x="1256" y="285.00" width="609" height="2.60" fill="url(#cg78)"/><rect x="1257" y="287.00" width="606" height="2.60" fill="url(#cg79)"/><rect x="1258" y="289.00" width="603" height="2.60" fill="url(#cg80)"/><rect x="1258" y="291.00" width="601" height="2.60" fill="url(#cg81)"/><rect x="1259" y="293.00" width="599" height="2.60" fill="url(#cg82)"/><rect x="1260" y="295.00" width="596" height="2.60" fill="url(#cg83)"/><rect x="1261" y="297.00" width="593" height="2.60" fill="url(#cg84)"/><rect x="1261" y="299.00" width="591" height="2.60" fill="url(#cg85)"/><rect x="1262" y="301.00" width="589" height="2.60" fill="url(#cg86)"/><rect x="1263" y="303.00" width="586" height="2.60" fill="url(#cg87)"/><rect x="1264" y="305.00" width="583" height="2.60" fill="url(#cg88)"/><rect x="1264" y="307.00" width="581" height="2.60" fill="url(#cg89)"/><rect x="1265" y="309.00" width="578" height="2.60" fill="url(#cg90)"/><rect x="1266" y="311.00" width="576" height="2.60" fill="url(#cg91)"/><rect x="1267" y="313.00" width="573" height="2.60" fill="url(#cg92)"/><rect x="1267" y="315.00" width="571" height="2.60" fill="url(#cg93)"/><rect x="1268" y="317.00" width="568" height="2.60" fill="url(#cg94)"/><rect x="1269" y="319.00" width="565" height="2.60" fill="url(#cg95)"/><rect x="1270" y="321.00" width="563" height="2.60" fill="url(#cg96)"/><rect x="1271" y="323.00" width="560" height="2.60" fill="url(#cg97)"/><rect x="1271" y="325.00" width="558" height="2.60" fill="url(#cg98)"/><rect x="1272" y="327.00" width="555" height="2.60" fill="url(#cg99)"/><rect x="1273" y="329.00" width="553" height="2.60" fill="url(#cg100)"/><rect x="1274" y="331.00" width="550" height="2.60" fill="url(#cg101)"/><rect x="1275" y="333.00" width="547" height="2.60" fill="url(#cg102)"/><rect x="1276" y="335.00" width="544" height="2.60" fill="url(#cg103)"/><rect x="1276" y="337.00" width="542" height="2.60" fill="url(#cg104)"/><rect x="1277" y="339.00" width="540" height="2.60" fill="url(#cg105)"/><rect x="1278" y="341.00" width="537" height="2.60" fill="url(#cg106)"/><rect x="1279" y="343.00" width="534" height="2.60" fill="url(#cg107)"/><rect x="1280" y="345.00" width="531" height="2.60" fill="url(#cg108)"/><rect x="1281" y="347.00" width="529" height="2.60" fill="url(#cg109)"/><rect x="1282" y="349.00" width="526" height="2.60" fill="url(#cg110)"/><rect x="1283" y="351.00" width="523" height="2.60" fill="url(#cg111)"/><rect x="1283" y="353.00" width="521" height="2.60" fill="url(#cg112)"/><rect x="1284" y="355.00" width="518" height="2.60" fill="url(#cg113)"/><rect x="1285" y="357.00" width="516" height="2.60" fill="url(#cg114)"/><rect x="1286" y="359.00" width="513" height="2.60" fill="url(#cg115)"/><rect x="1287" y="361.00" width="510" height="2.60" fill="url(#cg116)"/><rect x="1288" y="363.00" width="507" height="2.60" fill="url(#cg117)"/><rect x="1289" y="365.00" width="504" height="2.60" fill="url(#cg118)"/><rect x="1290" y="367.00" width="502" height="2.60" fill="url(#cg119)"/><rect x="1291" y="369.00" width="499" height="2.60" fill="url(#cg120)"/><rect x="1292" y="371.00" width="496" height="2.60" fill="url(#cg121)"/><rect x="1293" y="373.00" width="493" height="2.60" fill="url(#cg122)"/><rect x="1294" y="375.00" width="491" height="2.60" fill="url(#cg123)"/><rect x="1295" y="377.00" width="488" height="2.60" fill="url(#cg124)"/><rect x="1296" y="379.00" width="485" height="2.60" fill="url(#cg125)"/><rect x="1297" y="381.00" width="482" height="2.60" fill="url(#cg126)"/><rect x="1298" y="383.00" width="479" height="2.60" fill="url(#cg127)"/><rect x="1299" y="385.00" width="477" height="2.60" fill="url(#cg128)"/><rect x="1300" y="387.00" width="474" height="2.60" fill="url(#cg129)"/><rect x="1301" y="389.00" width="471" height="2.60" fill="url(#cg130)"/><rect x="1302" y="391.00" width="468" height="2.60" fill="url(#cg131)"/><rect x="1303" y="393.00" width="466" height="2.60" fill="url(#cg132)"/><rect x="1304" y="395.00" width="463" height="2.60" fill="url(#cg133)"/><rect x="1305" y="397.00" width="460" height="2.60" fill="url(#cg134)"/><rect x="1306" y="399.00" width="457" height="2.60" fill="url(#cg135)"/><rect x="1307" y="401.00" width="454" height="2.60" fill="url(#cg136)"/><rect x="1308" y="403.00" width="452" height="2.60" fill="url(#cg137)"/><rect x="1309" y="405.00" width="449" height="2.60" fill="url(#cg138)"/><rect x="1310" y="407.00" width="446" height="2.60" fill="url(#cg139)"/><rect x="1311" y="409.00" width="443" height="2.60" fill="url(#cg140)"/><rect x="1312" y="411.00" width="440" height="2.60" fill="url(#cg141)"/><rect x="1313" y="413.00" width="438" height="2.60" fill="url(#cg142)"/><rect x="1314" y="415.00" width="435" height="2.60" fill="url(#cg143)"/><rect x="1315" y="417.00" width="432" height="2.60" fill="url(#cg144)"/><rect x="1316" y="419.00" width="429" height="2.60" fill="url(#cg145)"/><rect x="1317" y="421.00" width="427" height="2.60" fill="url(#cg146)"/><rect x="1318" y="423.00" width="424" height="2.60" fill="url(#cg147)"/><rect x="1319" y="425.00" width="421" height="2.60" fill="url(#cg148)"/><rect x="1320" y="427.00" width="418" height="2.60" fill="url(#cg149)"/><rect x="1322" y="429.00" width="414" height="2.60" fill="url(#cg150)"/><rect x="1323" y="431.00" width="412" height="2.60" fill="url(#cg151)"/><rect x="1324" y="433.00" width="409" height="2.60" fill="url(#cg152)"/><rect x="1325" y="435.00" width="406" height="2.60" fill="url(#cg153)"/><rect x="1326" y="437.00" width="403" height="2.60" fill="url(#cg154)"/><rect x="1327" y="439.00" width="401" height="2.60" fill="url(#cg155)"/><rect x="1328" y="441.00" width="398" height="2.60" fill="url(#cg156)"/><rect x="1329" y="443.00" width="395" height="2.60" fill="url(#cg157)"/><rect x="1330" y="445.00" width="392" height="2.60" fill="url(#cg158)"/><rect x="1331" y="447.00" width="389" height="2.60" fill="url(#cg159)"/><rect x="1333" y="449.00" width="386" height="2.60" fill="url(#cg160)"/><rect x="1334" y="451.00" width="383" height="2.60" fill="url(#cg161)"/><rect x="1335" y="453.00" width="380" height="2.60" fill="url(#cg162)"/><rect x="1336" y="455.00" width="377" height="2.60" fill="url(#cg163)"/><rect x="1337" y="457.00" width="374" height="2.60" fill="url(#cg164)"/><rect x="1338" y="459.00" width="372" height="2.60" fill="url(#cg165)"/><rect x="1339" y="461.00" width="369" height="2.60" fill="url(#cg166)"/><rect x="1340" y="463.00" width="366" height="2.60" fill="url(#cg167)"/><rect x="1342" y="465.00" width="362" height="2.60" fill="url(#cg168)"/><rect x="1343" y="467.00" width="360" height="2.60" fill="url(#cg169)"/><rect x="1344" y="469.00" width="357" height="2.60" fill="url(#cg170)"/><rect x="1345" y="471.00" width="354" height="2.60" fill="url(#cg171)"/><rect x="1346" y="473.00" width="351" height="2.60" fill="url(#cg172)"/><rect x="1347" y="475.00" width="348" height="2.60" fill="url(#cg173)"/><rect x="1348" y="477.00" width="346" height="2.60" fill="url(#cg174)"/><rect x="1350" y="479.00" width="342" height="2.60" fill="url(#cg175)"/><rect x="1351" y="481.00" width="339" height="2.60" fill="url(#cg176)"/><rect x="1352" y="483.00" width="336" height="2.60" fill="url(#cg177)"/><rect x="1353" y="485.00" width="333" height="2.60" fill="url(#cg178)"/><rect x="1354" y="487.00" width="331" height="2.60" fill="url(#cg179)"/><rect x="1356" y="489.00" width="327" height="2.60" fill="url(#cg180)"/><rect x="1357" y="491.00" width="324" height="2.60" fill="url(#cg181)"/><rect x="1358" y="493.00" width="321" height="2.60" fill="url(#cg182)"/><rect x="1359" y="495.00" width="319" height="2.60" fill="url(#cg183)"/><rect x="1361" y="497.00" width="315" height="2.60" fill="url(#cg184)"/><rect x="1362" y="499.00" width="312" height="2.60" fill="url(#cg185)"/><rect x="1363" y="501.00" width="309" height="2.60" fill="url(#cg186)"/><rect x="1364" y="503.00" width="306" height="2.60" fill="url(#cg187)"/><rect x="1366" y="505.00" width="303" height="2.60" fill="url(#cg188)"/><rect x="1367" y="507.00" width="300" height="2.60" fill="url(#cg189)"/><rect x="1368" y="509.00" width="297" height="2.60" fill="url(#cg190)"/><rect x="1369" y="511.00" width="294" height="2.60" fill="url(#cg191)"/><rect x="1371" y="513.00" width="291" height="2.60" fill="url(#cg192)"/><rect x="1372" y="515.00" width="288" height="2.60" fill="url(#cg193)"/><rect x="1373" y="517.00" width="285" height="2.60" fill="url(#cg194)"/><rect x="1375" y="519.00" width="281" height="2.60" fill="url(#cg195)"/><rect x="1376" y="521.00" width="278" height="2.60" fill="url(#cg196)"/><rect x="1377" y="523.00" width="276" height="2.60" fill="url(#cg197)"/><rect x="1378" y="525.00" width="273" height="2.60" fill="url(#cg198)"/><rect x="1380" y="527.00" width="269" height="2.60" fill="url(#cg199)"/><rect x="1381" y="529.00" width="266" height="2.60" fill="url(#cg200)"/><rect x="1383" y="531.00" width="262" height="2.60" fill="url(#cg201)"/><rect x="1384" y="533.00" width="260" height="2.60" fill="url(#cg202)"/><rect x="1385" y="535.00" width="257" height="2.60" fill="url(#cg203)"/><rect x="1387" y="537.00" width="253" height="2.60" fill="url(#cg204)"/><rect x="1388" y="539.00" width="250" height="2.60" fill="url(#cg205)"/><rect x="1389" y="541.00" width="248" height="2.60" fill="url(#cg206)"/><rect x="1391" y="543.00" width="244" height="2.60" fill="url(#cg207)"/><rect x="1392" y="545.00" width="241" height="2.60" fill="url(#cg208)"/><rect x="1394" y="547.00" width="237" height="2.60" fill="url(#cg209)"/><rect x="1395" y="549.00" width="234" height="2.60" fill="url(#cg210)"/><rect x="1397" y="551.00" width="231" height="2.60" fill="url(#cg211)"/><rect x="1398" y="553.00" width="228" height="2.60" fill="url(#cg212)"/><rect x="1399" y="555.00" width="225" height="2.60" fill="url(#cg213)"/><rect x="1401" y="557.00" width="221" height="2.60" fill="url(#cg214)"/><rect x="1402" y="559.00" width="219" height="2.60" fill="url(#cg215)"/><rect x="1404" y="561.00" width="215" height="2.60" fill="url(#cg216)"/><rect x="1405" y="563.00" width="212" height="2.60" fill="url(#cg217)"/><rect x="1407" y="565.00" width="208" height="2.60" fill="url(#cg218)"/><rect x="1408" y="567.00" width="205" height="2.60" fill="url(#cg219)"/><rect x="1410" y="569.00" width="202" height="2.60" fill="url(#cg220)"/><rect x="1412" y="571.00" width="198" height="2.60" fill="url(#cg221)"/><rect x="1413" y="573.00" width="195" height="2.60" fill="url(#cg222)"/><rect x="1415" y="575.00" width="191" height="2.60" fill="url(#cg223)"/><rect x="1416" y="577.00" width="188" height="2.60" fill="url(#cg224)"/><rect x="1418" y="579.00" width="185" height="2.60" fill="url(#cg225)"/><rect x="1420" y="581.00" width="181" height="2.60" fill="url(#cg226)"/><rect x="1421" y="583.00" width="178" height="2.60" fill="url(#cg227)"/><rect x="1423" y="585.00" width="174" height="2.60" fill="url(#cg228)"/><rect x="1425" y="587.00" width="171" height="2.60" fill="url(#cg229)"/><rect x="1426" y="589.00" width="168" height="2.60" fill="url(#cg230)"/><rect x="1428" y="591.00" width="164" height="2.60" fill="url(#cg231)"/><rect x="1430" y="593.00" width="160" height="2.60" fill="url(#cg232)"/><rect x="1432" y="595.00" width="156" height="2.60" fill="url(#cg233)"/><rect x="1434" y="597.00" width="153" height="2.60" fill="url(#cg234)"/><rect x="1435" y="599.00" width="150" height="2.60" fill="url(#cg235)"/><rect x="1437" y="601.00" width="146" height="2.60" fill="url(#cg236)"/><rect x="1439" y="603.00" width="142" height="2.60" fill="url(#cg237)"/><rect x="1441" y="605.00" width="139" height="2.60" fill="url(#cg238)"/><rect x="1443" y="607.00" width="135" height="2.60" fill="url(#cg239)"/><rect x="1445" y="609.00" width="131" height="2.60" fill="url(#cg240)"/><rect x="1447" y="611.00" width="127" height="2.60" fill="url(#cg241)"/><rect x="1449" y="613.00" width="123" height="2.60" fill="url(#cg242)"/><rect x="1451" y="615.00" width="120" height="2.60" fill="url(#cg243)"/><rect x="1453" y="617.00" width="116" height="2.60" fill="url(#cg244)"/><rect x="1455" y="619.00" width="112" height="2.60" fill="url(#cg245)"/><rect x="1458" y="621.00" width="107" height="2.60" fill="url(#cg246)"/><rect x="1460" y="623.00" width="103" height="2.60" fill="url(#cg247)"/><rect x="1462" y="625.00" width="100" height="2.60" fill="url(#cg248)"/><rect x="1464" y="627.00" width="96" height="2.60" fill="url(#cg249)"/><rect x="1466" y="629.00" width="92" height="2.60" fill="url(#cg250)"/><rect x="1468" y="631.00" width="88" height="2.60" fill="url(#cg251)"/><rect x="1471" y="633.00" width="84" height="2.60" fill="url(#cg252)"/><rect x="1473" y="635.00" width="80" height="2.60" fill="url(#cg253)"/><rect x="1475" y="637.00" width="76" height="2.60" fill="url(#cg254)"/><rect x="1477" y="639.00" width="72" height="2.60" fill="url(#cg255)"/><rect x="1480" y="641.00" width="67" height="2.60" fill="url(#cg256)"/><rect x="1482" y="643.00" width="64" height="2.60" fill="url(#cg257)"/><rect x="1484" y="645.00" width="60" height="2.60" fill="url(#cg258)"/><rect x="1486" y="647.00" width="56" height="2.60" fill="url(#cg259)"/><rect x="1488" y="649.00" width="52" height="2.60" fill="url(#cg260)"/><rect x="1491" y="651.00" width="48" height="2.60" fill="url(#cg261)"/><rect x="1493" y="653.00" width="44" height="2.60" fill="url(#cg262)"/><rect x="1495" y="655.00" width="40" height="2.60" fill="url(#cg263)"/><rect x="1497" y="657.00" width="36" height="2.60" fill="url(#cg264)"/><rect x="1499" y="659.00" width="32" height="2.60" fill="url(#cg265)"/><rect x="1501" y="661.00" width="29" height="2.60" fill="url(#cg266)"/><rect x="1504" y="663.00" width="24" height="2.60" fill="url(#cg267)"/><rect x="1506" y="665.00" width="20" height="2.60" fill="url(#cg268)"/><rect x="1508" y="667.00" width="16" height="2.60" fill="url(#cg269)"/><rect x="1511" y="669.00" width="11" height="2.60" fill="url(#cg270)"/><rect x="1514" y="671.00" width="7" height="2.60" fill="url(#cg271)"/>
<path d="M1224.9,112.0 H1913.7 V691.7 H1224.9Z M1738.7,190.5 L1371.0,152.9 L1428.0,536.9Z" fill="#000" fill-opacity="0.4" fill-rule="evenodd"/>
</g></g>
</g>
<g id="cie-axes">
<rect x="1229.9" y="117.0" width="678.8" height="569.7" fill="none" stroke="#a6a6a6" stroke-width="1.6"/>
<line x1="1223.30" y1="686.70" x2="1229.90" y2="686.70" stroke="#a6a6a6" stroke-width="1.6"/>
<text x="1222.4" y="694.0" font-size="15.6" fill="#d4d4d4" text-anchor="end" textLength="7.4" lengthAdjust="spacingAndGlyphs">0</text>
<line x1="1223.30" y1="639.38" x2="1229.90" y2="639.38" stroke="#a6a6a6" stroke-width="1.6"/>
<text x="1222.4" y="646.7" font-size="15.6" fill="#d4d4d4" text-anchor="end" textLength="29.4" lengthAdjust="spacingAndGlyphs">0.05</text>
<line x1="1223.30" y1="592.06" x2="1229.90" y2="592.06" stroke="#a6a6a6" stroke-width="1.6"/>
<text x="1222.4" y="599.4" font-size="15.6" fill="#d4d4d4" text-anchor="end" textLength="18.6" lengthAdjust="spacingAndGlyphs">0.1</text>
<line x1="1223.30" y1="544.74" x2="1229.90" y2="544.74" stroke="#a6a6a6" stroke-width="1.6"/>
<text x="1222.4" y="552.0" font-size="15.6" fill="#d4d4d4" text-anchor="end" textLength="29.4" lengthAdjust="spacingAndGlyphs">0.15</text>
<line x1="1223.30" y1="497.42" x2="1229.90" y2="497.42" stroke="#a6a6a6" stroke-width="1.6"/>
<text x="1222.4" y="504.7" font-size="15.6" fill="#d4d4d4" text-anchor="end" textLength="18.6" lengthAdjust="spacingAndGlyphs">0.2</text>
<line x1="1223.30" y1="450.10" x2="1229.90" y2="450.10" stroke="#a6a6a6" stroke-width="1.6"/>
<text x="1222.4" y="457.4" font-size="15.6" fill="#d4d4d4" text-anchor="end" textLength="29.4" lengthAdjust="spacingAndGlyphs">0.25</text>
<line x1="1223.30" y1="402.78" x2="1229.90" y2="402.78" stroke="#a6a6a6" stroke-width="1.6"/>
<text x="1222.4" y="410.1" font-size="15.6" fill="#d4d4d4" text-anchor="end" textLength="18.6" lengthAdjust="spacingAndGlyphs">0.3</text>
<line x1="1223.30" y1="355.46" x2="1229.90" y2="355.46" stroke="#a6a6a6" stroke-width="1.6"/>
<text x="1222.4" y="362.8" font-size="15.6" fill="#d4d4d4" text-anchor="end" textLength="29.4" lengthAdjust="spacingAndGlyphs">0.35</text>
<line x1="1223.30" y1="308.14" x2="1229.90" y2="308.14" stroke="#a6a6a6" stroke-width="1.6"/>
<text x="1222.4" y="315.4" font-size="15.6" fill="#d4d4d4" text-anchor="end" textLength="18.6" lengthAdjust="spacingAndGlyphs">0.4</text>
<line x1="1223.30" y1="260.82" x2="1229.90" y2="260.82" stroke="#a6a6a6" stroke-width="1.6"/>
<text x="1222.4" y="268.1" font-size="15.6" fill="#d4d4d4" text-anchor="end" textLength="29.4" lengthAdjust="spacingAndGlyphs">0.45</text>
<line x1="1223.30" y1="213.50" x2="1229.90" y2="213.50" stroke="#a6a6a6" stroke-width="1.6"/>
<text x="1222.4" y="220.8" font-size="15.6" fill="#d4d4d4" text-anchor="end" textLength="18.6" lengthAdjust="spacingAndGlyphs">0.5</text>
<line x1="1223.30" y1="166.18" x2="1229.90" y2="166.18" stroke="#a6a6a6" stroke-width="1.6"/>
<text x="1222.4" y="173.5" font-size="15.6" fill="#d4d4d4" text-anchor="end" textLength="29.4" lengthAdjust="spacingAndGlyphs">0.55</text>
<line x1="1229.90" y1="686.70" x2="1229.90" y2="693.60" stroke="#a6a6a6" stroke-width="1.6"/>
<text x="1229.9" y="711.8" font-size="15.6" fill="#d4d4d4" text-anchor="middle" textLength="7.4" lengthAdjust="spacingAndGlyphs">0</text>
<line x1="1286.45" y1="686.70" x2="1286.45" y2="693.60" stroke="#a6a6a6" stroke-width="1.6"/>
<text x="1286.5" y="711.8" font-size="15.6" fill="#d4d4d4" text-anchor="middle" textLength="29.4" lengthAdjust="spacingAndGlyphs">0.05</text>
<line x1="1343.00" y1="686.70" x2="1343.00" y2="693.60" stroke="#a6a6a6" stroke-width="1.6"/>
<text x="1343.0" y="711.8" font-size="15.6" fill="#d4d4d4" text-anchor="middle" textLength="18.6" lengthAdjust="spacingAndGlyphs">0.1</text>
<line x1="1399.55" y1="686.70" x2="1399.55" y2="693.60" stroke="#a6a6a6" stroke-width="1.6"/>
<text x="1399.6" y="711.8" font-size="15.6" fill="#d4d4d4" text-anchor="middle" textLength="29.4" lengthAdjust="spacingAndGlyphs">0.15</text>
<line x1="1456.10" y1="686.70" x2="1456.10" y2="693.60" stroke="#a6a6a6" stroke-width="1.6"/>
<text x="1456.1" y="711.8" font-size="15.6" fill="#d4d4d4" text-anchor="middle" textLength="18.6" lengthAdjust="spacingAndGlyphs">0.2</text>
<line x1="1512.65" y1="686.70" x2="1512.65" y2="693.60" stroke="#a6a6a6" stroke-width="1.6"/>
<text x="1512.7" y="711.8" font-size="15.6" fill="#d4d4d4" text-anchor="middle" textLength="29.4" lengthAdjust="spacingAndGlyphs">0.25</text>
<line x1="1569.20" y1="686.70" x2="1569.20" y2="693.60" stroke="#a6a6a6" stroke-width="1.6"/>
<text x="1569.2" y="711.8" font-size="15.6" fill="#d4d4d4" text-anchor="middle" textLength="18.6" lengthAdjust="spacingAndGlyphs">0.3</text>
<line x1="1625.75" y1="686.70" x2="1625.75" y2="693.60" stroke="#a6a6a6" stroke-width="1.6"/>
<text x="1625.8" y="711.8" font-size="15.6" fill="#d4d4d4" text-anchor="middle" textLength="29.4" lengthAdjust="spacingAndGlyphs">0.35</text>
<line x1="1682.30" y1="686.70" x2="1682.30" y2="693.60" stroke="#a6a6a6" stroke-width="1.6"/>
<text x="1682.3" y="711.8" font-size="15.6" fill="#d4d4d4" text-anchor="middle" textLength="18.6" lengthAdjust="spacingAndGlyphs">0.4</text>
<line x1="1738.85" y1="686.70" x2="1738.85" y2="693.60" stroke="#a6a6a6" stroke-width="1.6"/>
<text x="1738.9" y="711.8" font-size="15.6" fill="#d4d4d4" text-anchor="middle" textLength="29.4" lengthAdjust="spacingAndGlyphs">0.45</text>
<line x1="1795.40" y1="686.70" x2="1795.40" y2="693.60" stroke="#a6a6a6" stroke-width="1.6"/>
<text x="1795.4" y="711.8" font-size="15.6" fill="#d4d4d4" text-anchor="middle" textLength="18.6" lengthAdjust="spacingAndGlyphs">0.5</text>
<line x1="1851.95" y1="686.70" x2="1851.95" y2="693.60" stroke="#a6a6a6" stroke-width="1.6"/>
<text x="1852.0" y="711.8" font-size="15.6" fill="#d4d4d4" text-anchor="middle" textLength="29.4" lengthAdjust="spacingAndGlyphs">0.55</text>
<text x="1551.0" y="111.8" font-size="16.2" fill="#d4d4d4" text-anchor="middle" textLength="89.0" lengthAdjust="spacingAndGlyphs">CIE 1976 u'v'</text>
</g>
<g id="cie-markers">
<rect x="1497.7" y="225.1" width="14.2" height="14.2" fill="#bfa0a0" fill-opacity="0.5" stroke="#fff" stroke-width="1.8"/><rect x="1553.9" y="213.7" width="14.2" height="14.2" fill="#bf8282" fill-opacity="0.5" stroke="#fff" stroke-width="1.8"/><rect x="1605.7" y="206.3" width="14.2" height="14.2" fill="#bf6464" fill-opacity="0.5" stroke="#fff" stroke-width="1.8"/><rect x="1663.5" y="195.1" width="14.2" height="14.2" fill="#bf4444" fill-opacity="0.5" stroke="#fff" stroke-width="1.8"/><rect x="1731.3" y="182.9" width="14.2" height="14.2" fill="#bf0000" fill-opacity="0.5" stroke="#fff" stroke-width="1.8"/><rect x="1423.8" y="209.3" width="14.2" height="14.2" fill="#a0bfa0" fill-opacity="0.5" stroke="#fff" stroke-width="1.8"/><rect x="1405.1" y="190.3" width="14.2" height="14.2" fill="#82bf82" fill-opacity="0.5" stroke="#fff" stroke-width="1.8"/><rect x="1389.0" y="173.4" width="14.2" height="14.2" fill="#64bf64" fill-opacity="0.5" stroke="#fff" stroke-width="1.8"/><rect x="1376.4" y="159.0" width="14.2" height="14.2" fill="#44bf44" fill-opacity="0.5" stroke="#fff" stroke-width="1.8"/><rect x="1363.5" y="144.8" width="14.2" height="14.2" fill="#00bf00" fill-opacity="0.5" stroke="#fff" stroke-width="1.8"/><rect x="1442.6" y="269.3" width="14.2" height="14.2" fill="#a0a0bf" fill-opacity="0.5" stroke="#fff" stroke-width="1.8"/><rect x="1439.8" y="312.3" width="14.2" height="14.2" fill="#8282bf" fill-opacity="0.5" stroke="#fff" stroke-width="1.8"/><rect x="1435.5" y="363.9" width="14.2" height="14.2" fill="#6464bf" fill-opacity="0.5" stroke="#fff" stroke-width="1.8"/><rect x="1429.8" y="430.1" width="14.2" height="14.2" fill="#4444bf" fill-opacity="0.5" stroke="#fff" stroke-width="1.8"/><rect x="1421.1" y="529.1" width="14.2" height="14.2" fill="none" fill-opacity="0.5" stroke="#fff" stroke-width="1.8"/><rect x="1432.9" y="237.8" width="14.2" height="14.2" fill="#a0bfbf" fill-opacity="0.5" stroke="#fff" stroke-width="1.8"/><rect x="1419.7" y="239.0" width="14.2" height="14.2" fill="#82bfbf" fill-opacity="0.5" stroke="#fff" stroke-width="1.8"/><rect x="1405.1" y="242.7" width="14.2" height="14.2" fill="#64bfbf" fill-opacity="0.5" stroke="#fff" stroke-width="1.8"/><rect x="1392.0" y="244.2" width="14.2" height="14.2" fill="#44bfbf" fill-opacity="0.5" stroke="#fff" stroke-width="1.8"/><rect x="1379.2" y="247.5" width="14.2" height="14.2" fill="#00bfbf" fill-opacity="0.5" stroke="#fff" stroke-width="1.8"/><rect x="1463.9" y="253.6" width="14.2" height="14.2" fill="#bfa0bf" fill-opacity="0.5" stroke="#fff" stroke-width="1.8"/><rect x="1484.2" y="275.3" width="14.2" height="14.2" fill="#bf82bf" fill-opacity="0.5" stroke="#fff" stroke-width="1.8"/><rect x="1504.7" y="299.4" width="14.2" height="14.2" fill="#bf64bf" fill-opacity="0.5" stroke="#fff" stroke-width="1.8"/><rect x="1532.2" y="329.4" width="14.2" height="14.2" fill="#bf44bf" fill-opacity="0.5" stroke="#fff" stroke-width="1.8"/><rect x="1566.8" y="365.4" width="14.2" height="14.2" fill="#bf00bf" fill-opacity="0.5" stroke="#fff" stroke-width="1.8"/><rect x="1448.0" y="213.9" width="14.2" height="14.2" fill="#bfbfa0" fill-opacity="0.5" stroke="#fff" stroke-width="1.8"/><rect x="1449.1" y="197.0" width="14.2" height="14.2" fill="#bfbf82" fill-opacity="0.5" stroke="#fff" stroke-width="1.8"/><rect x="1451.3" y="181.9" width="14.2" height="14.2" fill="#bfbf64" fill-opacity="0.5" stroke="#fff" stroke-width="1.8"/><rect x="1452.1" y="168.3" width="14.2" height="14.2" fill="#bfbf44" fill-opacity="0.5" stroke="#fff" stroke-width="1.8"/><rect x="1452.9" y="153.5" width="14.2" height="14.2" fill="#bfbf00" fill-opacity="0.5" stroke="#fff" stroke-width="1.8"/><rect x="1445.4" y="235" width="14.2" height="14.2" fill="#f4f4f4" stroke="#000" stroke-width="1.9"/>
<circle cx="1501.7" cy="232.4" r="4.3" fill="#b7a8a8" stroke="#000" stroke-width="1.3"/><circle cx="1559.7" cy="222.8" r="4.3" fill="#b78a8a" stroke="#000" stroke-width="1.3"/><circle cx="1608.4" cy="212.0" r="4.3" fill="#b76c6c" stroke="#000" stroke-width="1.3"/><circle cx="1667.8" cy="200.8" r="4.3" fill="#b74c4c" stroke="#000" stroke-width="1.3"/><circle cx="1737.0" cy="191.2" r="4.3" fill="#b70808" stroke="#000" stroke-width="1.3"/><circle cx="1427.9" cy="216.5" r="4.3" fill="#a8b7a8" stroke="#000" stroke-width="1.3"/><circle cx="1409.3" cy="196.2" r="4.3" fill="#8ab78a" stroke="#000" stroke-width="1.3"/><circle cx="1395.1" cy="180.4" r="4.3" fill="#6cb76c" stroke="#000" stroke-width="1.3"/><circle cx="1382.1" cy="164.9" r="4.3" fill="#4cb74c" stroke="#000" stroke-width="1.3"/><circle cx="1368.9" cy="152.2" r="4.3" fill="#08b708" stroke="#000" stroke-width="1.3"/><circle cx="1448.4" cy="276.3" r="4.3" fill="#a8a8b7" stroke="#000" stroke-width="1.3"/><circle cx="1444.2" cy="319.0" r="4.3" fill="#8a8ab7" stroke="#000" stroke-width="1.3"/><circle cx="1439.6" cy="371.2" r="4.3" fill="#6c6cb7" stroke="#000" stroke-width="1.3"/><circle cx="1435.1" cy="435.8" r="4.3" fill="#4c4cb7" stroke="#000" stroke-width="1.3"/><circle cx="1434.0" cy="529.9" r="4.3" fill="#0808b7" stroke="#000" stroke-width="1.3"/><circle cx="1436.7" cy="243.1" r="4.3" fill="#a8b7b7" stroke="#000" stroke-width="1.3"/><circle cx="1423.8" cy="246.4" r="4.3" fill="#8ab7b7" stroke="#000" stroke-width="1.3"/><circle cx="1409.3" cy="248.0" r="4.3" fill="#6cb7b7" stroke="#000" stroke-width="1.3"/><circle cx="1397.6" cy="249.5" r="4.3" fill="#4cb7b7" stroke="#000" stroke-width="1.3"/><circle cx="1386.3" cy="252.8" r="4.3" fill="#08b7b7" stroke="#000" stroke-width="1.3"/><circle cx="1468.4" cy="260.5" r="4.3" fill="#b7a8b7" stroke="#000" stroke-width="1.3"/><circle cx="1488.8" cy="282.4" r="4.3" fill="#b78ab7" stroke="#000" stroke-width="1.3"/><circle cx="1510.5" cy="306.4" r="4.3" fill="#b76cb7" stroke="#000" stroke-width="1.3"/><circle cx="1536.4" cy="334.6" r="4.3" fill="#b74cb7" stroke="#000" stroke-width="1.3"/><circle cx="1572.4" cy="375.4" r="4.3" fill="#b708b7" stroke="#000" stroke-width="1.3"/><circle cx="1452.8" cy="221.2" r="4.3" fill="#b7b7a8" stroke="#000" stroke-width="1.3"/><circle cx="1453.9" cy="204.1" r="4.3" fill="#b7b78a" stroke="#000" stroke-width="1.3"/><circle cx="1453.9" cy="186.4" r="4.3" fill="#b7b76c" stroke="#000" stroke-width="1.3"/><circle cx="1455.4" cy="174.0" r="4.3" fill="#b7b74c" stroke="#000" stroke-width="1.3"/><circle cx="1456.9" cy="159.8" r="4.3" fill="#b7b708" stroke="#000" stroke-width="1.3"/><circle cx="1449.8" cy="241.9" r="4.3" fill="#fff" stroke="#000" stroke-width="1.3"/>
</g>
<g id="cie-inset">
<rect x="1674.30" y="508.30" width="230.20" height="171.30" fill="#404040"/>
<rect x="1676.70" y="510.50" width="226.30" height="167.10" fill="#8c8c8c"/>
<g clip-path="url(#cinset)"><rect x="1677" y="511.50" width="225" height="4.60" fill="url(#ig0)"/><rect x="1677" y="515.50" width="225" height="4.60" fill="url(#ig1)"/><rect x="1677" y="519.50" width="225" height="4.60" fill="url(#ig2)"/><rect x="1677" y="523.50" width="225" height="4.60" fill="url(#ig3)"/><rect x="1677" y="527.50" width="225" height="4.60" fill="url(#ig4)"/><rect x="1677" y="531.50" width="225" height="4.60" fill="url(#ig5)"/><rect x="1677" y="535.50" width="225" height="4.60" fill="url(#ig6)"/><rect x="1677" y="539.50" width="225" height="4.60" fill="url(#ig7)"/><rect x="1677" y="543.50" width="225" height="4.60" fill="url(#ig8)"/><rect x="1677" y="547.50" width="225" height="4.60" fill="url(#ig9)"/><rect x="1677" y="551.50" width="225" height="4.60" fill="url(#ig10)"/><rect x="1677" y="555.50" width="225" height="4.60" fill="url(#ig11)"/><rect x="1677" y="559.50" width="225" height="4.60" fill="url(#ig12)"/><rect x="1677" y="563.50" width="225" height="4.60" fill="url(#ig13)"/><rect x="1677" y="567.50" width="225" height="4.60" fill="url(#ig14)"/><rect x="1677" y="571.50" width="225" height="4.60" fill="url(#ig15)"/><rect x="1677" y="575.50" width="225" height="4.60" fill="url(#ig16)"/><rect x="1677" y="579.50" width="225" height="4.60" fill="url(#ig17)"/><rect x="1677" y="583.50" width="225" height="4.60" fill="url(#ig18)"/><rect x="1677" y="587.50" width="225" height="4.60" fill="url(#ig19)"/><rect x="1677" y="591.50" width="225" height="4.60" fill="url(#ig20)"/><rect x="1677" y="595.50" width="225" height="4.60" fill="url(#ig21)"/><rect x="1677" y="599.50" width="225" height="4.60" fill="url(#ig22)"/><rect x="1677" y="603.50" width="225" height="4.60" fill="url(#ig23)"/><rect x="1677" y="607.50" width="225" height="4.60" fill="url(#ig24)"/><rect x="1677" y="611.50" width="225" height="4.60" fill="url(#ig25)"/><rect x="1677" y="615.50" width="225" height="4.60" fill="url(#ig26)"/><rect x="1677" y="619.50" width="225" height="4.60" fill="url(#ig27)"/><rect x="1677" y="623.50" width="225" height="4.60" fill="url(#ig28)"/><rect x="1677" y="627.50" width="225" height="4.60" fill="url(#ig29)"/><rect x="1677" y="631.50" width="225" height="4.60" fill="url(#ig30)"/><rect x="1677" y="635.50" width="225" height="4.60" fill="url(#ig31)"/><rect x="1677" y="639.50" width="225" height="4.60" fill="url(#ig32)"/><rect x="1677" y="643.50" width="225" height="4.60" fill="url(#ig33)"/><rect x="1677" y="647.50" width="225" height="4.60" fill="url(#ig34)"/><rect x="1677" y="651.50" width="225" height="4.60" fill="url(#ig35)"/><rect x="1677" y="655.50" width="225" height="4.60" fill="url(#ig36)"/><rect x="1677" y="659.50" width="225" height="4.60" fill="url(#ig37)"/><rect x="1677" y="663.50" width="225" height="4.60" fill="url(#ig38)"/><rect x="1677" y="667.50" width="225" height="4.60" fill="url(#ig39)"/><rect x="1677" y="671.50" width="225" height="4.60" fill="url(#ig40)"/><rect x="1677" y="675.50" width="225" height="1.70" fill="url(#ig41)"/><path d="M1254.7,281.4 L2779.9,1172.9 L2779.9,281.4Z" fill="#000" fill-opacity="0.4"/></g>
<rect x="1781.4" y="585.9" width="14.2" height="14.2" fill="none" stroke="#fff" stroke-width="1.8"/>
<circle cx="1778.5" cy="579.3" r="4.3" fill="#c2c20a" stroke="#000" stroke-width="1.3"/>
</g>
<g id="main-header">
<text x="159.0" y="124.2" font-size="47" fill="#f2f2f2" textLength="351.8" lengthAdjust="spacingAndGlyphs">Saturation Sweeps</text>
<text x="743.3" y="115.0" font-size="22" fill="#f2f2f2" textLength="63.4" lengthAdjust="spacingAndGlyphs">Levels:</text>
<rect x="815.7" y="91" width="359.3" height="29.7" fill="url(#gDrop)" stroke="#2c2c2c" stroke-width="1"/>
<text x="821.0" y="115.0" font-size="18.6" fill="#f2f2f2" textLength="94.0" lengthAdjust="spacingAndGlyphs">20% Sweeps</text>
<path d="M1159.4,104 h9.4 l-4.7,5.8z" fill="#000"/>
<text x="282.0" y="185.8" font-size="20.6" fill="#f2f2f2" textLength="113.0" lengthAdjust="spacingAndGlyphs">dE Formula:</text>
<rect x="404.7" y="162.8" width="141.5" height="28.5" fill="url(#gDrop)" stroke="#2c2c2c" stroke-width="1"/>
<text x="409.2" y="185.8" font-size="19" fill="#f2f2f2" textLength="37.0" lengthAdjust="spacingAndGlyphs">2000</text>
<path d="M531.3,175 h9.5 l-4.75,5.8z" fill="#000"/>
</g>
<g id="chart-deltae">
<rect x="195.60" y="228.80" width="331.10" height="447.20" fill="#242424"/>
<text x="342.2" y="223.3" font-size="15.2" fill="#d4d4d4" text-anchor="middle" textLength="83.9" lengthAdjust="spacingAndGlyphs">DeltaE 2000</text>
<line x1="239.75" y1="228.80" x2="239.75" y2="676.00" stroke="#a6a6a6" stroke-width="1.4"/>
<line x1="283.89" y1="228.80" x2="283.89" y2="676.00" stroke="#a6a6a6" stroke-width="1.4"/>
<line x1="328.04" y1="228.80" x2="328.04" y2="676.00" stroke="#a6a6a6" stroke-width="1.4"/>
<line x1="372.19" y1="228.80" x2="372.19" y2="676.00" stroke="#a6a6a6" stroke-width="1.4"/>
<line x1="416.33" y1="228.80" x2="416.33" y2="676.00" stroke="#a6a6a6" stroke-width="1.4"/>
<line x1="460.48" y1="228.80" x2="460.48" y2="676.00" stroke="#a6a6a6" stroke-width="1.4"/>
<line x1="504.63" y1="228.80" x2="504.63" y2="676.00" stroke="#a6a6a6" stroke-width="1.4"/>
<path d="M195.6,676.0 V228.8 H526.7 V676.0" fill="none" stroke="#a6a6a6" stroke-width="1.6"/>
<line x1="189.60" y1="676.00" x2="526.70" y2="676.00" stroke="#a6a6a6" stroke-width="1.6"/>
<line x1="189.60" y1="228.80" x2="195.60" y2="228.80" stroke="#a6a6a6" stroke-width="1.5"/>
<line x1="189.60" y1="304.20" x2="195.60" y2="304.20" stroke="#a6a6a6" stroke-width="1.5"/>
<line x1="189.60" y1="378.80" x2="195.60" y2="378.80" stroke="#a6a6a6" stroke-width="1.5"/>
<line x1="189.60" y1="452.50" x2="195.60" y2="452.50" stroke="#a6a6a6" stroke-width="1.5"/>
<line x1="189.60" y1="527.00" x2="195.60" y2="527.00" stroke="#a6a6a6" stroke-width="1.5"/>
<line x1="189.60" y1="601.90" x2="195.60" y2="601.90" stroke="#a6a6a6" stroke-width="1.5"/>
<line x1="195.60" y1="676.00" x2="195.60" y2="682.80" stroke="#a6a6a6" stroke-width="1.5"/>
<text x="195.3" y="700.4" font-size="15.4" fill="#d4d4d4" text-anchor="middle" textLength="7.6" lengthAdjust="spacingAndGlyphs">0</text>
<line x1="239.75" y1="676.00" x2="239.75" y2="682.80" stroke="#a6a6a6" stroke-width="1.5"/>
<text x="239.7" y="700.4" font-size="15.4" fill="#d4d4d4" text-anchor="middle" textLength="7.6" lengthAdjust="spacingAndGlyphs">2</text>
<line x1="283.89" y1="676.00" x2="283.89" y2="682.80" stroke="#a6a6a6" stroke-width="1.5"/>
<text x="283.9" y="700.4" font-size="15.4" fill="#d4d4d4" text-anchor="middle" textLength="7.6" lengthAdjust="spacingAndGlyphs">4</text>
<line x1="328.04" y1="676.00" x2="328.04" y2="682.80" stroke="#a6a6a6" stroke-width="1.5"/>
<text x="328.0" y="700.4" font-size="15.4" fill="#d4d4d4" text-anchor="middle" textLength="7.6" lengthAdjust="spacingAndGlyphs">6</text>
<line x1="372.19" y1="676.00" x2="372.19" y2="682.80" stroke="#a6a6a6" stroke-width="1.5"/>
<text x="372.2" y="700.4" font-size="15.4" fill="#d4d4d4" text-anchor="middle" textLength="7.6" lengthAdjust="spacingAndGlyphs">8</text>
<line x1="416.33" y1="676.00" x2="416.33" y2="682.80" stroke="#a6a6a6" stroke-width="1.5"/>
<text x="416.3" y="700.4" font-size="15.4" fill="#d4d4d4" text-anchor="middle" textLength="15.6" lengthAdjust="spacingAndGlyphs">10</text>
<line x1="460.48" y1="676.00" x2="460.48" y2="682.80" stroke="#a6a6a6" stroke-width="1.5"/>
<text x="460.5" y="700.4" font-size="15.4" fill="#d4d4d4" text-anchor="middle" textLength="15.6" lengthAdjust="spacingAndGlyphs">12</text>
<line x1="504.63" y1="676.00" x2="504.63" y2="682.80" stroke="#a6a6a6" stroke-width="1.5"/>
<text x="504.6" y="700.4" font-size="15.4" fill="#d4d4d4" text-anchor="middle" textLength="15.6" lengthAdjust="spacingAndGlyphs">14</text>
<text x="194.9" y="272.9" font-size="15.6" fill="#d4d4d4" text-anchor="end" textLength="36.9" lengthAdjust="spacingAndGlyphs">100%</text>
<rect x="196.4" y="235.7" width="26.8" height="8.0" fill="#000"/>
<rect x="196.4" y="237.0" width="25.5" height="5.3" fill="#dc1a1a"/>
<rect x="196.4" y="237.0" width="25.5" height="5.3" fill="url(#gBarSh)"/>
<rect x="196.4" y="243.5" width="9.8" height="8.0" fill="#000"/>
<rect x="196.4" y="244.8" width="8.5" height="5.3" fill="#1ec81e"/>
<rect x="196.4" y="244.8" width="8.5" height="5.3" fill="url(#gBarSh)"/>
<rect x="196.4" y="251.4" width="13.7" height="8.0" fill="#000"/>
<rect x="196.4" y="252.7" width="12.4" height="5.3" fill="#1a1adc"/>
<rect x="196.4" y="252.7" width="12.4" height="5.3" fill="url(#gBarSh)"/>
<rect x="196.4" y="259.2" width="11.1" height="8.0" fill="#000"/>
<rect x="196.4" y="260.5" width="9.8" height="5.3" fill="#10c4c4"/>
<rect x="196.4" y="260.5" width="9.8" height="5.3" fill="url(#gBarSh)"/>
<rect x="196.4" y="267.0" width="12.6" height="8.0" fill="#000"/>
<rect x="196.4" y="268.3" width="11.3" height="5.3" fill="#dc1adc"/>
<rect x="196.4" y="268.3" width="11.3" height="5.3" fill="url(#gBarSh)"/>
<rect x="196.4" y="274.8" width="19.3" height="8.0" fill="#000"/>
<rect x="196.4" y="276.1" width="18.0" height="5.3" fill="#d2d20a"/>
<rect x="196.4" y="276.1" width="18.0" height="5.3" fill="url(#gBarSh)"/>
<text x="194.9" y="347.9" font-size="15.6" fill="#d4d4d4" text-anchor="end" textLength="29.2" lengthAdjust="spacingAndGlyphs">80%</text>
<rect x="196.4" y="310.6" width="14.0" height="8.0" fill="#000"/>
<rect x="196.4" y="311.9" width="12.7" height="5.3" fill="#d24646"/>
<rect x="196.4" y="311.9" width="12.7" height="5.3" fill="url(#gBarSh)"/>
<rect x="196.4" y="318.4" width="9.6" height="8.0" fill="#000"/>
<rect x="196.4" y="319.7" width="8.3" height="5.3" fill="#46c846"/>
<rect x="196.4" y="319.7" width="8.3" height="5.3" fill="url(#gBarSh)"/>
<rect x="196.4" y="326.3" width="7.3" height="8.0" fill="#000"/>
<rect x="196.4" y="327.6" width="6.0" height="5.3" fill="#4a4ad2"/>
<rect x="196.4" y="327.6" width="6.0" height="5.3" fill="url(#gBarSh)"/>
<rect x="196.4" y="334.1" width="17.9" height="8.0" fill="#000"/>
<rect x="196.4" y="335.4" width="16.6" height="5.3" fill="#5ccccc"/>
<rect x="196.4" y="335.4" width="16.6" height="5.3" fill="url(#gBarSh)"/>
<rect x="196.4" y="341.9" width="11.1" height="8.0" fill="#000"/>
<rect x="196.4" y="343.2" width="9.8" height="5.3" fill="#d252d2"/>
<rect x="196.4" y="343.2" width="9.8" height="5.3" fill="url(#gBarSh)"/>
<rect x="196.4" y="349.7" width="28.5" height="8.0" fill="#000"/>
<rect x="196.4" y="351.0" width="27.2" height="5.3" fill="#cccc46"/>
<rect x="196.4" y="351.0" width="27.2" height="5.3" fill="url(#gBarSh)"/>
<text x="194.9" y="422.0" font-size="15.6" fill="#d4d4d4" text-anchor="end" textLength="29.2" lengthAdjust="spacingAndGlyphs">60%</text>
<rect x="196.4" y="384.7" width="13.3" height="8.0" fill="#000"/>
<rect x="196.4" y="386.0" width="12.0" height="5.3" fill="#cd5c5c"/>
<rect x="196.4" y="386.0" width="12.0" height="5.3" fill="url(#gBarSh)"/>
<rect x="196.4" y="392.5" width="9.9" height="8.0" fill="#000"/>
<rect x="196.4" y="393.8" width="8.6" height="5.3" fill="#64c264"/>
<rect x="196.4" y="393.8" width="8.6" height="5.3" fill="url(#gBarSh)"/>
<rect x="196.4" y="400.4" width="13.3" height="8.0" fill="#000"/>
<rect x="196.4" y="401.7" width="12.0" height="5.3" fill="#6868cc"/>
<rect x="196.4" y="401.7" width="12.0" height="5.3" fill="url(#gBarSh)"/>
<rect x="196.4" y="408.2" width="21.5" height="8.0" fill="#000"/>
<rect x="196.4" y="409.5" width="20.2" height="5.3" fill="#80cccc"/>
<rect x="196.4" y="409.5" width="20.2" height="5.3" fill="url(#gBarSh)"/>
<rect x="196.4" y="416.0" width="14.4" height="8.0" fill="#000"/>
<rect x="196.4" y="417.3" width="13.1" height="5.3" fill="#cc70cc"/>
<rect x="196.4" y="417.3" width="13.1" height="5.3" fill="url(#gBarSh)"/>
<rect x="196.4" y="423.8" width="28.3" height="8.0" fill="#000"/>
<rect x="196.4" y="425.1" width="27.0" height="5.3" fill="#caca70"/>
<rect x="196.4" y="425.1" width="27.0" height="5.3" fill="url(#gBarSh)"/>
<text x="194.9" y="496.1" font-size="15.6" fill="#d4d4d4" text-anchor="end" textLength="29.2" lengthAdjust="spacingAndGlyphs">40%</text>
<rect x="196.4" y="460.0" width="13.3" height="8.0" fill="#000"/>
<rect x="196.4" y="461.3" width="12.0" height="5.3" fill="#cc7878"/>
<rect x="196.4" y="461.3" width="12.0" height="5.3" fill="url(#gBarSh)"/>
<rect x="196.4" y="467.8" width="15.7" height="8.0" fill="#000"/>
<rect x="196.4" y="469.1" width="14.4" height="5.3" fill="#88c688"/>
<rect x="196.4" y="469.1" width="14.4" height="5.3" fill="url(#gBarSh)"/>
<rect x="196.4" y="475.7" width="18.2" height="8.0" fill="#000"/>
<rect x="196.4" y="477.0" width="16.9" height="5.3" fill="#8888ce"/>
<rect x="196.4" y="477.0" width="16.9" height="5.3" fill="url(#gBarSh)"/>
<rect x="196.4" y="483.5" width="27.4" height="8.0" fill="#000"/>
<rect x="196.4" y="484.8" width="26.1" height="5.3" fill="#a0d0d0"/>
<rect x="196.4" y="484.8" width="26.1" height="5.3" fill="url(#gBarSh)"/>
<rect x="196.4" y="491.3" width="15.7" height="8.0" fill="#000"/>
<rect x="196.4" y="492.6" width="14.4" height="5.3" fill="#cc92cc"/>
<rect x="196.4" y="492.6" width="14.4" height="5.3" fill="url(#gBarSh)"/>
<rect x="196.4" y="499.1" width="28.3" height="8.0" fill="#000"/>
<rect x="196.4" y="500.4" width="27.0" height="5.3" fill="#cccc96"/>
<rect x="196.4" y="500.4" width="27.0" height="5.3" fill="url(#gBarSh)"/>
<text x="194.9" y="570.9" font-size="15.6" fill="#d4d4d4" text-anchor="end" textLength="29.2" lengthAdjust="spacingAndGlyphs">20%</text>
<rect x="196.4" y="533.9" width="19.5" height="8.0" fill="#000"/>
<rect x="196.4" y="535.2" width="18.2" height="5.3" fill="#cc9c9c"/>
<rect x="196.4" y="535.2" width="18.2" height="5.3" fill="url(#gBarSh)"/>
<rect x="196.4" y="541.7" width="16.4" height="8.0" fill="#000"/>
<rect x="196.4" y="543.0" width="15.1" height="5.3" fill="#a0c8a0"/>
<rect x="196.4" y="543.0" width="15.1" height="5.3" fill="url(#gBarSh)"/>
<rect x="196.4" y="549.6" width="25.9" height="8.0" fill="#000"/>
<rect x="196.4" y="550.9" width="24.6" height="5.3" fill="#a6a6d2"/>
<rect x="196.4" y="550.9" width="24.6" height="5.3" fill="url(#gBarSh)"/>
<rect x="196.4" y="557.4" width="34.1" height="8.0" fill="#000"/>
<rect x="196.4" y="558.7" width="32.8" height="5.3" fill="#b8d6d6"/>
<rect x="196.4" y="558.7" width="32.8" height="5.3" fill="url(#gBarSh)"/>
<rect x="196.4" y="565.2" width="23.7" height="8.0" fill="#000"/>
<rect x="196.4" y="566.5" width="22.4" height="5.3" fill="#ccaccc"/>
<rect x="196.4" y="566.5" width="22.4" height="5.3" fill="url(#gBarSh)"/>
<rect x="196.4" y="573.0" width="41.6" height="8.0" fill="#000"/>
<rect x="196.4" y="574.4" width="40.3" height="5.3" fill="#d0d0b2"/>
<rect x="196.4" y="574.4" width="40.3" height="5.3" fill="url(#gBarSh)"/>
<text x="194.9" y="645.4" font-size="15.6" fill="#d4d4d4" text-anchor="end" textLength="24.6" lengthAdjust="spacingAndGlyphs">100</text>
<rect x="196.4" y="655.1" width="86.6" height="8.0" fill="#000"/>
<rect x="196.4" y="656.4" width="85.3" height="5.3" fill="url(#gWhiteBar)"/>
</g>
<g id="chart-deltal"><rect x="582.70" y="166.70" width="153.60" height="327.10" fill="#242424"/><line x1="576.30" y1="166.70" x2="582.70" y2="166.70" stroke="#a6a6a6" stroke-width="1.5"/><text x="575.7" y="173.8" font-size="15.6" fill="#d4d4d4" text-anchor="end" textLength="15.4" lengthAdjust="spacingAndGlyphs">15</text><line x1="582.70" y1="221.10" x2="736.30" y2="221.10" stroke="#a6a6a6" stroke-width="1.4"/><line x1="576.30" y1="221.10" x2="582.70" y2="221.10" stroke="#a6a6a6" stroke-width="1.5"/><text x="575.7" y="227.5" font-size="15.6" fill="#d4d4d4" text-anchor="end" textLength="15.4" lengthAdjust="spacingAndGlyphs">10</text><line x1="582.70" y1="276.00" x2="736.30" y2="276.00" stroke="#a6a6a6" stroke-width="1.4"/><line x1="576.30" y1="276.00" x2="582.70" y2="276.00" stroke="#a6a6a6" stroke-width="1.5"/><text x="575.7" y="282.4" font-size="15.6" fill="#d4d4d4" text-anchor="end" textLength="7.6" lengthAdjust="spacingAndGlyphs">5</text><line x1="582.70" y1="331.30" x2="736.30" y2="331.30" stroke="#a6a6a6" stroke-width="1.4"/><line x1="576.30" y1="331.30" x2="582.70" y2="331.30" stroke="#a6a6a6" stroke-width="1.5"/><text x="575.7" y="337.7" font-size="15.6" fill="#d4d4d4" text-anchor="end" textLength="7.6" lengthAdjust="spacingAndGlyphs">0</text><line x1="582.70" y1="385.20" x2="736.30" y2="385.20" stroke="#a6a6a6" stroke-width="1.4"/><line x1="576.30" y1="385.20" x2="582.70" y2="385.20" stroke="#a6a6a6" stroke-width="1.5"/><text x="575.7" y="391.6" font-size="15.6" fill="#d4d4d4" text-anchor="end" textLength="12.4" lengthAdjust="spacingAndGlyphs">-5</text><line x1="582.70" y1="440.20" x2="736.30" y2="440.20" stroke="#a6a6a6" stroke-width="1.4"/><line x1="576.30" y1="440.20" x2="582.70" y2="440.20" stroke="#a6a6a6" stroke-width="1.5"/><text x="575.7" y="446.6" font-size="15.6" fill="#d4d4d4" text-anchor="end" textLength="20.2" lengthAdjust="spacingAndGlyphs">-10</text><line x1="576.30" y1="493.80" x2="582.70" y2="493.80" stroke="#a6a6a6" stroke-width="1.5"/><text x="575.7" y="500.2" font-size="15.6" fill="#d4d4d4" text-anchor="end" textLength="20.2" lengthAdjust="spacingAndGlyphs">-15</text><rect x="582.7" y="166.7" width="153.5999999999999" height="327.1" fill="none" stroke="#a6a6a6" stroke-width="1.6"/><line x1="582.70" y1="493.80" x2="582.70" y2="499.80" stroke="#a6a6a6" stroke-width="1.5"/><line x1="736.30" y1="493.80" x2="736.30" y2="499.80" stroke="#a6a6a6" stroke-width="1.5"/><text x="645.1" y="161.0" font-size="15.6" fill="#d4d4d4" text-anchor="middle" textLength="44.2" lengthAdjust="spacingAndGlyphs">DeltaL</text><text x="659.5" y="511.9" font-size="15.4" fill="#d4d4d4" text-anchor="middle" textLength="38.4" lengthAdjust="spacingAndGlyphs">100%</text><rect x="597.9" y="330.4" width="123.0" height="6.2" fill="#000"/><rect x="599.1" y="331.5" width="120.6" height="4.0" fill="url(#gYel)"/></g>
<g id="chart-deltac"><rect x="791.90" y="166.70" width="153.90" height="327.10" fill="#242424"/><line x1="785.50" y1="166.70" x2="791.90" y2="166.70" stroke="#a6a6a6" stroke-width="1.5"/><text x="784.9" y="173.8" font-size="15.6" fill="#d4d4d4" text-anchor="end" textLength="15.4" lengthAdjust="spacingAndGlyphs">15</text><line x1="791.90" y1="221.10" x2="945.80" y2="221.10" stroke="#a6a6a6" stroke-width="1.4"/><line x1="785.50" y1="221.10" x2="791.90" y2="221.10" stroke="#a6a6a6" stroke-width="1.5"/><text x="784.9" y="227.5" font-size="15.6" fill="#d4d4d4" text-anchor="end" textLength="15.4" lengthAdjust="spacingAndGlyphs">10</text><line x1="791.90" y1="276.00" x2="945.80" y2="276.00" stroke="#a6a6a6" stroke-width="1.4"/><line x1="785.50" y1="276.00" x2="791.90" y2="276.00" stroke="#a6a6a6" stroke-width="1.5"/><text x="784.9" y="282.4" font-size="15.6" fill="#d4d4d4" text-anchor="end" textLength="7.6" lengthAdjust="spacingAndGlyphs">5</text><line x1="791.90" y1="331.30" x2="945.80" y2="331.30" stroke="#a6a6a6" stroke-width="1.4"/><line x1="785.50" y1="331.30" x2="791.90" y2="331.30" stroke="#a6a6a6" stroke-width="1.5"/><text x="784.9" y="337.7" font-size="15.6" fill="#d4d4d4" text-anchor="end" textLength="7.6" lengthAdjust="spacingAndGlyphs">0</text><line x1="791.90" y1="385.20" x2="945.80" y2="385.20" stroke="#a6a6a6" stroke-width="1.4"/><line x1="785.50" y1="385.20" x2="791.90" y2="385.20" stroke="#a6a6a6" stroke-width="1.5"/><text x="784.9" y="391.6" font-size="15.6" fill="#d4d4d4" text-anchor="end" textLength="12.4" lengthAdjust="spacingAndGlyphs">-5</text><line x1="791.90" y1="440.20" x2="945.80" y2="440.20" stroke="#a6a6a6" stroke-width="1.4"/><line x1="785.50" y1="440.20" x2="791.90" y2="440.20" stroke="#a6a6a6" stroke-width="1.5"/><text x="784.9" y="446.6" font-size="15.6" fill="#d4d4d4" text-anchor="end" textLength="20.2" lengthAdjust="spacingAndGlyphs">-10</text><line x1="785.50" y1="493.80" x2="791.90" y2="493.80" stroke="#a6a6a6" stroke-width="1.5"/><text x="784.9" y="500.2" font-size="15.6" fill="#d4d4d4" text-anchor="end" textLength="20.2" lengthAdjust="spacingAndGlyphs">-15</text><rect x="791.9" y="166.7" width="153.89999999999998" height="327.1" fill="none" stroke="#a6a6a6" stroke-width="1.6"/><line x1="791.90" y1="493.80" x2="791.90" y2="499.80" stroke="#a6a6a6" stroke-width="1.5"/><line x1="945.80" y1="493.80" x2="945.80" y2="499.80" stroke="#a6a6a6" stroke-width="1.5"/><text x="854.6" y="161.0" font-size="15.6" fill="#d4d4d4" text-anchor="middle" textLength="45.8" lengthAdjust="spacingAndGlyphs">DeltaC</text><text x="868.8" y="511.9" font-size="15.4" fill="#d4d4d4" text-anchor="middle" textLength="38.4" lengthAdjust="spacingAndGlyphs">100%</text><rect x="807.1" y="316.9" width="123.3" height="14.1" fill="#000"/><rect x="808.3" y="318.0" width="120.9" height="11.9" fill="url(#gYel)"/></g>
<g id="chart-deltah"><rect x="1001.30" y="166.70" width="153.90" height="327.10" fill="#242424"/><line x1="994.90" y1="166.70" x2="1001.30" y2="166.70" stroke="#a6a6a6" stroke-width="1.5"/><text x="994.3" y="173.8" font-size="15.6" fill="#d4d4d4" text-anchor="end" textLength="15.4" lengthAdjust="spacingAndGlyphs">15</text><line x1="1001.30" y1="221.10" x2="1155.20" y2="221.10" stroke="#a6a6a6" stroke-width="1.4"/><line x1="994.90" y1="221.10" x2="1001.30" y2="221.10" stroke="#a6a6a6" stroke-width="1.5"/><text x="994.3" y="227.5" font-size="15.6" fill="#d4d4d4" text-anchor="end" textLength="15.4" lengthAdjust="spacingAndGlyphs">10</text><line x1="1001.30" y1="276.00" x2="1155.20" y2="276.00" stroke="#a6a6a6" stroke-width="1.4"/><line x1="994.90" y1="276.00" x2="1001.30" y2="276.00" stroke="#a6a6a6" stroke-width="1.5"/><text x="994.3" y="282.4" font-size="15.6" fill="#d4d4d4" text-anchor="end" textLength="7.6" lengthAdjust="spacingAndGlyphs">5</text><line x1="1001.30" y1="331.30" x2="1155.20" y2="331.30" stroke="#a6a6a6" stroke-width="1.4"/><line x1="994.90" y1="331.30" x2="1001.30" y2="331.30" stroke="#a6a6a6" stroke-width="1.5"/><text x="994.3" y="337.7" font-size="15.6" fill="#d4d4d4" text-anchor="end" textLength="7.6" lengthAdjust="spacingAndGlyphs">0</text><line x1="1001.30" y1="385.20" x2="1155.20" y2="385.20" stroke="#a6a6a6" stroke-width="1.4"/><line x1="994.90" y1="385.20" x2="1001.30" y2="385.20" stroke="#a6a6a6" stroke-width="1.5"/><text x="994.3" y="391.6" font-size="15.6" fill="#d4d4d4" text-anchor="end" textLength="12.4" lengthAdjust="spacingAndGlyphs">-5</text><line x1="1001.30" y1="440.20" x2="1155.20" y2="440.20" stroke="#a6a6a6" stroke-width="1.4"/><line x1="994.90" y1="440.20" x2="1001.30" y2="440.20" stroke="#a6a6a6" stroke-width="1.5"/><text x="994.3" y="446.6" font-size="15.6" fill="#d4d4d4" text-anchor="end" textLength="20.2" lengthAdjust="spacingAndGlyphs">-10</text><line x1="994.90" y1="493.80" x2="1001.30" y2="493.80" stroke="#a6a6a6" stroke-width="1.5"/><text x="994.3" y="500.2" font-size="15.6" fill="#d4d4d4" text-anchor="end" textLength="20.2" lengthAdjust="spacingAndGlyphs">-15</text><rect x="1001.3" y="166.7" width="153.9000000000001" height="327.1" fill="none" stroke="#a6a6a6" stroke-width="1.6"/><line x1="1001.30" y1="493.80" x2="1001.30" y2="499.80" stroke="#a6a6a6" stroke-width="1.5"/><line x1="1155.20" y1="493.80" x2="1155.20" y2="499.80" stroke="#a6a6a6" stroke-width="1.5"/><text x="1063.7" y="161.0" font-size="15.6" fill="#d4d4d4" text-anchor="middle" textLength="46.9" lengthAdjust="spacingAndGlyphs">DeltaH</text><text x="1078.2" y="511.9" font-size="15.4" fill="#d4d4d4" text-anchor="middle" textLength="38.4" lengthAdjust="spacingAndGlyphs">100%</text><rect x="1016.5" y="313.9" width="123.3" height="17.1" fill="#000"/><rect x="1017.7" y="315.0" width="120.9" height="14.9" fill="url(#gYel)"/></g>
<g id="swatches">
<rect x="547.40" y="523.50" width="629.00" height="188.50" fill="#000"/>
<rect x="569.80" y="532.00" width="105.60" height="153.00" fill="#f4f4f4"/>
<rect x="571.00" y="533.20" width="103.20" height="76.40" fill="#bcc0a2"/>
<rect x="571.00" y="608.80" width="103.20" height="75.00" fill="#c0c09e"/>
<text x="622.6" y="702.0" font-size="13.4" fill="#fff" text-anchor="middle" textLength="24.7" lengthAdjust="spacingAndGlyphs" stroke="#fff" stroke-width="0.25">20%</text>
<rect x="692.30" y="532.00" width="105.60" height="153.00" fill="#f4f4f4"/>
<rect x="693.50" y="533.20" width="103.20" height="76.40" fill="#bcbe84"/>
<rect x="693.50" y="608.80" width="103.20" height="75.00" fill="#c0be84"/>
<text x="745.1" y="702.0" font-size="13.4" fill="#fff" text-anchor="middle" textLength="24.7" lengthAdjust="spacingAndGlyphs" stroke="#fff" stroke-width="0.25">40%</text>
<rect x="814.90" y="532.00" width="105.60" height="153.00" fill="#f4f4f4"/>
<rect x="816.10" y="533.20" width="103.20" height="76.40" fill="#babe6c"/>
<rect x="816.10" y="608.80" width="103.20" height="75.00" fill="#bebc6c"/>
<text x="867.7" y="702.0" font-size="13.4" fill="#fff" text-anchor="middle" textLength="24.7" lengthAdjust="spacingAndGlyphs" stroke="#fff" stroke-width="0.25">60%</text>
<rect x="937.40" y="532.00" width="105.60" height="153.00" fill="#f4f4f4"/>
<rect x="938.60" y="533.20" width="103.20" height="76.40" fill="#b8bc4c"/>
<rect x="938.60" y="608.80" width="103.20" height="75.00" fill="#bebc4c"/>
<text x="990.2" y="702.0" font-size="13.4" fill="#fff" text-anchor="middle" textLength="24.7" lengthAdjust="spacingAndGlyphs" stroke="#fff" stroke-width="0.25">80%</text>
<rect x="1060.30" y="532.00" width="105.60" height="153.00" fill="#f4f4f4"/>
<rect x="1061.50" y="533.20" width="103.20" height="76.40" fill="#bebe05"/>
<rect x="1061.50" y="608.80" width="103.20" height="75.00" fill="#c0c008"/>
<text x="1113.1" y="702.0" font-size="13.4" fill="#fff" text-anchor="middle" textLength="31.5" lengthAdjust="spacingAndGlyphs" stroke="#fff" stroke-width="0.25">100%</text>
<text transform="translate(561.6,565) rotate(-90)" font-size="13.4" fill="#fff" stroke="#fff" stroke-width="0.25" text-anchor="middle" textLength="39.6" lengthAdjust="spacingAndGlyphs">Actual</text>
<text transform="translate(561.6,651.5) rotate(-90)" font-size="13.4" fill="#fff" stroke="#fff" stroke-width="0.25" text-anchor="middle" textLength="39" lengthAdjust="spacingAndGlyphs">Target</text>
</g>
<g id="stats">
<text x="226.0" y="764.3" font-size="34" fill="#f2f2f2" textLength="202.0" lengthAdjust="spacingAndGlyphs">Avg dE2000: 1</text>
<text x="199.5" y="811.4" font-size="34" fill="#f2f2f2" textLength="256.2" lengthAdjust="spacingAndGlyphs">Max dE2000: 3.95</text>
<text x="165.7" y="866.6" font-size="34" fill="#f2f2f2" textLength="232.1" lengthAdjust="spacingAndGlyphs">Current Reading</text>
<text x="165.7" y="908.4" font-size="29.2" fill="#f2f2f2" textLength="108.9" lengthAdjust="spacingAndGlyphs">x: 0.4169</text>
<text x="331.5" y="908.4" font-size="29.2" fill="#f2f2f2" textLength="109.2" lengthAdjust="spacingAndGlyphs">y: 0.5095</text>
<text x="165.7" y="956.2" font-size="29.2" fill="#f2f2f2" textLength="102.3" lengthAdjust="spacingAndGlyphs">fL: 41.87</text>
<text x="165.7" y="995.0" font-size="29.2" fill="#f2f2f2" textLength="168.5" lengthAdjust="spacingAndGlyphs">cd/m²: 143.46</text>
</g>
<g id="chart-rgb">
<rect x="516.40" y="772.30" width="278.10" height="208.70" fill="#242424"/>
<line x1="516.40" y1="813.20" x2="794.50" y2="813.20" stroke="#a6a6a6" stroke-width="1.4"/>
<line x1="510.00" y1="813.20" x2="516.40" y2="813.20" stroke="#a6a6a6" stroke-width="1.5"/>
<text x="509.4" y="819.8" font-size="15.6" fill="#d4d4d4" text-anchor="end" textLength="7.6" lengthAdjust="spacingAndGlyphs">5</text>
<line x1="516.40" y1="878.10" x2="794.50" y2="878.10" stroke="#a6a6a6" stroke-width="1.4"/>
<line x1="510.00" y1="878.10" x2="516.40" y2="878.10" stroke="#a6a6a6" stroke-width="1.5"/>
<text x="509.4" y="884.7" font-size="15.6" fill="#d4d4d4" text-anchor="end" textLength="7.6" lengthAdjust="spacingAndGlyphs">0</text>
<line x1="516.40" y1="943.70" x2="794.50" y2="943.70" stroke="#a6a6a6" stroke-width="1.4"/>
<line x1="510.00" y1="943.70" x2="516.40" y2="943.70" stroke="#a6a6a6" stroke-width="1.5"/>
<text x="509.4" y="950.3" font-size="15.6" fill="#d4d4d4" text-anchor="end" textLength="12.4" lengthAdjust="spacingAndGlyphs">-5</text>
<rect x="516.4" y="772.3" width="278.1" height="208.70000000000005" fill="none" stroke="#a6a6a6" stroke-width="1.6"/>
<line x1="516.40" y1="981.00" x2="516.40" y2="987.40" stroke="#a6a6a6" stroke-width="1.5"/>
<line x1="794.50" y1="981.00" x2="794.50" y2="987.40" stroke="#a6a6a6" stroke-width="1.5"/>
<text x="644.8" y="766.4" font-size="15.6" fill="#d4d4d4" text-anchor="middle" textLength="88.0" lengthAdjust="spacingAndGlyphs">RGB Balance</text>
<text x="655.0" y="1000.2" font-size="15.4" fill="#d4d4d4" text-anchor="middle" textLength="38.4" lengthAdjust="spacingAndGlyphs">100%</text>
<rect x="543.3000000000001" y="877.4" width="73.2" height="62.5" fill="#000"/>
<rect x="545.0" y="879" width="69.8" height="59.2" fill="url(#gR)"/>
<rect x="616.5" y="877.4" width="74.0" height="10.1" fill="#000"/>
<rect x="618.1999999999999" y="879" width="70.6" height="6.8" fill="url(#gG)"/>
<rect x="690.3000000000001" y="877.4" width="73.8" height="97.1" fill="#000"/>
<rect x="692.0" y="879" width="70.4" height="93.8" fill="url(#gB)"/>
</g>
<g id="table">
<rect x="816.70" y="737.50" width="765.00" height="32.20" fill="url(#gTh)"/>
<rect x="816.70" y="737.50" width="20.80" height="32.20" fill="#000"/>
<text x="1014.6" y="760.4" font-size="18" fill="#f4f4f4" textLength="41.5" lengthAdjust="spacingAndGlyphs" class="dj">20%</text>
<text x="1129.4" y="760.4" font-size="18" fill="#f4f4f4" textLength="41.5" lengthAdjust="spacingAndGlyphs" class="dj">40%</text>
<text x="1244.0" y="760.4" font-size="18" fill="#f4f4f4" textLength="41.5" lengthAdjust="spacingAndGlyphs" class="dj">60%</text>
<text x="1358.6" y="760.4" font-size="18" fill="#f4f4f4" textLength="41.5" lengthAdjust="spacingAndGlyphs" class="dj">80%</text>
<text x="1473.6" y="760.4" font-size="18" fill="#f4f4f4" textLength="54.5" lengthAdjust="spacingAndGlyphs" class="dj">100%</text>
<rect x="837.50" y="769.70" width="744.20" height="30.14" fill="#424242"/>
<rect x="816.70" y="769.70" width="20.80" height="30.14" fill="url(#gStub)"/>
<text x="844.6" y="791.7" font-size="18" fill="#f4f4f4" textLength="84.0" lengthAdjust="spacingAndGlyphs" class="dj">x: CIE31</text>
<text x="1014.6" y="791.7" font-size="18" fill="#f4f4f4" textLength="69.8" lengthAdjust="spacingAndGlyphs" class="dj">0.3311</text>
<text x="1129.4" y="791.7" font-size="18" fill="#f4f4f4" textLength="69.8" lengthAdjust="spacingAndGlyphs" class="dj">0.3531</text>
<text x="1244.0" y="791.7" font-size="18" fill="#f4f4f4" textLength="69.8" lengthAdjust="spacingAndGlyphs" class="dj">0.3742</text>
<text x="1358.6" y="791.7" font-size="18" fill="#f4f4f4" textLength="69.8" lengthAdjust="spacingAndGlyphs" class="dj">0.3925</text>
<text x="1473.6" y="791.7" font-size="18" fill="#f4f4f4" textLength="69.8" lengthAdjust="spacingAndGlyphs" class="dj">0.4169</text>
<rect x="837.50" y="799.54" width="744.20" height="30.14" fill="#828282"/>
<rect x="816.70" y="799.54" width="20.80" height="30.14" fill="url(#gStub)"/>
<text x="844.6" y="821.5" font-size="18" fill="#ececec" textLength="84.0" lengthAdjust="spacingAndGlyphs" class="dj">y: CIE31</text>
<text x="1014.6" y="821.5" font-size="18" fill="#ececec" textLength="69.8" lengthAdjust="spacingAndGlyphs" class="dj">0.3661</text>
<text x="1129.4" y="821.5" font-size="18" fill="#ececec" textLength="69.8" lengthAdjust="spacingAndGlyphs" class="dj">0.4030</text>
<text x="1244.0" y="821.5" font-size="18" fill="#ececec" textLength="69.8" lengthAdjust="spacingAndGlyphs" class="dj">0.4397</text>
<text x="1358.6" y="821.5" font-size="18" fill="#ececec" textLength="69.8" lengthAdjust="spacingAndGlyphs" class="dj">0.4716</text>
<text x="1473.6" y="821.5" font-size="18" fill="#ececec" textLength="69.8" lengthAdjust="spacingAndGlyphs" class="dj">0.5095</text>
<rect x="837.50" y="829.38" width="744.20" height="30.14" fill="#424242"/>
<rect x="816.70" y="829.38" width="20.80" height="30.14" fill="url(#gStub)"/>
<text x="844.6" y="851.4" font-size="18" fill="#f4f4f4" textLength="11.5" lengthAdjust="spacingAndGlyphs" class="dj">Y</text>
<text x="1014.6" y="851.4" font-size="18" fill="#f4f4f4" textLength="98.0" lengthAdjust="spacingAndGlyphs" class="dj">151.7186</text>
<text x="1129.4" y="851.4" font-size="18" fill="#f4f4f4" textLength="98.0" lengthAdjust="spacingAndGlyphs" class="dj">149.5724</text>
<text x="1244.0" y="851.4" font-size="18" fill="#f4f4f4" textLength="98.0" lengthAdjust="spacingAndGlyphs" class="dj">147.6087</text>
<text x="1358.6" y="851.4" font-size="18" fill="#f4f4f4" textLength="98.0" lengthAdjust="spacingAndGlyphs" class="dj">146.1312</text>
<text x="1473.6" y="851.4" font-size="18" fill="#f4f4f4" textLength="98.0" lengthAdjust="spacingAndGlyphs" class="dj">143.4551</text>
<rect x="837.50" y="859.22" width="744.20" height="30.14" fill="#828282"/>
<rect x="816.70" y="859.22" width="20.80" height="30.14" fill="url(#gStub)"/>
<text x="844.6" y="881.2" font-size="18" fill="#ececec" textLength="151.2" lengthAdjust="spacingAndGlyphs" class="dj">Target x:CIE31</text>
<text x="1014.6" y="881.2" font-size="18" fill="#ececec" textLength="69.8" lengthAdjust="spacingAndGlyphs" class="dj">0.3344</text>
<text x="1129.4" y="881.2" font-size="18" fill="#ececec" textLength="69.8" lengthAdjust="spacingAndGlyphs" class="dj">0.3564</text>
<text x="1244.0" y="881.2" font-size="18" fill="#ececec" textLength="69.8" lengthAdjust="spacingAndGlyphs" class="dj">0.3773</text>
<text x="1358.6" y="881.2" font-size="18" fill="#ececec" textLength="69.8" lengthAdjust="spacingAndGlyphs" class="dj">0.3969</text>
<text x="1473.6" y="881.2" font-size="18" fill="#ececec" textLength="69.8" lengthAdjust="spacingAndGlyphs" class="dj">0.4193</text>
<rect x="837.50" y="889.06" width="744.20" height="30.14" fill="#424242"/>
<rect x="816.70" y="889.06" width="20.80" height="30.14" fill="url(#gStub)"/>
<text x="844.6" y="911.1" font-size="18" fill="#f4f4f4" textLength="151.2" lengthAdjust="spacingAndGlyphs" class="dj">Target y:CIE31</text>
<text x="1014.6" y="911.1" font-size="18" fill="#f4f4f4" textLength="69.8" lengthAdjust="spacingAndGlyphs" class="dj">0.3648</text>
<text x="1129.4" y="911.1" font-size="18" fill="#f4f4f4" textLength="69.8" lengthAdjust="spacingAndGlyphs" class="dj">0.4013</text>
<text x="1244.0" y="911.1" font-size="18" fill="#f4f4f4" textLength="69.8" lengthAdjust="spacingAndGlyphs" class="dj">0.4358</text>
<text x="1358.6" y="911.1" font-size="18" fill="#f4f4f4" textLength="69.8" lengthAdjust="spacingAndGlyphs" class="dj">0.4682</text>
<text x="1473.6" y="911.1" font-size="18" fill="#f4f4f4" textLength="69.8" lengthAdjust="spacingAndGlyphs" class="dj">0.5053</text>
<rect x="837.50" y="918.90" width="744.20" height="30.14" fill="#828282"/>
<rect x="816.70" y="918.90" width="20.80" height="30.14" fill="url(#gStub)"/>
<text x="844.6" y="940.9" font-size="18" fill="#ececec" textLength="88.0" lengthAdjust="spacingAndGlyphs" class="dj">Target Y</text>
<text x="1014.6" y="940.9" font-size="18" fill="#ececec" textLength="98.0" lengthAdjust="spacingAndGlyphs" class="dj">154.0384</text>
<text x="1129.4" y="940.9" font-size="18" fill="#ececec" textLength="98.0" lengthAdjust="spacingAndGlyphs" class="dj">151.3345</text>
<text x="1244.0" y="940.9" font-size="18" fill="#ececec" textLength="98.0" lengthAdjust="spacingAndGlyphs" class="dj">149.2570</text>
<text x="1358.6" y="940.9" font-size="18" fill="#ececec" textLength="98.0" lengthAdjust="spacingAndGlyphs" class="dj">147.6266</text>
<text x="1473.6" y="940.9" font-size="18" fill="#ececec" textLength="98.0" lengthAdjust="spacingAndGlyphs" class="dj">146.0503</text>
<rect x="837.50" y="948.74" width="744.20" height="30.14" fill="#424242"/>
<rect x="816.70" y="948.74" width="20.80" height="30.14" fill="url(#gStub)"/>
<text x="844.6" y="970.7" font-size="18" fill="#f4f4f4" textLength="88.5" lengthAdjust="spacingAndGlyphs" class="dj">ΔE 2000</text>
<text x="1014.6" y="970.7" font-size="18" fill="#f4f4f4" textLength="69.8" lengthAdjust="spacingAndGlyphs" class="dj">1.9085</text>
<text x="1129.4" y="970.7" font-size="18" fill="#f4f4f4" textLength="69.8" lengthAdjust="spacingAndGlyphs" class="dj">1.3119</text>
<text x="1244.0" y="970.7" font-size="18" fill="#f4f4f4" textLength="69.8" lengthAdjust="spacingAndGlyphs" class="dj">1.3104</text>
<text x="1358.6" y="970.7" font-size="18" fill="#f4f4f4" textLength="69.8" lengthAdjust="spacingAndGlyphs" class="dj">1.3204</text>
<text x="1473.6" y="970.7" font-size="18" fill="#f4f4f4" textLength="69.8" lengthAdjust="spacingAndGlyphs" class="dj">0.8979</text>
<rect x="837.50" y="978.58" width="744.20" height="30.14" fill="#828282"/>
<rect x="816.70" y="978.58" width="20.80" height="30.14" fill="url(#gStub)"/>
<text x="844.6" y="1000.6" font-size="18" fill="#ececec" textLength="59.5" lengthAdjust="spacingAndGlyphs" class="dj">dEITP</text>
<text x="1014.6" y="1000.6" font-size="18" fill="#ececec" textLength="69.8" lengthAdjust="spacingAndGlyphs" class="dj">2.6450</text>
<text x="1129.4" y="1000.6" font-size="18" fill="#ececec" textLength="69.8" lengthAdjust="spacingAndGlyphs" class="dj">2.4562</text>
<text x="1244.0" y="1000.6" font-size="18" fill="#ececec" textLength="69.8" lengthAdjust="spacingAndGlyphs" class="dj">2.8126</text>
<text x="1358.6" y="1000.6" font-size="18" fill="#ececec" textLength="69.8" lengthAdjust="spacingAndGlyphs" class="dj">2.9859</text>
<text x="1473.6" y="1000.6" font-size="18" fill="#ececec" textLength="69.8" lengthAdjust="spacingAndGlyphs" class="dj">2.6985</text>
</g>
<g id="strip">
<rect x="150.00" y="1011.00" width="1770.00" height="47.00" fill="url(#gStrip)"/>
<path d="M151.4,1058 V1015 Q151.4,1012 154.4,1012 H181.4 Q184.4,1012 184.4,1015 V1058Z" fill="url(#gCell)"/>
<circle cx="167.7" cy="1018.2" r="5.4" fill="url(#gKnobD)"/><path d="M164.7,1019.6 h6 l-3,-3.4z" fill="#1c1c1c"/>
<rect x="155" y="1031.1" width="26.2" height="22.4" rx="1.6" fill="#ffff00" stroke="#5a5a3a" stroke-width="0.7"/>
<path d="M189,1058 V1015 Q189,1012 192,1012 H298 Q301,1012 301,1015 V1058Z" fill="url(#gCell)"/>
<rect x="193.6" y="1016" width="103.6" height="25.8" rx="2" fill="#c2c2a2" stroke="#6a6a6a" stroke-width="0.8"/>
<text x="245.0" y="1053.9" font-size="8.4" fill="#2a2a2a" text-anchor="middle" font-weight="bold" textLength="15.2" lengthAdjust="spacingAndGlyphs">20%</text>
<path d="M303.1,1058 V1015 Q303.1,1012 306.1,1012 H412.1 Q415.1,1012 415.1,1015 V1058Z" fill="url(#gCell)"/>
<rect x="307.70000000000005" y="1016" width="103.6" height="25.8" rx="2" fill="#c0c088" stroke="#6a6a6a" stroke-width="0.8"/>
<text x="359.1" y="1053.9" font-size="8.4" fill="#2a2a2a" text-anchor="middle" font-weight="bold" textLength="15.2" lengthAdjust="spacingAndGlyphs">40%</text>
<path d="M417.2,1058 V1015 Q417.2,1012 420.2,1012 H526.2 Q529.2,1012 529.2,1015 V1058Z" fill="url(#gCell)"/>
<rect x="421.8" y="1016" width="103.6" height="25.8" rx="2" fill="#c0c070" stroke="#6a6a6a" stroke-width="0.8"/>
<text x="473.2" y="1053.9" font-size="8.4" fill="#2a2a2a" text-anchor="middle" font-weight="bold" textLength="15.2" lengthAdjust="spacingAndGlyphs">60%</text>
<path d="M531.3,1058 V1015 Q531.3,1012 534.3,1012 H640.3 Q643.3,1012 643.3,1015 V1058Z" fill="url(#gCell)"/>
<rect x="535.9" y="1016" width="103.6" height="25.8" rx="2" fill="#c0c050" stroke="#6a6a6a" stroke-width="0.8"/>
<text x="587.3" y="1053.9" font-size="8.4" fill="#2a2a2a" text-anchor="middle" font-weight="bold" textLength="15.2" lengthAdjust="spacingAndGlyphs">80%</text>
<path d="M645.4,1058 V1015 Q645.4,1012 648.4,1012 H754.4 Q757.4,1012 757.4,1015 V1058Z" fill="url(#gSel)"/>
<rect x="650.0" y="1016" width="103.6" height="25.8" rx="2" fill="#c4c400" stroke="#000" stroke-width="0.8"/>
<text x="701.4" y="1053.9" font-size="8.4" fill="#fff" text-anchor="middle" font-weight="bold" textLength="19.6" lengthAdjust="spacingAndGlyphs">100%</text>
<rect x="1715.4" y="1018.2" width="33.2" height="15.6" fill="url(#gCell)" stroke="#4e4e4e" stroke-width="0.7"/>
<circle cx="1732.0" cy="1026.4" r="5.4" fill="#9a9a9a" stroke="#6c6c6c" stroke-width="0.6"/>
<rect x="1749.2" y="1018.2" width="33.2" height="15.6" fill="url(#gCell)" stroke="#4e4e4e" stroke-width="0.7"/>
<circle cx="1765.8" cy="1026.4" r="5.4" fill="#9a9a9a" stroke="#6c6c6c" stroke-width="0.6"/>
<rect x="1782.9" y="1018.2" width="33.2" height="15.6" fill="url(#gCell)" stroke="#4e4e4e" stroke-width="0.7"/>
<circle cx="1799.5" cy="1026.4" r="5.4" fill="#9a9a9a" stroke="#6c6c6c" stroke-width="0.6"/>
<rect x="1816.7" y="1018.2" width="33.2" height="15.6" fill="url(#gCell)" stroke="#4e4e4e" stroke-width="0.7"/>
<circle cx="1833.2" cy="1026.4" r="5.4" fill="#9a9a9a" stroke="#6c6c6c" stroke-width="0.6"/>
<rect x="1850.4" y="1018.2" width="33.2" height="15.6" fill="url(#gCell)" stroke="#4e4e4e" stroke-width="0.7"/>
<circle cx="1867.0" cy="1026.4" r="5.4" fill="#9a9a9a" stroke="#6c6c6c" stroke-width="0.6"/>
<rect x="1884.20" y="1018.20" width="16.00" height="15.60" fill="#2c2c2c"/>
<circle cx="1901.6" cy="1026.6" r="5.6" fill="#262626"/>
<path d="M1678,1058 V1032 Q1678,1029 1681,1029 H1709 Q1712,1029 1712,1032 V1058Z" fill="#6e6e6e"/>
<rect x="1685" y="1031" width="21" height="21" rx="3" fill="#8a8a8a" stroke="#d8d8d8" stroke-width="1.4"/><rect x="1690.3" y="1036.2" width="10.4" height="10.4" fill="#000"/>
<path d="M1715.6,1058 V1038 Q1715.6,1035 1718.6,1035 H1816 V1058Z" fill="url(#gNav)" stroke="#6a6a6a" stroke-width="0.6"/>
<path d="M1816,1058 V1035 H1915 Q1918,1035 1918,1038 V1058Z" fill="url(#gNav)" stroke="#6a6a6a" stroke-width="0.6"/>
<circle cx="1737.4" cy="1046.2" r="7.2" fill="url(#gKn2)"/><circle cx="1897.5" cy="1046.2" r="7.2" fill="url(#gKn2)"/>
<text x="1737.4" y="1049.8" font-size="12" fill="#2e2e2e" text-anchor="middle">«</text>
<text x="1897.5" y="1049.8" font-size="12" fill="#2e2e2e" text-anchor="middle">»</text>
<text x="1757.8" y="1051.6" font-size="15.8" fill="#2c2c2c" textLength="37.5" lengthAdjust="spacingAndGlyphs">Back</text>
<text x="1837.9" y="1051.6" font-size="15.8" fill="#2c2c2c" textLength="38.4" lengthAdjust="spacingAndGlyphs">Next</text>
</g>
<g id="watermark" opacity="0.72">
<path d="M1631.6,996.6 L1670.2,1004.8 L1670.6,1026.6 L1641.5,1029.3 L1697.6,1032.6 L1656.6,1045.2 L1633.6,1034Z" fill="none" stroke="#e8c8c8" stroke-width="4.8" stroke-linejoin="round" stroke-opacity="0.7"/>
<path d="M1631.6,996.6 L1670.2,1004.8 L1670.6,1026.6 L1641.5,1029.3 L1697.6,1032.6 L1656.6,1045.2 L1633.6,1034Z" fill="none" stroke="#a8242c" stroke-width="3.3" stroke-linejoin="miter"/>
<path d="M1642.4,1009.4 Q1648,1014 1653.2,1023.6 Q1662,1006 1673.8,995.8" fill="none" stroke="#f0f0f0" stroke-width="5" stroke-linecap="round" stroke-linejoin="round"/>
<path d="M1642.4,1009.4 Q1648,1014 1653.2,1023.6 Q1662,1006 1673.8,995.8" fill="none" stroke="#3a2e30" stroke-width="3.2" stroke-linecap="round" stroke-linejoin="round"/>
<text x="1676.0" y="1025.0" font-size="26.8" fill="#c03646" font-weight="bold" textLength="147.2" lengthAdjust="spacingAndGlyphs" stroke="#ecc4c8" stroke-width="0.9" paint-order="stroke">NOTEBOOK</text>
<text x="1825.0" y="1025.0" font-size="26.8" fill="#ececec" textLength="87.5" lengthAdjust="spacingAndGlyphs" stroke="#ececec" stroke-width="2.6">CHECK</text>
<text x="1825.0" y="1025.0" font-size="26.8" fill="#262626" textLength="87.5" lengthAdjust="spacingAndGlyphs" stroke="#262626" stroke-width="0.9">CHECK</text>
</g>
</svg>
</body></html>
